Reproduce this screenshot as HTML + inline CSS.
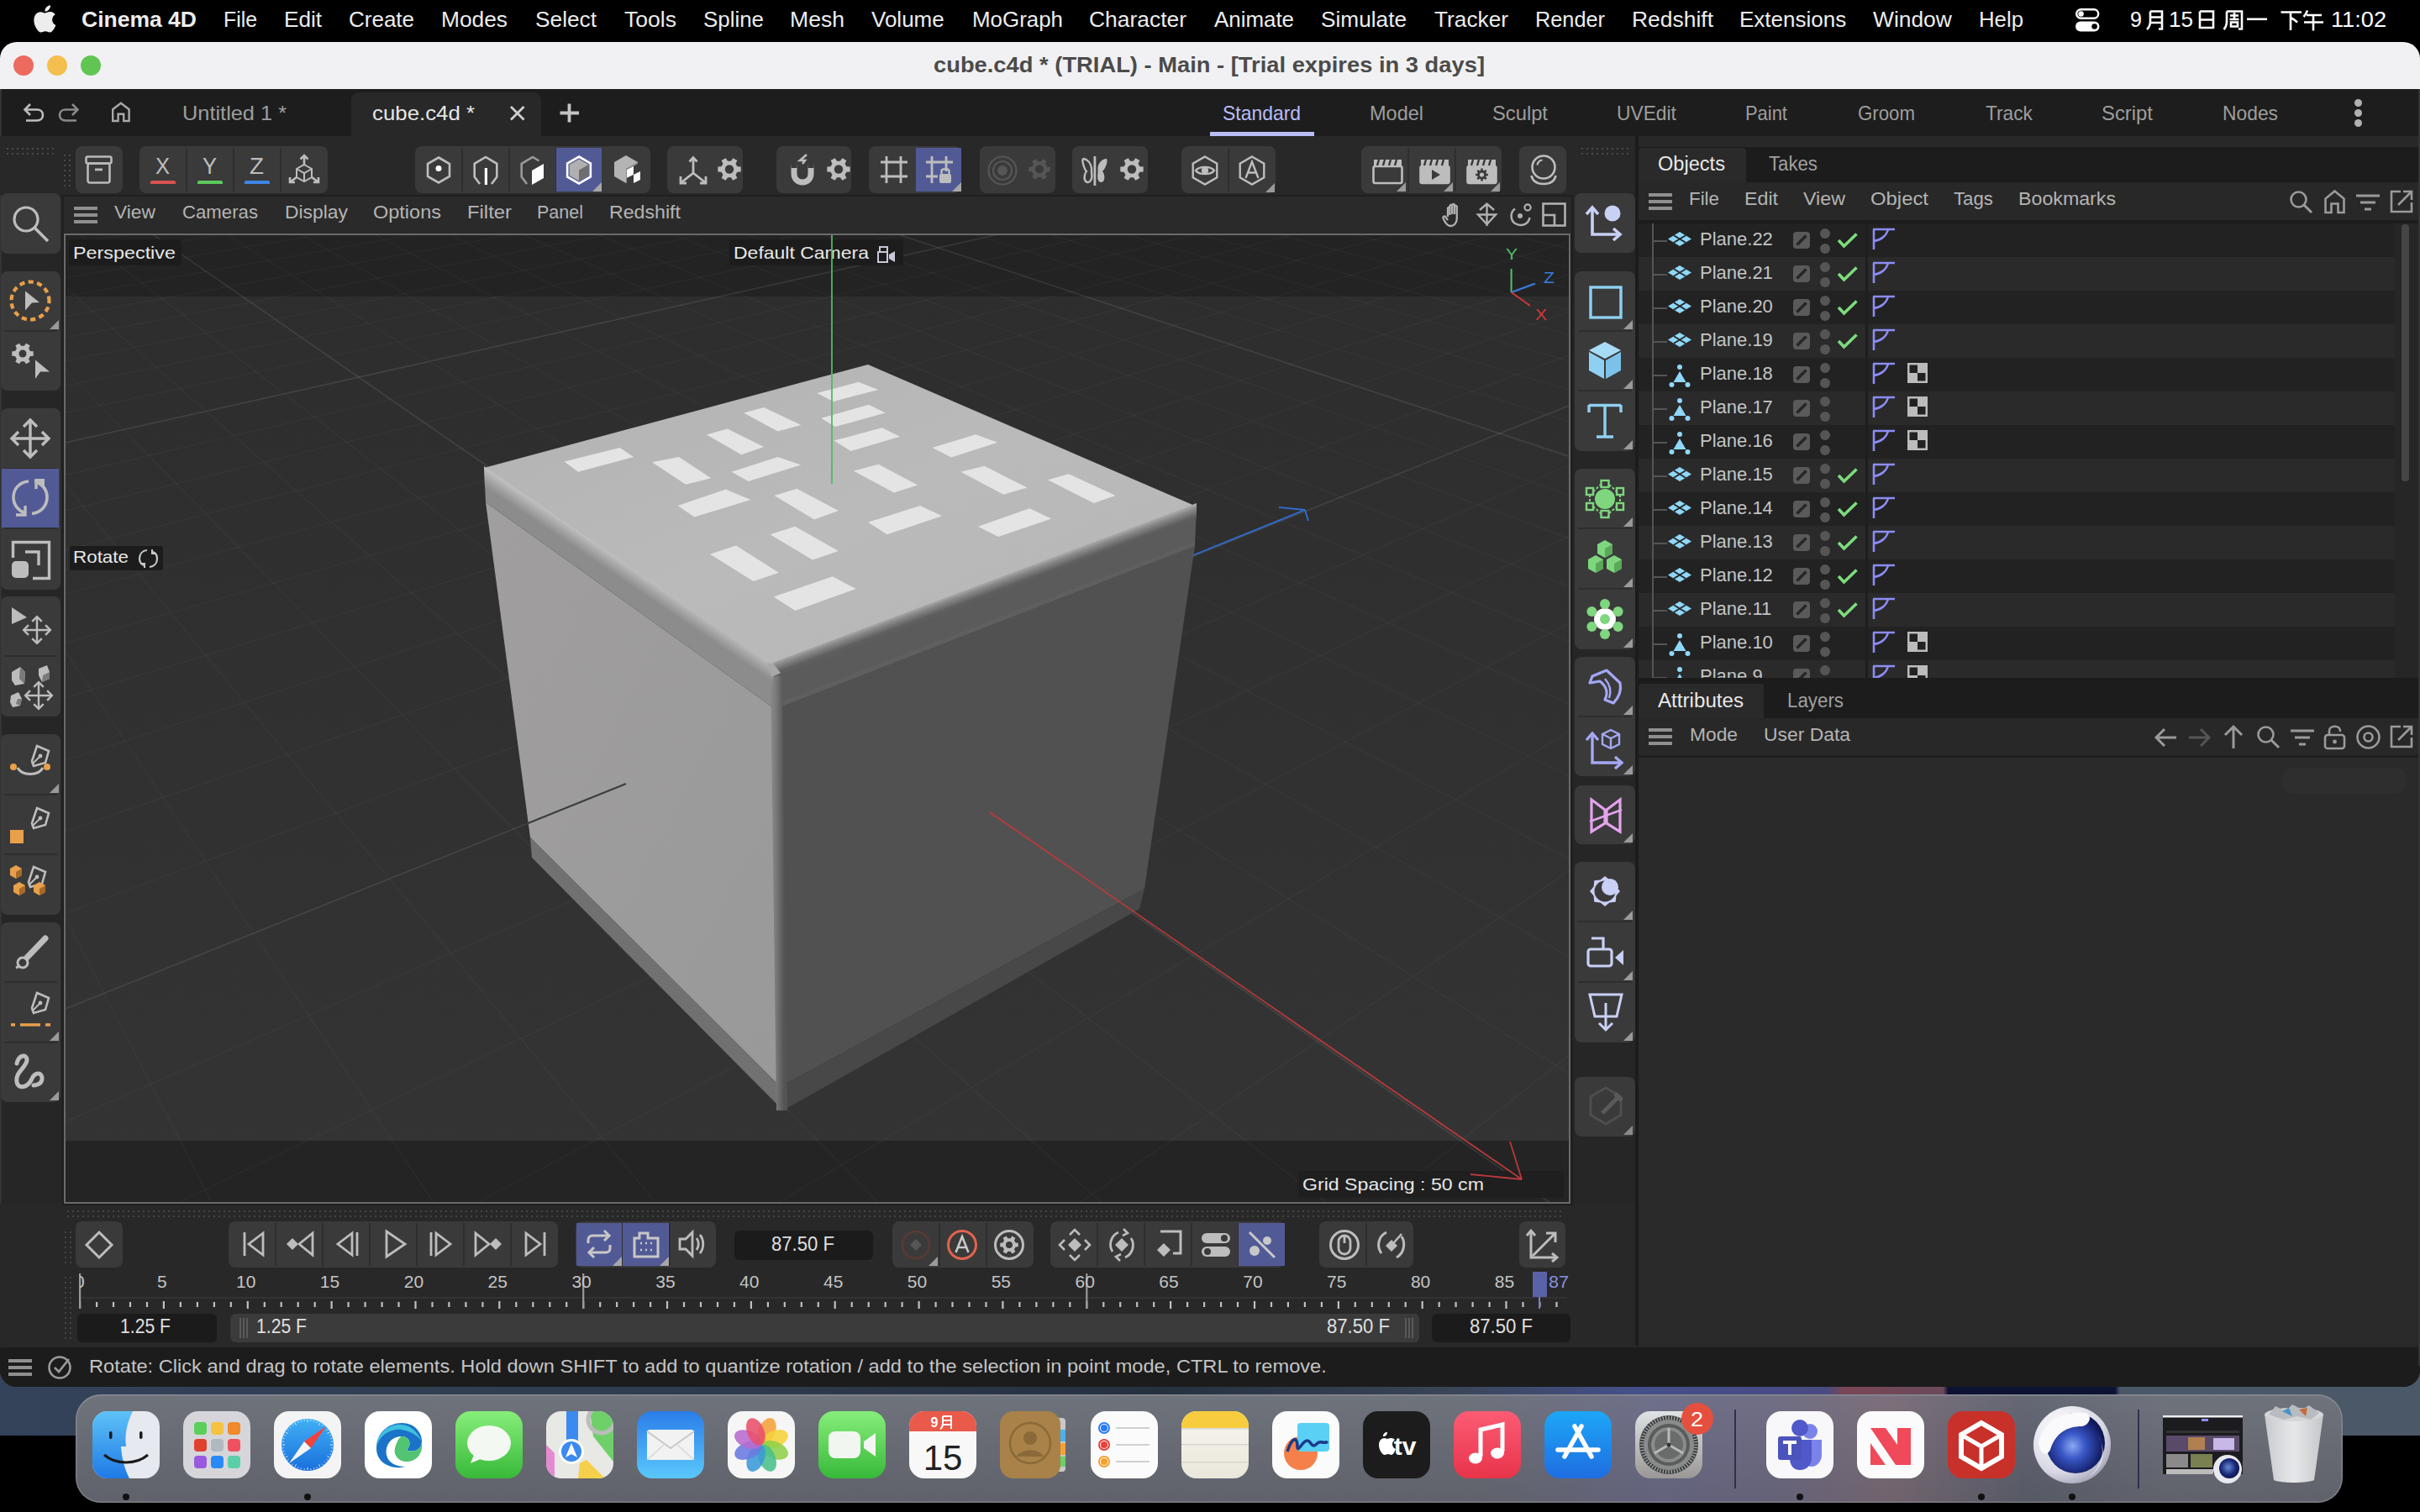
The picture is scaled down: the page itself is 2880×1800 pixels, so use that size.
<!DOCTYPE html><html><head><meta charset="utf-8"><style>
html,body{margin:0;padding:0;}
body{width:2880px;height:1800px;overflow:hidden;position:relative;background:#000;font-family:"Liberation Sans",sans-serif;}
.t{position:absolute;white-space:nowrap;}
svg{position:absolute;overflow:visible;}
</style></head><body>
<div style="position:absolute;left:0px;top:1630px;width:2880px;height:79px;background:linear-gradient(90deg,#34435a 0%,#2f3b4e 30%,#25313f 48%,#3a4557 60%,#44508a 67.4%,#4a4a82 75.5%,#7a4556 76.2%,#6a4a5a 80.3%,#0e1232 80.5%,#0e1232 87.4%,#4a5868 87.6%,#4a5868 100%);"></div>
<div style="position:absolute;left:0px;top:50px;width:2880px;height:1601px;background:#262626;border-radius:20px;"></div>
<div style="position:absolute;left:0px;top:50px;width:2880px;height:56px;background:#f1f1f3;border-radius:20px 20px 0 0;"></div>
<div style="position:absolute;left:16px;top:66px;width:24px;height:24px;border-radius:50%;background:#ed6a5f;"></div>
<div style="position:absolute;left:56px;top:66px;width:24px;height:24px;border-radius:50%;background:#f5bf4f;"></div>
<div style="position:absolute;left:96px;top:66px;width:24px;height:24px;border-radius:50%;background:#61c554;"></div>
<div class="t" style="left:1111.00px;top:52.34px;height:50px;line-height:50px;font-size:25px;color:#4b4b4b;font-weight:bold;transform:scaleX(1.0931);transform-origin:0 0;">cube.c4d * (TRIAL) - Main - [Trial expires in 3 days]</div>
<div style="position:absolute;left:0px;top:0px;width:2880px;height:50px;background:#000;"></div>
<svg style="position:absolute;left:39px;top:5px;overflow:visible;" width="30" height="36" viewBox="0 0 30 36"><path transform="scale(0.95)" fill="#ededed" d="M24.5 19.2c0-4.2 3.4-6.2 3.6-6.300-2-2.900-5.100-3.300-6.200-3.300-2.600-.3-5.100 1.500-6.400 1.500-1.300 0-3.400-1.500-5.600-1.400-2.900 0-5.500 1.700-7 4.200-3 5.200-.8 12.900 2.100 17.100 1.400 2.100 3.100 4.400 5.300 4.300 2.100-.1 2.900-1.400 5.500-1.400 2.500 0 3.300 1.400 5.500 1.300 2.300 0 3.700-2.100 5.100-4.200 1.600-2.400 2.300-4.700 2.300-4.800-.1 0-4.400-1.700-4.400-6.900zM20.300 6.600c1.200-1.400 2-3.400 1.800-5.400-1.700.1-3.800 1.200-5 2.600-1.100 1.300-2.100 3.300-1.800 5.300 1.900.1 3.800-1 5-2.500z"/></svg>
<div class="t" style="left:97.00px;top:-3.01px;height:52px;line-height:52px;font-size:26px;color:#ededed;font-weight:bold;transform:scaleX(1.0195);transform-origin:0 0;">Cinema 4D</div>
<div class="t" style="left:266.00px;top:-3.01px;height:52px;line-height:52px;font-size:26px;color:#ededed;font-weight:normal;transform:scaleX(0.9552);transform-origin:0 0;">File</div>
<div class="t" style="left:338.00px;top:-3.01px;height:52px;line-height:52px;font-size:26px;color:#ededed;font-weight:normal;transform:scaleX(1.0056);transform-origin:0 0;">Edit</div>
<div class="t" style="left:415.00px;top:-3.01px;height:52px;line-height:52px;font-size:26px;color:#ededed;font-weight:normal;">Create</div>
<div class="t" style="left:525.00px;top:-3.01px;height:52px;line-height:52px;font-size:26px;color:#ededed;font-weight:normal;transform:scaleX(1.0128);transform-origin:0 0;">Modes</div>
<div class="t" style="left:637.00px;top:-3.01px;height:52px;line-height:52px;font-size:26px;color:#ededed;font-weight:normal;transform:scaleX(1.0104);transform-origin:0 0;">Select</div>
<div class="t" style="left:743.00px;top:-3.01px;height:52px;line-height:52px;font-size:26px;color:#ededed;font-weight:normal;transform:scaleX(1.0206);transform-origin:0 0;">Tools</div>
<div class="t" style="left:837.00px;top:-3.01px;height:52px;line-height:52px;font-size:26px;color:#ededed;font-weight:normal;transform:scaleX(0.9965);transform-origin:0 0;">Spline</div>
<div class="t" style="left:940.00px;top:-3.01px;height:52px;line-height:52px;font-size:26px;color:#ededed;font-weight:normal;transform:scaleX(1.0216);transform-origin:0 0;">Mesh</div>
<div class="t" style="left:1037.00px;top:-3.01px;height:52px;line-height:52px;font-size:26px;color:#ededed;font-weight:normal;">Volume</div>
<div class="t" style="left:1157.00px;top:-3.01px;height:52px;line-height:52px;font-size:26px;color:#ededed;font-weight:normal;transform:scaleX(0.9965);transform-origin:0 0;">MoGraph</div>
<div class="t" style="left:1296.00px;top:-3.01px;height:52px;line-height:52px;font-size:26px;color:#ededed;font-weight:normal;transform:scaleX(1.0164);transform-origin:0 0;">Character</div>
<div class="t" style="left:1445.00px;top:-3.01px;height:52px;line-height:52px;font-size:26px;color:#ededed;font-weight:normal;transform:scaleX(0.9961);transform-origin:0 0;">Animate</div>
<div class="t" style="left:1572.00px;top:-3.01px;height:52px;line-height:52px;font-size:26px;color:#ededed;font-weight:normal;transform:scaleX(1.0087);transform-origin:0 0;">Simulate</div>
<div class="t" style="left:1707.00px;top:-3.01px;height:52px;line-height:52px;font-size:26px;color:#ededed;font-weight:normal;transform:scaleX(1.0100);transform-origin:0 0;">Tracker</div>
<div class="t" style="left:1827.00px;top:-3.01px;height:52px;line-height:52px;font-size:26px;color:#ededed;font-weight:normal;transform:scaleX(0.9736);transform-origin:0 0;">Render</div>
<div class="t" style="left:1942.00px;top:-3.01px;height:52px;line-height:52px;font-size:26px;color:#ededed;font-weight:normal;transform:scaleX(1.0170);transform-origin:0 0;">Redshift</div>
<div class="t" style="left:2070.00px;top:-3.01px;height:52px;line-height:52px;font-size:26px;color:#ededed;font-weight:normal;">Extensions</div>
<div class="t" style="left:2229.00px;top:-3.01px;height:52px;line-height:52px;font-size:26px;color:#ededed;font-weight:normal;transform:scaleX(1.0148);transform-origin:0 0;">Window</div>
<div class="t" style="left:2355.00px;top:-3.01px;height:52px;line-height:52px;font-size:26px;color:#ededed;font-weight:normal;transform:scaleX(0.9907);transform-origin:0 0;">Help</div>
<svg style="position:absolute;left:2470px;top:10px;overflow:visible;" width="30" height="28" viewBox="0 0 30 28"><rect x="1.2" y="1.2" width="26" height="10.5" rx="5.25" fill="none" stroke="#fff" stroke-width="2.4"/><circle cx="6.6" cy="6.45" r="3.2" fill="#fff"/><rect x="0" y="15.5" width="28.5" height="12" rx="6" fill="#fff"/><circle cx="22.6" cy="21.5" r="3.3" fill="#000"/></svg>
<div class="t" style="left:2535.00px;top:-3.01px;height:52px;line-height:52px;font-size:26px;color:#fff;font-weight:normal;transform:scaleX(0.9655);transform-origin:0 0;">9</div>
<div class="t" style="left:2581.00px;top:-3.01px;height:52px;line-height:52px;font-size:26px;color:#fff;font-weight:normal;transform:scaleX(1.0043);transform-origin:0 0;">15</div>
<div class="t" style="left:2774.00px;top:-3.01px;height:52px;line-height:52px;font-size:26px;color:#fff;font-weight:normal;transform:scaleX(1.0455);transform-origin:0 0;">11:02</div>
<svg style="position:absolute;left:2554px;top:12px;overflow:visible;" width="22" height="24" viewBox="0 0 22 24"><path stroke="#fff" stroke-width="2.6" fill="none" stroke-linecap="butt" d="M5 1.5H19V22.5H15M5 1.5V13C5 18 3.5 21 1 23M5 8.5H19M5 15H19"/></svg>
<svg style="position:absolute;left:2616px;top:12px;overflow:visible;" width="20" height="23" viewBox="0 0 20 23"><path stroke="#fff" stroke-width="2.6" fill="none" stroke-linecap="butt" d="M2 1.5H18V22M2 1.5V22M2 11.5H18M2 21H18"/></svg>
<svg style="position:absolute;left:2646px;top:12px;overflow:visible;" width="24" height="24" viewBox="0 0 24 24"><path stroke="#fff" stroke-width="2.6" fill="none" stroke-linecap="butt" d="M4 1.5H22V22.5H18M4 1.5V13C4 18 2.5 21 0.5 23M8 6.5H18M13 3V11M7.5 11H18.5M9 14.5H17V19.5H9Z"/></svg>
<svg style="position:absolute;left:2674px;top:20px;overflow:visible;" width="25" height="6" viewBox="0 0 25 6"><path stroke="#fff" stroke-width="2.6" fill="none" stroke-linecap="butt" d="M0 2.8H24"/></svg>
<svg style="position:absolute;left:2714px;top:12px;overflow:visible;" width="26" height="25" viewBox="0 0 26 25"><path stroke="#fff" stroke-width="2.6" fill="none" stroke-linecap="butt" d="M0.5 2.5H25M12 2.5V24M12 9C15 10.5 18 12.5 20 14.5"/></svg>
<svg style="position:absolute;left:2740px;top:12px;overflow:visible;" width="26" height="25" viewBox="0 0 26 25"><path stroke="#fff" stroke-width="2.6" fill="none" stroke-linecap="butt" d="M6 0.5C5 3.5 3.5 6 1.5 8M5 6H23M2 14.5H25M13 6V24.5"/></svg>
<div style="position:absolute;left:0px;top:106px;width:2880px;height:56px;background:#1d1d1d;"></div>
<div style="position:absolute;left:0px;top:106px;width:2px;height:1520px;background:#333;"></div>
<svg style="position:absolute;left:26px;top:121px;overflow:visible;" width="30" height="26" viewBox="0 0 30 26"><path d="M4 9.5H18C22.5 9.5 25 12.5 25 16S22.5 22.5 18 22.5H5" fill="none" stroke="#bdbdbd" stroke-width="2.6"/><path d="M10 3L3.5 9.5L10 16" fill="none" stroke="#bdbdbd" stroke-width="2.6"/></svg>
<svg style="position:absolute;left:66px;top:121px;overflow:visible;" width="30" height="26" viewBox="0 0 30 26"><path d="M26 9.5H12C7.5 9.5 5 12.5 5 16S7.5 22.5 12 22.5H25" fill="none" stroke="#8a8a8a" stroke-width="2.6"/><path d="M20 3L26.5 9.5L20 16" fill="none" stroke="#8a8a8a" stroke-width="2.6"/></svg>
<svg style="position:absolute;left:132px;top:121px;overflow:visible;" width="24" height="26" viewBox="0 0 24 26"><path d="M2.2 23V9.2L11.9 1.8L21.6 9.2V23H15.2V14.8H8.6V23Z" fill="none" stroke="#a8a8a8" stroke-width="2.4"/></svg>
<div class="t" style="left:217.00px;top:110.68px;height:48px;line-height:48px;font-size:24px;color:#9e9e9e;font-weight:normal;transform:scaleX(1.0564);transform-origin:0 0;">Untitled 1 *</div>
<div style="position:absolute;left:418px;top:110px;width:226px;height:56px;background:#282828;border-radius:9px 9px 0 0;"></div>
<div class="t" style="left:443.00px;top:110.68px;height:48px;line-height:48px;font-size:24px;color:#e6e6e6;font-weight:normal;transform:scaleX(1.0761);transform-origin:0 0;">cube.c4d *</div>
<svg style="position:absolute;left:606px;top:125px;overflow:visible;" width="20" height="20" viewBox="0 0 20 20"><path d="M2 2L17.5 17.5M17.5 2L2 17.5" stroke="#d0d0d0" stroke-width="2.8"/></svg>
<svg style="position:absolute;left:666px;top:122px;overflow:visible;" width="24" height="24" viewBox="0 0 24 24"><path d="M11.5 1.5V23.5M0.5 12.5H23" stroke="#c4c4c4" stroke-width="3.8"/></svg>
<div class="t" style="left:1455.00px;top:110.68px;height:48px;line-height:48px;font-size:24px;color:#b9bdf5;font-weight:normal;transform:scaleX(0.9551);transform-origin:0 0;">Standard</div>
<div class="t" style="left:1630.00px;top:110.68px;height:48px;line-height:48px;font-size:24px;color:#9e9e9e;font-weight:normal;transform:scaleX(0.9790);transform-origin:0 0;">Model</div>
<div class="t" style="left:1776.00px;top:110.68px;height:48px;line-height:48px;font-size:24px;color:#9e9e9e;font-weight:normal;transform:scaleX(0.9888);transform-origin:0 0;">Sculpt</div>
<div class="t" style="left:1924.00px;top:110.68px;height:48px;line-height:48px;font-size:24px;color:#9e9e9e;font-weight:normal;transform:scaleX(0.9498);transform-origin:0 0;">UVEdit</div>
<div class="t" style="left:2077.00px;top:110.68px;height:48px;line-height:48px;font-size:24px;color:#9e9e9e;font-weight:normal;transform:scaleX(0.9132);transform-origin:0 0;">Paint</div>
<div class="t" style="left:2211.00px;top:110.68px;height:48px;line-height:48px;font-size:24px;color:#9e9e9e;font-weight:normal;transform:scaleX(0.9267);transform-origin:0 0;">Groom</div>
<div class="t" style="left:2363.00px;top:110.68px;height:48px;line-height:48px;font-size:24px;color:#9e9e9e;font-weight:normal;transform:scaleX(0.9451);transform-origin:0 0;">Track</div>
<div class="t" style="left:2501.00px;top:110.68px;height:48px;line-height:48px;font-size:24px;color:#9e9e9e;font-weight:normal;transform:scaleX(0.9939);transform-origin:0 0;">Script</div>
<div class="t" style="left:2645.00px;top:110.68px;height:48px;line-height:48px;font-size:24px;color:#9e9e9e;font-weight:normal;transform:scaleX(0.9514);transform-origin:0 0;">Nodes</div>
<div style="position:absolute;left:1440px;top:157px;width:124px;height:5px;background:#b9bdf5;"></div>
<div style="position:absolute;left:2802px;top:118px;width:9px;height:9px;border-radius:50%;background:#b0b0b0;"></div>
<div style="position:absolute;left:2802px;top:130px;width:9px;height:9px;border-radius:50%;background:#b0b0b0;"></div>
<div style="position:absolute;left:2802px;top:142px;width:9px;height:9px;border-radius:50%;background:#b0b0b0;"></div>
<div style="position:absolute;left:0px;top:162px;width:2880px;height:70px;background:#282828;"></div>
<svg style="position:absolute;left:0px;top:0px;overflow:visible;" width="10" height="10" viewBox="0 0 10 10"><rect x="8" y="176" width="2" height="2" fill="#4a4a4a"/><rect x="14" y="176" width="2" height="2" fill="#4a4a4a"/><rect x="20" y="176" width="2" height="2" fill="#4a4a4a"/><rect x="26" y="176" width="2" height="2" fill="#4a4a4a"/><rect x="32" y="176" width="2" height="2" fill="#4a4a4a"/><rect x="38" y="176" width="2" height="2" fill="#4a4a4a"/><rect x="44" y="176" width="2" height="2" fill="#4a4a4a"/><rect x="50" y="176" width="2" height="2" fill="#4a4a4a"/><rect x="56" y="176" width="2" height="2" fill="#4a4a4a"/><rect x="62" y="176" width="2" height="2" fill="#4a4a4a"/><rect x="8" y="182" width="2" height="2" fill="#4a4a4a"/><rect x="14" y="182" width="2" height="2" fill="#4a4a4a"/><rect x="20" y="182" width="2" height="2" fill="#4a4a4a"/><rect x="26" y="182" width="2" height="2" fill="#4a4a4a"/><rect x="32" y="182" width="2" height="2" fill="#4a4a4a"/><rect x="38" y="182" width="2" height="2" fill="#4a4a4a"/><rect x="44" y="182" width="2" height="2" fill="#4a4a4a"/><rect x="50" y="182" width="2" height="2" fill="#4a4a4a"/><rect x="56" y="182" width="2" height="2" fill="#4a4a4a"/><rect x="62" y="182" width="2" height="2" fill="#4a4a4a"/><rect x="76" y="184" width="2" height="2" fill="#4a4a4a"/><rect x="76" y="190" width="2" height="2" fill="#4a4a4a"/><rect x="76" y="196" width="2" height="2" fill="#4a4a4a"/><rect x="76" y="202" width="2" height="2" fill="#4a4a4a"/><rect x="76" y="208" width="2" height="2" fill="#4a4a4a"/><rect x="76" y="214" width="2" height="2" fill="#4a4a4a"/><rect x="76" y="220" width="2" height="2" fill="#4a4a4a"/><rect x="82" y="184" width="2" height="2" fill="#4a4a4a"/><rect x="82" y="190" width="2" height="2" fill="#4a4a4a"/><rect x="82" y="196" width="2" height="2" fill="#4a4a4a"/><rect x="82" y="202" width="2" height="2" fill="#4a4a4a"/><rect x="82" y="208" width="2" height="2" fill="#4a4a4a"/><rect x="82" y="214" width="2" height="2" fill="#4a4a4a"/><rect x="82" y="220" width="2" height="2" fill="#4a4a4a"/></svg>
<svg style="position:absolute;left:0px;top:0px;overflow:visible;" width="10" height="10" viewBox="0 0 10 10"><rect x="1882" y="176" width="2" height="2" fill="#4a4a4a"/><rect x="1888" y="176" width="2" height="2" fill="#4a4a4a"/><rect x="1894" y="176" width="2" height="2" fill="#4a4a4a"/><rect x="1900" y="176" width="2" height="2" fill="#4a4a4a"/><rect x="1906" y="176" width="2" height="2" fill="#4a4a4a"/><rect x="1912" y="176" width="2" height="2" fill="#4a4a4a"/><rect x="1918" y="176" width="2" height="2" fill="#4a4a4a"/><rect x="1924" y="176" width="2" height="2" fill="#4a4a4a"/><rect x="1930" y="176" width="2" height="2" fill="#4a4a4a"/><rect x="1936" y="176" width="2" height="2" fill="#4a4a4a"/><rect x="1882" y="182" width="2" height="2" fill="#4a4a4a"/><rect x="1888" y="182" width="2" height="2" fill="#4a4a4a"/><rect x="1894" y="182" width="2" height="2" fill="#4a4a4a"/><rect x="1900" y="182" width="2" height="2" fill="#4a4a4a"/><rect x="1906" y="182" width="2" height="2" fill="#4a4a4a"/><rect x="1912" y="182" width="2" height="2" fill="#4a4a4a"/><rect x="1918" y="182" width="2" height="2" fill="#4a4a4a"/><rect x="1924" y="182" width="2" height="2" fill="#4a4a4a"/><rect x="1930" y="182" width="2" height="2" fill="#4a4a4a"/><rect x="1936" y="182" width="2" height="2" fill="#4a4a4a"/></svg>
<div style="position:absolute;left:90px;top:174px;width:56px;height:56px;background:#3a3a3a;border-radius:8px;"></div>
<svg style="position:absolute;left:100px;top:184px;overflow:visible;" width="36" height="36" viewBox="0 0 36 36"><rect x="2.5" y="2.5" width="30" height="8" rx="2" fill="none" stroke="#bababa" stroke-width="2.6"/><rect x="4.5" y="10.5" width="26" height="23" rx="2.5" fill="none" stroke="#bababa" stroke-width="2.6"/><rect x="13" y="16.5" width="9" height="2.8" fill="#bababa"/></svg>
<div style="position:absolute;left:166px;top:174px;width:224px;height:56px;background:#3a3a3a;border-radius:8px;"></div>
<div style="position:absolute;left:221px;top:176px;width:2px;height:52px;background:#2e2e2e;"></div>
<div style="position:absolute;left:277px;top:176px;width:2px;height:52px;background:#2e2e2e;"></div>
<div style="position:absolute;left:333px;top:176px;width:2px;height:52px;background:#2e2e2e;"></div>
<div class="t" style="left:185.00px;top:170.30px;height:56px;line-height:56px;font-size:28px;color:#bdbdbd;font-weight:normal;transform:scaleX(0.9128);transform-origin:0 0;">X</div>
<div style="position:absolute;left:179px;top:215px;width:30px;height:4px;background:#d9534f;border-radius:2px 2px 0 0;"></div>
<div class="t" style="left:241.00px;top:170.30px;height:56px;line-height:56px;font-size:28px;color:#bdbdbd;font-weight:normal;transform:scaleX(0.9128);transform-origin:0 0;">Y</div>
<div style="position:absolute;left:235px;top:215px;width:30px;height:4px;background:#5cc85c;border-radius:2px 2px 0 0;"></div>
<div class="t" style="left:297.00px;top:170.30px;height:56px;line-height:56px;font-size:28px;color:#bdbdbd;font-weight:normal;transform:scaleX(0.9927);transform-origin:0 0;">Z</div>
<div style="position:absolute;left:291px;top:215px;width:30px;height:4px;background:#3e86e6;border-radius:2px 2px 0 0;"></div>
<svg style="position:absolute;left:342px;top:183px;overflow:visible;" width="40" height="38" viewBox="0 0 40 38"><path d="M20 13L29 18V28L20 33L11 28V18Z M11 18L20 23L29 18 M20 23V33" fill="none" stroke="#bdbdbd" stroke-width="2"/><path d="M20 13V2M15.5 6.5L20 2L24.5 6.5" fill="none" stroke="#bdbdbd" stroke-width="2.6"/><path d="M11 28L3 34M3 28V34H9 M29 28L37 34M37 28V34H31" fill="none" stroke="#bdbdbd" stroke-width="2.6"/></svg>
<div style="position:absolute;left:494px;top:174px;width:280px;height:56px;background:#3a3a3a;border-radius:8px;"></div>
<div style="position:absolute;left:549px;top:176px;width:2px;height:52px;background:#2e2e2e;"></div>
<div style="position:absolute;left:605px;top:176px;width:2px;height:52px;background:#2e2e2e;"></div>
<div style="position:absolute;left:661px;top:176px;width:2px;height:52px;background:#2e2e2e;"></div>
<div style="position:absolute;left:662px;top:176px;width:54px;height:52px;background:#525a96;"></div>
<svg style="position:absolute;left:704px;top:216px;overflow:visible;" width="12" height="12" viewBox="0 0 12 12"><polygon points="12,1 12,12 1,12" fill="#a8a8a8"/></svg>
<svg style="position:absolute;left:505px;top:185px;overflow:visible;" width="36" height="38" viewBox="0 0 36 38"><polygon points="17.00,2.50 29.99,10.00 29.99,25.00 17.00,32.50 4.01,25.00 4.01,10.00" fill="none" stroke="#bdbdbd" stroke-width="2.6"/><circle cx="17" cy="15.5" r="3.5" fill="#fff"/></svg>
<svg style="position:absolute;left:561px;top:185px;overflow:visible;" width="36" height="38" viewBox="0 0 36 38"><path d="M10 34L3.7 25.5V9.8L17 2L30.3 9.8V25.5L24 34" fill="none" stroke="#bdbdbd" stroke-width="2.6"/><rect x="15.8" y="15" width="3.2" height="20" fill="#fff"/></svg>
<svg style="position:absolute;left:617px;top:185px;overflow:visible;" width="36" height="38" viewBox="0 0 36 38"><path d="M10 34L3.7 25.5V9.8L17 2L24.5 6.5" fill="none" stroke="#9a9a9a" stroke-width="2.6"/><polygon points="16,18 30,10 30,27 16,35" fill="#fff"/></svg>
<svg style="position:absolute;left:672px;top:185px;overflow:visible;" width="36" height="38" viewBox="0 0 36 38"><polygon points="17.00,1.50 30.86,9.50 30.86,25.50 17.00,33.50 3.14,25.50 3.14,9.50" fill="none" stroke="#fff" stroke-width="2.6"/><polygon points="17.00,4.50 28.26,11.00 28.26,24.00 17.00,30.50 5.74,24.00 5.74,11.00" fill="#b0b0b0"/><polygon points="17,17.5 28.3,11 28.3,24 17,30.5" fill="#6e6e6e"/></svg>
<svg style="position:absolute;left:728px;top:183px;overflow:visible;" width="38" height="38" viewBox="0 0 38 38"><polygon points="3,10 17,2 31,10 31,27 17,35 3,27" fill="#b4b4b4"/><polygon points="17,18 38,8 38,40 17,40" fill="#3a3a3a"/><polygon points="17,18 31,10 31,27 17,35" fill="#8a8a8a"/><polygon points="18,19 26,15 26,25 18,29" fill="#3a3a3a"/><polygon points="18,19 26,15 26,25 18,29" fill="#fff"/><polygon points="26,25 34,21 34,31 26,35" fill="#fff"/><polygon points="26,15 31,12 31,22 26,25" fill="#3a3a3a"/><polygon points="18,29 26,25 26,35 18,38" fill="#3a3a3a"/></svg>
<div style="position:absolute;left:794px;top:174px;width:90px;height:56px;background:#3a3a3a;border-radius:8px;"></div>
<svg style="position:absolute;left:806px;top:184px;overflow:visible;" width="38" height="38" viewBox="0 0 38 38"><path d="M19 4V22L5 33M19 22L33 33" fill="none" stroke="#bdbdbd" stroke-width="2.8"/><path d="M14.5 8.5L19 3.5L23.5 8.5" fill="none" stroke="#bdbdbd" stroke-width="2.8"/><path d="M4 26V34H11M34 26V34H27" fill="none" stroke="#bdbdbd" stroke-width="2.8"/></svg>
<svg style="position:absolute;left:851px;top:185px;overflow:visible;" width="34" height="34" viewBox="0 0 34 34"><polygon points="26.47,13.29 30.69,13.59 30.69,19.41 26.47,19.71 24.52,23.09 26.37,26.90 21.33,29.81 18.95,26.31 15.05,26.31 12.67,29.81 7.63,26.90 9.48,23.09 7.53,19.71 3.31,19.41 3.31,13.59 7.53,13.29 9.48,9.91 7.63,6.10 12.67,3.19 15.05,6.69 18.95,6.69 21.33,3.19 26.37,6.10 24.52,9.91" fill="#bdbdbd"/><circle cx="17" cy="16.5" r="5.2" fill="#3a3a3a"/></svg>
<div style="position:absolute;left:924px;top:174px;width:89px;height:56px;background:#3a3a3a;border-radius:8px;"></div>
<svg style="position:absolute;left:940px;top:182px;overflow:visible;" width="34" height="40" viewBox="0 0 34 40"><path d="M5 14V25C5 31 9.5 35 15 35S25 31 25 25V14" fill="none" stroke="#bdbdbd" stroke-width="7"/><rect x="1.5" y="13" width="7" height="5" fill="#3a3a3a"/><rect x="21.5" y="13" width="7" height="5" fill="#3a3a3a"/><path d="M20 2L12 9H18L15 13" fill="none" stroke="#bdbdbd" stroke-width="2.6"/></svg>
<svg style="position:absolute;left:981px;top:185px;overflow:visible;" width="34" height="34" viewBox="0 0 34 34"><polygon points="26.47,13.29 30.69,13.59 30.69,19.41 26.47,19.71 24.52,23.09 26.37,26.90 21.33,29.81 18.95,26.31 15.05,26.31 12.67,29.81 7.63,26.90 9.48,23.09 7.53,19.71 3.31,19.41 3.31,13.59 7.53,13.29 9.48,9.91 7.63,6.10 12.67,3.19 15.05,6.69 18.95,6.69 21.33,3.19 26.37,6.10 24.52,9.91" fill="#bdbdbd"/><circle cx="17" cy="16.5" r="5.2" fill="#3a3a3a"/></svg>
<div style="position:absolute;left:1034px;top:174px;width:110px;height:56px;background:#3a3a3a;border-radius:8px;"></div>
<div style="position:absolute;left:1090px;top:176px;width:54px;height:52px;background:#525a96;"></div>
<svg style="position:absolute;left:1132px;top:216px;overflow:visible;" width="12" height="12" viewBox="0 0 12 12"><polygon points="12,1 12,12 1,12" fill="#a8a8a8"/></svg>
<svg style="position:absolute;left:1046px;top:184px;overflow:visible;" width="36" height="36" viewBox="0 0 36 36"><path d="M9 2V34M26 2V34M2 9H34M2 26H34" stroke="#bdbdbd" stroke-width="2.8"/></svg>
<svg style="position:absolute;left:1100px;top:184px;overflow:visible;" width="36" height="36" viewBox="0 0 36 36"><path d="M9 2V34M26 2V20M2 9H34M2 26H16" stroke="#bdbdbd" stroke-width="2.8"/><rect x="18" y="23" width="14" height="11" rx="2" fill="#bdbdbd"/><path d="M20.5 23V19.5C20.5 16.5 29.5 16.5 29.5 19.5V23" fill="none" stroke="#bdbdbd" stroke-width="2.4"/></svg>
<div style="position:absolute;left:1166px;top:174px;width:90px;height:56px;background:#3a3a3a;border-radius:8px;"></div>
<svg style="position:absolute;left:1175px;top:185px;overflow:visible;" width="36" height="36" viewBox="0 0 36 36"><circle cx="18" cy="18" r="16.5" fill="none" stroke="#555" stroke-width="2.2"/><circle cx="18" cy="18" r="11" fill="none" stroke="#555" stroke-width="2.2"/><circle cx="18" cy="18" r="6" fill="#555"/></svg>
<svg style="position:absolute;left:1220px;top:185px;overflow:visible;" width="34" height="34" viewBox="0 0 34 34"><polygon points="26.00,13.45 29.72,13.80 29.72,19.20 26.00,19.55 24.14,22.76 25.70,26.16 21.02,28.86 18.85,25.82 15.15,25.82 12.98,28.86 8.30,26.16 9.86,22.76 8.00,19.55 4.28,19.20 4.28,13.80 8.00,13.45 9.86,10.24 8.30,6.84 12.98,4.14 15.15,7.18 18.85,7.18 21.02,4.14 25.70,6.84 24.14,10.24" fill="#555"/><circle cx="17" cy="16.5" r="5" fill="#3a3a3a"/></svg>
<div style="position:absolute;left:1276px;top:174px;width:90px;height:56px;background:#3a3a3a;border-radius:8px;"></div>
<svg style="position:absolute;left:1285px;top:185px;overflow:visible;" width="36" height="36" viewBox="0 0 36 36"><rect x="16.5" y="1" width="2.8" height="35" fill="#bdbdbd"/><path d="M14 15C13 9 9 5 5 4C3 4 3 6 4 10C5 14 6 17 8 19C6 21 5 26 6 29C7 32 10 33 12 31C14 29 15 25 14 20Z" fill="none" stroke="#bdbdbd" stroke-width="2.4"/><path d="M21.5 15C22 9 26 5 31 4C33 4 33 6 32 10C31 14 29 17 27 19C29 21 30 26 29 29C28 32 25 33 23 31C21 29 21 25 21.5 20Z" fill="#bdbdbd"/></svg>
<svg style="position:absolute;left:1330px;top:185px;overflow:visible;" width="34" height="34" viewBox="0 0 34 34"><polygon points="26.47,13.29 30.69,13.59 30.69,19.41 26.47,19.71 24.52,23.09 26.37,26.90 21.33,29.81 18.95,26.31 15.05,26.31 12.67,29.81 7.63,26.90 9.48,23.09 7.53,19.71 3.31,19.41 3.31,13.59 7.53,13.29 9.48,9.91 7.63,6.10 12.67,3.19 15.05,6.69 18.95,6.69 21.33,3.19 26.37,6.10 24.52,9.91" fill="#bdbdbd"/><circle cx="17" cy="16.5" r="5.2" fill="#3a3a3a"/></svg>
<div style="position:absolute;left:1406px;top:174px;width:112px;height:56px;background:#3a3a3a;border-radius:8px;"></div>
<div style="position:absolute;left:1461px;top:176px;width:2px;height:52px;background:#2e2e2e;"></div>
<svg style="position:absolute;left:1415px;top:184px;overflow:visible;" width="38" height="38" viewBox="0 0 38 38"><polygon points="19.00,2.50 33.29,10.75 33.29,27.25 19.00,35.50 4.71,27.25 4.71,10.75" fill="none" stroke="#bdbdbd" stroke-width="2.4"/><path d="M8 19C12 13.5 26 13.5 30 19C26 24.5 12 24.5 8 19Z" fill="none" stroke="#bdbdbd" stroke-width="2.4"/><circle cx="19" cy="19" r="4.2" fill="#bdbdbd"/></svg>
<svg style="position:absolute;left:1471px;top:184px;overflow:visible;" width="38" height="38" viewBox="0 0 38 38"><polygon points="19.00,2.50 33.29,10.75 33.29,27.25 19.00,35.50 4.71,27.25 4.71,10.75" fill="none" stroke="#bdbdbd" stroke-width="2.4"/><path d="M11.5 28L19 8.5L26.5 28M14 21.5H24" fill="none" stroke="#bdbdbd" stroke-width="2.4"/></svg>
<svg style="position:absolute;left:1506px;top:218px;overflow:visible;" width="12" height="12" viewBox="0 0 12 12"><polygon points="11,0 11,11 0,11" fill="#9a9a9a"/></svg>
<div style="position:absolute;left:1620px;top:174px;width:167px;height:56px;background:#3a3a3a;border-radius:8px;"></div>
<div style="position:absolute;left:1675px;top:176px;width:2px;height:52px;background:#2e2e2e;"></div>
<div style="position:absolute;left:1731px;top:176px;width:2px;height:52px;background:#2e2e2e;"></div>
<svg style="position:absolute;left:1632px;top:187px;overflow:visible;" width="40" height="34" viewBox="0 0 40 34"><rect x="2.5" y="11" width="34" height="20" rx="2" fill="none" stroke="#bdbdbd" stroke-width="2.6"/><path d="M2 9V3.5H37V9" fill="none" stroke="#bdbdbd" stroke-width="0"/><polygon points="3,3 36,3 36,10 3,10" fill="#bdbdbd"/><path d="M9 3L7 10M16 3L14 10M23 3L21 10M30 3L28 10" stroke="#383838" stroke-width="2.4"/></svg>
<svg style="position:absolute;left:1688px;top:187px;overflow:visible;" width="40" height="34" viewBox="0 0 40 34"><rect x="2.5" y="11" width="34" height="20" rx="2" fill="#bdbdbd" stroke="#bdbdbd" stroke-width="2.6"/><path d="M2 9V3.5H37V9" fill="none" stroke="#bdbdbd" stroke-width="0"/><polygon points="3,3 36,3 36,10 3,10" fill="#bdbdbd"/><path d="M9 3L7 10M16 3L14 10M23 3L21 10M30 3L28 10" stroke="#383838" stroke-width="2.4"/><polygon points="16,15 26,21 16,27" fill="#3a3a3a"/></svg>
<svg style="position:absolute;left:1744px;top:187px;overflow:visible;" width="40" height="34" viewBox="0 0 40 34"><rect x="2.5" y="11" width="34" height="20" rx="2" fill="#bdbdbd" stroke="#bdbdbd" stroke-width="2.6"/><path d="M2 9V3.5H37V9" fill="none" stroke="#bdbdbd" stroke-width="0"/><polygon points="3,3 36,3 36,10 3,10" fill="#bdbdbd"/><path d="M9 3L7 10M16 3L14 10M23 3L21 10M30 3L28 10" stroke="#383838" stroke-width="2.4"/><polygon points="24.84,19.66 26.91,19.83 26.91,22.17 24.84,22.34 24.22,23.83 25.57,25.41 23.91,27.07 22.33,25.72 20.84,26.34 20.67,28.41 18.33,28.41 18.16,26.34 16.67,25.72 15.09,27.07 13.43,25.41 14.78,23.83 14.16,22.34 12.09,22.17 12.09,19.83 14.16,19.66 14.78,18.17 13.43,16.59 15.09,14.93 16.67,16.28 18.16,15.66 18.33,13.59 20.67,13.59 20.84,15.66 22.33,16.28 23.91,14.93 25.57,16.59 24.22,18.17" fill="#3a3a3a"/><circle cx="19.5" cy="21" r="2.6" fill="#bdbdbd"/></svg>
<svg style="position:absolute;left:1662px;top:217px;overflow:visible;" width="12" height="12" viewBox="0 0 12 12"><polygon points="11,0 11,11 0,11" fill="#9a9a9a"/></svg>
<svg style="position:absolute;left:1718px;top:217px;overflow:visible;" width="12" height="12" viewBox="0 0 12 12"><polygon points="11,0 11,11 0,11" fill="#9a9a9a"/></svg>
<svg style="position:absolute;left:1774px;top:217px;overflow:visible;" width="12" height="12" viewBox="0 0 12 12"><polygon points="11,0 11,11 0,11" fill="#9a9a9a"/></svg>
<div style="position:absolute;left:1808px;top:174px;width:56px;height:56px;background:#3a3a3a;border-radius:8px;"></div>
<svg style="position:absolute;left:1818px;top:183px;overflow:visible;" width="38" height="40" viewBox="0 0 38 40"><circle cx="19" cy="16" r="13.5" fill="none" stroke="#bdbdbd" stroke-width="2.6"/><path d="M11.5 13.5C12 10 14.5 8 17.5 7.5" fill="none" stroke="#bdbdbd" stroke-width="2.2"/><path d="M4.5 26C6 33 12 36 19 36S32 33 33.5 26" fill="none" stroke="#bdbdbd" stroke-width="2.6"/></svg>
<div style="position:absolute;left:74px;top:232px;width:1798px;height:1203px;background:#1f1f1f;"></div>
<div style="position:absolute;left:76px;top:234px;width:1794px;height:44px;background:#2a2a2a;"></div>
<div style="position:absolute;left:88px;top:246px;width:28px;height:4px;background:#8f8f8f;"></div>
<div style="position:absolute;left:88px;top:254px;width:28px;height:4px;background:#8f8f8f;"></div>
<div style="position:absolute;left:88px;top:262px;width:28px;height:4px;background:#8f8f8f;"></div>
<div class="t" style="left:136.00px;top:231.38px;height:44px;line-height:44px;font-size:22px;color:#b4b4b4;font-weight:normal;transform:scaleX(1.0343);transform-origin:0 0;">View</div>
<div class="t" style="left:217.00px;top:231.38px;height:44px;line-height:44px;font-size:22px;color:#b4b4b4;font-weight:normal;transform:scaleX(1.0084);transform-origin:0 0;">Cameras</div>
<div class="t" style="left:339.00px;top:231.38px;height:44px;line-height:44px;font-size:22px;color:#b4b4b4;font-weight:normal;transform:scaleX(1.0399);transform-origin:0 0;">Display</div>
<div class="t" style="left:444.00px;top:231.38px;height:44px;line-height:44px;font-size:22px;color:#b4b4b4;font-weight:normal;transform:scaleX(1.0675);transform-origin:0 0;">Options</div>
<div class="t" style="left:556.00px;top:231.38px;height:44px;line-height:44px;font-size:22px;color:#b4b4b4;font-weight:normal;transform:scaleX(1.0844);transform-origin:0 0;">Filter</div>
<div class="t" style="left:639.00px;top:231.38px;height:44px;line-height:44px;font-size:22px;color:#b4b4b4;font-weight:normal;transform:scaleX(0.9778);transform-origin:0 0;">Panel</div>
<div class="t" style="left:725.00px;top:231.38px;height:44px;line-height:44px;font-size:22px;color:#b4b4b4;font-weight:normal;transform:scaleX(1.0526);transform-origin:0 0;">Redshift</div>
<svg style="position:absolute;left:1716px;top:241px;overflow:visible;" width="28" height="30" viewBox="0 0 28 30"><path d="M7 17V7.5C7 5.5 9.5 5.5 9.5 7.5V15M9.5 15V4.5C9.5 2.5 12.2 2.5 12.2 4.5V14M12.2 14V3.5C12.2 1.5 15 1.5 15 3.5V14M15 14V5.5C15 3.5 17.8 3.5 17.8 5.5V19C17.8 25 14 28 10.5 28C6.5 28 4.5 25 2.5 21L1.5 18.5C1 16.5 3.5 15.5 4.5 17.5L7 21" fill="none" stroke="#b0b0b0" stroke-width="2.3"/></svg>
<svg style="position:absolute;left:1756px;top:241px;overflow:visible;" width="28" height="30" viewBox="0 0 28 30"><path d="M13.5 2V28M5 9L13.5 1.5L22 9M3 14.5H24L13.5 26Z" fill="none" stroke="#b0b0b0" stroke-width="2.4"/></svg>
<svg style="position:absolute;left:1795px;top:241px;overflow:visible;" width="30" height="30" viewBox="0 0 30 30"><path d="M8 7.5C2 11.5 2 22 9 25.5S24 26 25.5 18" fill="none" stroke="#b0b0b0" stroke-width="2.5"/><circle cx="14" cy="16" r="3" fill="#b0b0b0"/><circle cx="23" cy="6" r="3.6" fill="none" stroke="#b0b0b0" stroke-width="2.2"/></svg>
<svg style="position:absolute;left:1835px;top:241px;overflow:visible;" width="30" height="30" viewBox="0 0 30 30"><rect x="1.5" y="1.5" width="26" height="26" fill="none" stroke="#b0b0b0" stroke-width="2.6"/><path d="M1.5 15H15V27.5" fill="none" stroke="#b0b0b0" stroke-width="2.6"/></svg>
<div style="position:absolute;left:76px;top:278px;width:1793px;height:1155px;background:#6a6a6a;"></div>
<svg style="left:78px;top:280px;overflow:hidden" width="1789" height="1151"><defs><linearGradient id="vpbg" x1="0" y1="0" x2="0" y2="1"><stop offset="0" stop-color="#2d2d2d"/><stop offset="1" stop-color="#343434"/></linearGradient></defs><rect x="0" y="0" width="1789" height="1151" fill="url(#vpbg)"/><rect x="0" y="0" width="1789" height="73" fill="#232323"/><rect x="0" y="1078" width="1789" height="73" fill="#242424"/><line x1="2161.4" y1="-4632.4" x2="3962.9" y2="-158.1" stroke="rgba(255,255,255,0.035)" stroke-width="1.3"/><line x1="2161.4" y1="-4632.4" x2="-926.2" y2="-249.8" stroke="rgba(255,255,255,0.035)" stroke-width="1.3"/><line x1="2831.7" y1="-5583.9" x2="3868.3" y2="-166.3" stroke="rgba(255,255,255,0.035)" stroke-width="1.3"/><line x1="1902.7" y1="-5274.9" x2="-877.0" y2="-253.4" stroke="rgba(255,255,255,0.035)" stroke-width="1.3"/><line x1="3911.1" y1="-7116.0" x2="3777.5" y2="-174.2" stroke="rgba(255,255,255,0.035)" stroke-width="1.3"/><line x1="1546.0" y1="-6160.9" x2="-828.8" y2="-257.0" stroke="rgba(255,255,255,0.035)" stroke-width="1.3"/><line x1="5938.1" y1="-9993.3" x2="3690.3" y2="-181.7" stroke="rgba(255,255,255,0.035)" stroke-width="1.3"/><line x1="1022.6" y1="-7460.9" x2="-781.7" y2="-260.5" stroke="rgba(255,255,255,0.035)" stroke-width="1.3"/><line x1="11138.4" y1="-17374.6" x2="3606.3" y2="-189.0" stroke="rgba(255,255,255,0.085)" stroke-width="1.8"/><line x1="179.9" y1="-9553.8" x2="-735.4" y2="-263.9" stroke="rgba(255,255,255,0.085)" stroke-width="1.8"/><line x1="53793.9" y1="-77921.4" x2="3525.5" y2="-196.0" stroke="rgba(255,255,255,0.035)" stroke-width="1.3"/><line x1="-1402.4" y1="-13483.6" x2="-690.1" y2="-267.2" stroke="rgba(255,255,255,0.035)" stroke-width="1.3"/><line x1="-21656.7" y1="29175.8" x2="3447.7" y2="-202.7" stroke="rgba(255,255,255,0.035)" stroke-width="1.3"/><line x1="-5459.0" y1="-23558.9" x2="-645.7" y2="-270.5" stroke="rgba(255,255,255,0.035)" stroke-width="1.3"/><line x1="-9492.5" y1="11909.5" x2="3372.7" y2="-209.2" stroke="rgba(255,255,255,0.035)" stroke-width="1.3"/><line x1="-38605.7" y1="-105883.3" x2="-602.2" y2="-273.7" stroke="rgba(255,255,255,0.035)" stroke-width="1.3"/><line x1="-6265.0" y1="7328.2" x2="3300.4" y2="-215.5" stroke="rgba(255,255,255,0.035)" stroke-width="1.3"/><line x1="20181.7" y1="40123.7" x2="-559.5" y2="-276.9" stroke="rgba(255,255,255,0.035)" stroke-width="1.3"/><line x1="-4771.5" y1="5208.4" x2="3230.5" y2="-221.5" stroke="rgba(255,255,255,0.035)" stroke-width="1.3"/><line x1="10655.2" y1="16463.2" x2="-517.6" y2="-280.0" stroke="rgba(255,255,255,0.035)" stroke-width="1.3"/><line x1="-3910.6" y1="3986.4" x2="3163.1" y2="-227.4" stroke="rgba(255,255,255,0.035)" stroke-width="1.3"/><line x1="8130.7" y1="10193.1" x2="-476.5" y2="-283.0" stroke="rgba(255,255,255,0.035)" stroke-width="1.3"/><line x1="-3350.6" y1="3191.5" x2="3097.9" y2="-233.0" stroke="rgba(255,255,255,0.035)" stroke-width="1.3"/><line x1="6963.0" y1="7293.1" x2="-436.2" y2="-286.0" stroke="rgba(255,255,255,0.035)" stroke-width="1.3"/><line x1="-2957.2" y1="2633.1" x2="3034.9" y2="-238.5" stroke="rgba(255,255,255,0.035)" stroke-width="1.3"/><line x1="6290.0" y1="5621.6" x2="-396.7" y2="-288.9" stroke="rgba(255,255,255,0.035)" stroke-width="1.3"/><line x1="-2665.7" y1="2219.3" x2="2974.0" y2="-243.8" stroke="rgba(255,255,255,0.035)" stroke-width="1.3"/><line x1="5852.3" y1="4534.4" x2="-357.9" y2="-291.8" stroke="rgba(255,255,255,0.035)" stroke-width="1.3"/><line x1="-2441.0" y1="1900.4" x2="2915.0" y2="-248.9" stroke="rgba(255,255,255,0.085)" stroke-width="1.8"/><line x1="5544.8" y1="3770.7" x2="-319.8" y2="-294.6" stroke="rgba(255,255,255,0.085)" stroke-width="1.8"/><line x1="-2262.6" y1="1647.1" x2="2857.9" y2="-253.8" stroke="rgba(255,255,255,0.035)" stroke-width="1.3"/><line x1="5317.0" y1="3204.9" x2="-282.4" y2="-297.4" stroke="rgba(255,255,255,0.035)" stroke-width="1.3"/><line x1="-2117.4" y1="1441.0" x2="2802.5" y2="-258.6" stroke="rgba(255,255,255,0.035)" stroke-width="1.3"/><line x1="5141.4" y1="2768.8" x2="-245.7" y2="-300.1" stroke="rgba(255,255,255,0.035)" stroke-width="1.3"/><line x1="-1997.0" y1="1270.1" x2="2748.8" y2="-263.2" stroke="rgba(255,255,255,0.035)" stroke-width="1.3"/><line x1="5001.9" y1="2422.4" x2="-209.6" y2="-302.8" stroke="rgba(255,255,255,0.035)" stroke-width="1.3"/><line x1="-1895.5" y1="1126.1" x2="2696.8" y2="-267.8" stroke="rgba(255,255,255,0.035)" stroke-width="1.3"/><line x1="4888.5" y1="2140.7" x2="-174.2" y2="-305.4" stroke="rgba(255,255,255,0.035)" stroke-width="1.3"/><line x1="-1808.8" y1="1003.0" x2="2646.3" y2="-272.1" stroke="rgba(255,255,255,0.035)" stroke-width="1.3"/><line x1="4794.4" y1="1907.0" x2="-139.4" y2="-308.0" stroke="rgba(255,255,255,0.035)" stroke-width="1.3"/><line x1="-1733.9" y1="896.7" x2="2597.3" y2="-276.4" stroke="rgba(255,255,255,0.035)" stroke-width="1.3"/><line x1="4715.1" y1="1710.1" x2="-105.2" y2="-310.5" stroke="rgba(255,255,255,0.035)" stroke-width="1.3"/><line x1="-1668.5" y1="803.9" x2="2549.6" y2="-280.5" stroke="rgba(255,255,255,0.035)" stroke-width="1.3"/><line x1="4647.4" y1="1541.8" x2="-71.6" y2="-313.0" stroke="rgba(255,255,255,0.035)" stroke-width="1.3"/><line x1="-1611.0" y1="722.2" x2="2503.4" y2="-284.5" stroke="rgba(255,255,255,0.035)" stroke-width="1.3"/><line x1="4588.8" y1="1396.5" x2="-38.6" y2="-315.4" stroke="rgba(255,255,255,0.035)" stroke-width="1.3"/><line x1="-1559.9" y1="649.7" x2="2458.4" y2="-288.4" stroke="rgba(255,255,255,0.035)" stroke-width="1.3"/><line x1="4537.7" y1="1269.6" x2="-6.1" y2="-317.8" stroke="rgba(255,255,255,0.035)" stroke-width="1.3"/><line x1="-1514.3" y1="585.0" x2="2414.7" y2="-292.2" stroke="rgba(255,255,255,0.085)" stroke-width="1.8"/><line x1="4492.8" y1="1157.9" x2="25.8" y2="-320.2" stroke="rgba(255,255,255,0.085)" stroke-width="1.8"/><line x1="-1473.3" y1="526.8" x2="2372.2" y2="-295.9" stroke="rgba(255,255,255,0.035)" stroke-width="1.3"/><line x1="4452.9" y1="1058.8" x2="57.2" y2="-322.5" stroke="rgba(255,255,255,0.035)" stroke-width="1.3"/><line x1="-1436.3" y1="474.3" x2="2330.8" y2="-299.4" stroke="rgba(255,255,255,0.035)" stroke-width="1.3"/><line x1="4417.2" y1="970.3" x2="88.1" y2="-324.8" stroke="rgba(255,255,255,0.035)" stroke-width="1.3"/><line x1="-1402.7" y1="426.5" x2="2290.5" y2="-302.9" stroke="rgba(255,255,255,0.035)" stroke-width="1.3"/><line x1="4385.2" y1="890.7" x2="118.5" y2="-327.0" stroke="rgba(255,255,255,0.035)" stroke-width="1.3"/><line x1="-1372.0" y1="383.0" x2="2251.3" y2="-306.3" stroke="rgba(255,255,255,0.035)" stroke-width="1.3"/><line x1="4356.3" y1="818.9" x2="148.3" y2="-329.2" stroke="rgba(255,255,255,0.035)" stroke-width="1.3"/><line x1="-1343.9" y1="343.2" x2="2213.0" y2="-309.6" stroke="rgba(255,255,255,0.035)" stroke-width="1.3"/><line x1="4330.0" y1="753.6" x2="177.7" y2="-331.4" stroke="rgba(255,255,255,0.035)" stroke-width="1.3"/><line x1="-1318.1" y1="306.5" x2="2175.8" y2="-312.9" stroke="rgba(255,255,255,0.035)" stroke-width="1.3"/><line x1="4306.1" y1="694.1" x2="206.6" y2="-333.5" stroke="rgba(255,255,255,0.035)" stroke-width="1.3"/><line x1="-1294.3" y1="272.8" x2="2139.5" y2="-316.0" stroke="rgba(255,255,255,0.035)" stroke-width="1.3"/><line x1="4284.1" y1="639.7" x2="235.1" y2="-335.7" stroke="rgba(255,255,255,0.035)" stroke-width="1.3"/><line x1="-1272.3" y1="241.5" x2="2104.1" y2="-319.1" stroke="rgba(255,255,255,0.035)" stroke-width="1.3"/><line x1="4264.0" y1="589.6" x2="263.1" y2="-337.7" stroke="rgba(255,255,255,0.035)" stroke-width="1.3"/><line x1="-1251.9" y1="212.5" x2="2069.6" y2="-322.1" stroke="rgba(255,255,255,0.035)" stroke-width="1.3"/><line x1="4245.4" y1="543.4" x2="290.7" y2="-339.8" stroke="rgba(255,255,255,0.035)" stroke-width="1.3"/><line x1="-1232.9" y1="185.5" x2="2035.9" y2="-325.0" stroke="rgba(255,255,255,0.085)" stroke-width="1.8"/><line x1="4228.2" y1="500.7" x2="317.8" y2="-341.8" stroke="rgba(255,255,255,0.085)" stroke-width="1.8"/><line x1="-1215.2" y1="160.4" x2="2003.0" y2="-327.8" stroke="rgba(255,255,255,0.035)" stroke-width="1.3"/><line x1="4212.2" y1="461.0" x2="344.5" y2="-343.7" stroke="rgba(255,255,255,0.035)" stroke-width="1.3"/><line x1="-1198.6" y1="136.8" x2="1970.9" y2="-330.6" stroke="rgba(255,255,255,0.035)" stroke-width="1.3"/><line x1="4197.3" y1="424.1" x2="370.8" y2="-345.7" stroke="rgba(255,255,255,0.035)" stroke-width="1.3"/><line x1="-1183.1" y1="114.8" x2="1939.5" y2="-333.3" stroke="rgba(255,255,255,0.035)" stroke-width="1.3"/><line x1="4183.5" y1="389.7" x2="396.7" y2="-347.6" stroke="rgba(255,255,255,0.035)" stroke-width="1.3"/><line x1="-1168.5" y1="94.1" x2="1908.9" y2="-336.0" stroke="rgba(255,255,255,0.035)" stroke-width="1.3"/><line x1="4170.5" y1="357.6" x2="422.3" y2="-349.5" stroke="rgba(255,255,255,0.035)" stroke-width="1.3"/><line x1="-1154.8" y1="74.6" x2="1879.0" y2="-338.6" stroke="rgba(255,255,255,0.035)" stroke-width="1.3"/><line x1="4158.4" y1="327.5" x2="447.4" y2="-351.4" stroke="rgba(255,255,255,0.035)" stroke-width="1.3"/><line x1="-1141.8" y1="56.3" x2="1849.7" y2="-341.1" stroke="rgba(255,255,255,0.035)" stroke-width="1.3"/><line x1="4147.0" y1="299.2" x2="472.2" y2="-353.2" stroke="rgba(255,255,255,0.035)" stroke-width="1.3"/><line x1="-1129.6" y1="39.0" x2="1821.1" y2="-343.6" stroke="rgba(255,255,255,0.035)" stroke-width="1.3"/><line x1="4136.3" y1="272.6" x2="496.6" y2="-355.0" stroke="rgba(255,255,255,0.035)" stroke-width="1.3"/><line x1="-1118.1" y1="22.6" x2="1793.2" y2="-346.0" stroke="rgba(255,255,255,0.035)" stroke-width="1.3"/><line x1="4126.2" y1="247.5" x2="520.6" y2="-356.8" stroke="rgba(255,255,255,0.035)" stroke-width="1.3"/><line x1="-1107.2" y1="7.1" x2="1765.8" y2="-348.3" stroke="rgba(255,255,255,0.035)" stroke-width="1.3"/><line x1="4116.7" y1="223.8" x2="544.3" y2="-358.5" stroke="rgba(255,255,255,0.035)" stroke-width="1.3"/><line x1="-1096.8" y1="-7.6" x2="1739.1" y2="-350.7" stroke="rgba(255,255,255,0.085)" stroke-width="1.8"/><line x1="4107.7" y1="201.4" x2="567.7" y2="-360.3" stroke="rgba(255,255,255,0.085)" stroke-width="1.8"/><line x1="-1087.0" y1="-21.6" x2="1712.9" y2="-352.9" stroke="rgba(255,255,255,0.035)" stroke-width="1.3"/><line x1="4099.1" y1="180.2" x2="590.7" y2="-362.0" stroke="rgba(255,255,255,0.035)" stroke-width="1.3"/><line x1="-1077.6" y1="-34.8" x2="1687.2" y2="-355.2" stroke="rgba(255,255,255,0.035)" stroke-width="1.3"/><line x1="4091.0" y1="160.1" x2="613.4" y2="-363.6" stroke="rgba(255,255,255,0.035)" stroke-width="1.3"/><line x1="-1068.7" y1="-47.5" x2="1662.1" y2="-357.3" stroke="rgba(255,255,255,0.035)" stroke-width="1.3"/><line x1="4083.3" y1="141.0" x2="635.8" y2="-365.3" stroke="rgba(255,255,255,0.035)" stroke-width="1.3"/><line x1="-1060.2" y1="-59.5" x2="1637.6" y2="-359.5" stroke="rgba(255,255,255,0.035)" stroke-width="1.3"/><line x1="4076.0" y1="122.9" x2="657.8" y2="-366.9" stroke="rgba(255,255,255,0.035)" stroke-width="1.3"/><line x1="-1052.1" y1="-71.0" x2="1613.5" y2="-361.5" stroke="rgba(255,255,255,0.035)" stroke-width="1.3"/><line x1="4069.1" y1="105.6" x2="679.6" y2="-368.5" stroke="rgba(255,255,255,0.035)" stroke-width="1.3"/><line x1="-1044.4" y1="-82.0" x2="1589.9" y2="-363.6" stroke="rgba(255,255,255,0.035)" stroke-width="1.3"/><line x1="4062.4" y1="89.1" x2="701.0" y2="-370.1" stroke="rgba(255,255,255,0.035)" stroke-width="1.3"/><line x1="-1037.0" y1="-92.5" x2="1566.8" y2="-365.6" stroke="rgba(255,255,255,0.035)" stroke-width="1.3"/><line x1="4056.1" y1="73.4" x2="722.2" y2="-371.7" stroke="rgba(255,255,255,0.035)" stroke-width="1.3"/><line x1="-1029.9" y1="-102.6" x2="1544.2" y2="-367.5" stroke="rgba(255,255,255,0.035)" stroke-width="1.3"/><line x1="4050.1" y1="58.4" x2="743.1" y2="-373.2" stroke="rgba(255,255,255,0.035)" stroke-width="1.3"/><line x1="-1023.1" y1="-112.2" x2="1522.0" y2="-369.5" stroke="rgba(255,255,255,0.035)" stroke-width="1.3"/><line x1="4044.3" y1="44.0" x2="763.7" y2="-374.7" stroke="rgba(255,255,255,0.035)" stroke-width="1.3"/><line x1="-1016.6" y1="-121.5" x2="1500.2" y2="-371.3" stroke="rgba(255,255,255,0.085)" stroke-width="1.8"/><line x1="4038.8" y1="30.3" x2="784.0" y2="-376.2" stroke="rgba(255,255,255,0.085)" stroke-width="1.8"/></svg>
<div style="position:absolute;left:82px;top:285px;width:134px;height:31px;background:#1c1c1c;border-radius:3px;"></div>
<div class="t" style="left:87.00px;top:279.72px;height:42px;line-height:42px;font-size:21px;color:#e8e8e8;font-weight:normal;transform:scaleX(1.1116);transform-origin:0 0;">Perspective</div>
<div style="position:absolute;left:868px;top:285px;width:207px;height:31px;background:#1c1c1c;border-radius:3px;"></div>
<div class="t" style="left:873.00px;top:279.72px;height:42px;line-height:42px;font-size:21px;color:#e8e8e8;font-weight:normal;transform:scaleX(1.0943);transform-origin:0 0;">Default Camera</div>
<svg style="position:absolute;left:1043px;top:292px;overflow:visible;" width="30" height="22" viewBox="0 0 30 22"><path d="M2 8H13V20H2Z M4 8V2H13V8" fill="none" stroke="#c8c8d8" stroke-width="2"/><path d="M15 11L22 7V20L15 16Z" fill="#c8c8d8"/></svg>
<div style="position:absolute;left:83px;top:650px;width:111px;height:29px;background:#1c1c1c;border-radius:3px;"></div>
<div class="t" style="left:87.00px;top:641.72px;height:42px;line-height:42px;font-size:21px;color:#e8e8e8;font-weight:normal;transform:scaleX(1.0667);transform-origin:0 0;">Rotate</div>
<svg style="position:absolute;left:163px;top:652px;overflow:visible;" width="28" height="26" viewBox="0 0 28 26"><path d="M15 23C20.5 22.5 24 18.5 24 13C24 9.5 22 6.5 19 5M12 3C6.5 3.5 3 7.5 3 13C3 16.5 5 19.5 8 21" fill="none" stroke="#c8c8c8" stroke-width="2.2"/><path d="M18 2V7H23M9 24V19H4" fill="none" stroke="#c8c8c8" stroke-width="2"/></svg>
<div style="position:absolute;left:1545px;top:1394px;width:316px;height:32px;background:#1f1f1f;border-radius:3px;"></div>
<div class="t" style="left:1550.00px;top:1388.72px;height:42px;line-height:42px;font-size:21px;color:#e8e8e8;font-weight:normal;transform:scaleX(1.1013);transform-origin:0 0;">Grid Spacing : 50 cm</div>
<svg style="position:absolute;left:1780px;top:290px;overflow:visible;" width="80" height="100" viewBox="0 0 80 100"><path d="M18.6 58V30M18.6 58L47 47.5M18.6 58L41 74" fill="none" stroke-width="2"/><path d="M18.6 58V30" stroke="#55c06a" stroke-width="2"/><path d="M18.6 58L47 47.5" stroke="#3a7be0" stroke-width="2"/><path d="M18.6 58L41 74" stroke="#d03a3a" stroke-width="2"/></svg>
<div class="t" style="left:1792.00px;top:284.42px;height:38px;line-height:38px;font-size:19px;color:#55c06a;font-weight:normal;transform:scaleX(1.1089);transform-origin:0 0;">Y</div>
<div class="t" style="left:1837.00px;top:312.42px;height:38px;line-height:38px;font-size:19px;color:#3a7be0;font-weight:normal;transform:scaleX(1.1183);transform-origin:0 0;">Z</div>
<div class="t" style="left:1827.00px;top:356.42px;height:38px;line-height:38px;font-size:19px;color:#d03a3a;font-weight:normal;transform:scaleX(1.1089);transform-origin:0 0;">X</div>
<svg style="left:78px;top:280px;overflow:hidden" width="1789" height="1151"><defs><linearGradient id="gtop" x1="0" y1="0" x2="1" y2="1"><stop offset="0" stop-color="#b2b2b2"/><stop offset="0.5" stop-color="#bababa"/><stop offset="1" stop-color="#b6b6b6"/></linearGradient><linearGradient id="gband" gradientUnits="userSpaceOnUse" x1="0" y1="0" x2="-12" y2="40"><stop offset="0" stop-color="#c0c0c0"/><stop offset="0.45" stop-color="#969696"/><stop offset="1" stop-color="#888"/></linearGradient><linearGradient id="gleft" x1="0" y1="0" x2="1" y2="1"><stop offset="0" stop-color="#a09e9e"/><stop offset="1" stop-color="#9a9999"/></linearGradient><linearGradient id="grband" x1="0" y1="0" x2="0" y2="1"><stop offset="0" stop-color="#7a7a7a"/><stop offset="0.35" stop-color="#5c5c5c"/><stop offset="1" stop-color="#565656"/></linearGradient></defs><polygon points="847.0,563.0 1344.0,370.0 1284.0,778.0 854.0,1012.0" fill="#525152"/><polygon points="854.0,1012.0 1284.0,778.0 1278.0,802.0 854.0,1042.0" fill="#484848"/><defs><linearGradient id="gedge" gradientUnits="userSpaceOnUse" x1="1092.0" y1="412.0" x2="1097.6" y2="427.0"><stop offset="0" stop-color="#bcbcbc"/><stop offset="0.45" stop-color="#8a8a8a"/><stop offset="1" stop-color="#5e5e5e"/></linearGradient><linearGradient id="gfront" gradientUnits="userSpaceOnUse" x1="838" y1="0" x2="855" y2="0"><stop offset="0" stop-color="#8c8c8c"/><stop offset="0.4" stop-color="#7c7c7c"/><stop offset="1" stop-color="#545454"/></linearGradient><linearGradient id="gedgeL" gradientUnits="userSpaceOnUse" x1="672.0" y1="395.0" x2="661.9" y2="409.9"><stop offset="0" stop-color="#bebebe"/><stop offset="0.5" stop-color="#a4a4a4"/><stop offset="1" stop-color="#8c8c8c"/></linearGradient></defs><polygon points="841.0,515.0 1346.0,325.0 1344.0,370.0 847.0,563.0" fill="#5b5b5b"/><polygon points="847.0,557.0 1344.0,365.0 1344.0,370.0 847.0,563.0" fill="#5f5f5f"/><polygon points="500.0,318.0 843.0,563.0 848.0,1011.0 553.0,717.0" fill="url(#gleft)"/><polygon points="553.0,717.0 848.0,1011.0 854.0,1042.0 555.0,741.0" fill="#717171"/><polygon points="498.0,277.0 841.0,513.0 843.0,563.0 500.0,318.0" fill="#8c8c8c"/><polygon points="839.0,520.0 853.0,526.0 859.0,1042.0 846.0,1042.0" fill="url(#gfront)"/><polygon points="498.0,277.0 955.0,154.0 1346.0,323.0 841.0,513.0" fill="url(#gtop)"/><polygon points="498.0,275.0 841.0,511.0 842.0,535.0 499.0,300.0" fill="url(#gedgeL)"/><polygon points="841.0,509.0 1346.0,319.0 1346.0,336.0 843.0,526.0" fill="url(#gedge)"/><polygon points="835.0,509.0 843.0,511.0 851.0,521.0 841.0,526.0" fill="#a8a8a8"/><polygon points="593.5,269.4 659.6,252.9 676.1,264.0 610.0,281.8" fill="#e4e4e4"/><polygon points="698.0,270.2 729.9,264.0 768.3,289.3 738.1,296.7" fill="#e4e4e4"/><polygon points="762.9,237.6 787.7,230.6 831.1,252.1 804.2,261.2" fill="#e4e4e4"/><polygon points="807.1,211.6 831.1,205.0 875.3,226.0 847.6,233.5" fill="#e4e4e4"/><polygon points="894.3,188.0 943.5,174.8 967.5,183.9 913.7,197.9" fill="#e4e4e4"/><polygon points="899.3,217.8 955.9,201.7 975.7,211.6 915.8,228.1" fill="#e4e4e4"/><polygon points="914.6,244.6 971.6,229.3 993.1,239.7 934.4,257.0" fill="#e4e4e4"/><polygon points="792.7,281.8 847.6,264.0 875.3,273.6 812.5,293.0" fill="#e4e4e4"/><polygon points="728.6,321.9 785.6,302.5 815.4,314.9 748.4,335.5" fill="#e4e4e4"/><polygon points="843.5,309.9 870.3,301.7 919.9,328.1 891.0,338.4" fill="#e4e4e4"/><polygon points="937.7,280.6 967.5,272.7 1014.1,297.5 986.0,306.6" fill="#e4e4e4"/><polygon points="1031.5,252.9 1083.2,237.2 1109.2,246.7 1054.2,264.5" fill="#e4e4e4"/><polygon points="1065.4,281.8 1093.5,274.8 1144.3,300.4 1116.2,308.7" fill="#e4e4e4"/><polygon points="1169.1,291.3 1193.9,284.3 1249.7,309.9 1223.7,319.0" fill="#e4e4e4"/><polygon points="955.1,341.7 1017.0,321.9 1043.1,334.3 977.8,356.2" fill="#e4e4e4"/><polygon points="1086.0,346.7 1147.2,325.2 1173.2,337.6 1110.0,359.1" fill="#e4e4e4"/><polygon points="838.5,356.2 868.3,346.7 919.9,376.0 888.9,386.4" fill="#e4e4e4"/><polygon points="767.0,379.8 798.0,369.4 848.9,401.7 818.7,412.0" fill="#e4e4e4"/><polygon points="842.7,430.6 912.9,406.2 940.6,421.1 868.3,447.1" fill="#e4e4e4"/><line x1="912.0" y1="0.0" x2="912.0" y2="296.0" stroke="#4fb86a" stroke-width="1.8"/><line x1="1342.0" y1="381.0" x2="1475.0" y2="327.0" stroke="#2f6fd8" stroke-width="1.8"/><line x1="1475.0" y1="327.0" x2="1444.0" y2="324.0" stroke="#2f6fd8" stroke-width="1.8"/><line x1="1475.0" y1="327.0" x2="1479.0" y2="340.0" stroke="#2f6fd8" stroke-width="1.8"/><line x1="1100.0" y1="687.0" x2="1733.0" y2="1124.0" stroke="#b83a3c" stroke-width="1.8"/><line x1="1733.0" y1="1124.0" x2="1672.0" y2="1118.0" stroke="#b83a3c" stroke-width="1.8"/><line x1="1733.0" y1="1124.0" x2="1719.0" y2="1079.0" stroke="#b83a3c" stroke-width="1.8"/><line x1="548.0" y1="701.0" x2="667.0" y2="653.0" stroke="#3c3c3c" stroke-width="2.2"/></svg>
<div style="position:absolute;left:1px;top:230px;width:71px;height:72px;background:#3a3a3a;border-radius:8px;"></div>
<svg style="position:absolute;left:12px;top:242px;overflow:visible;" width="50" height="50" viewBox="0 0 50 50"><circle cx="19" cy="19" r="14" fill="none" stroke="#bdbdbd" stroke-width="3.2"/><path d="M29 29L45 45" stroke="#bdbdbd" stroke-width="3.6"/></svg>
<div style="position:absolute;left:1px;top:323px;width:71px;height:142px;background:#3a3a3a;border-radius:8px;"></div>
<div style="position:absolute;left:5px;top:393px;width:63px;height:2px;background:#2e2e2e;"></div>
<svg style="position:absolute;left:10px;top:334px;overflow:visible;" width="52" height="50" viewBox="0 0 52 50"><circle cx="26" cy="24" r="22.5" fill="none" stroke="#e8a04a" stroke-width="4.2" stroke-dasharray="6.2 4.4" stroke-dashoffset="3"/><polygon points="20,12.5 37,26 28,26.5 20,35.5" fill="#bdbdbd"/></svg>
<svg style="position:absolute;left:59px;top:381px;overflow:visible;" width="11" height="11" viewBox="0 0 11 11"><polygon points="11,0 11,11 0,11" fill="#9a9a9a"/></svg>
<svg style="position:absolute;left:12px;top:405px;overflow:visible;" width="52" height="52" viewBox="0 0 52 52"><polygon points="24.00,12.95 27.72,13.30 27.72,18.70 24.00,19.05 22.14,22.26 23.70,25.66 19.02,28.36 16.85,25.32 13.15,25.32 10.98,28.36 6.30,25.66 7.86,22.26 6.00,19.05 2.28,18.70 2.28,13.30 6.00,12.95 7.86,9.74 6.30,6.34 10.98,3.64 13.15,6.68 16.85,6.68 19.02,3.64 23.70,6.34 22.14,9.74" fill="#bdbdbd"/><circle cx="15" cy="16" r="4.5" fill="#3a3a3a"/><polygon points="30,23.5 47,37.5 36,37.5 30,46" fill="#bdbdbd"/></svg>
<div style="position:absolute;left:1px;top:486px;width:71px;height:216px;background:#3a3a3a;border-radius:8px;"></div>
<div style="position:absolute;left:5px;top:557px;width:63px;height:2px;background:#2e2e2e;"></div>
<div style="position:absolute;left:5px;top:628px;width:63px;height:2px;background:#2e2e2e;"></div>
<div style="position:absolute;left:2px;top:558px;width:68px;height:70px;background:#525a96;"></div>
<svg style="position:absolute;left:11px;top:497px;overflow:visible;" width="50" height="50" viewBox="0 0 50 50"><path d="M25 3V47M3 25H47" stroke="#bdbdbd" stroke-width="3.4"/><path d="M17 11L25 3L33 11M17 39L25 47L33 39M11 17L3 25L11 33M39 17L47 25L39 33" fill="none" stroke="#bdbdbd" stroke-width="3.4"/></svg>
<svg style="position:absolute;left:11px;top:568px;overflow:visible;" width="50" height="50" viewBox="0 0 50 50"><path d="M27 43.5C38 42 45 34 45 24C45 15 39 8.5 31 5" fill="none" stroke="#bdbdbd" stroke-width="3.6"/><path d="M23 5C12 6 5 14 5 24C5 33 11 39.5 19 43" fill="none" stroke="#bdbdbd" stroke-width="3.6"/><path d="M30 5H41V17" fill="none" stroke="#bdbdbd" stroke-width="0"/><polygon points="31,2 42,2 42,14" fill="#bdbdbd"/><path d="M32 4V14" stroke="#bdbdbd" stroke-width="3.4"/><path d="M30 4H42" stroke="#bdbdbd" stroke-width="3.4"/><path d="M19 34V45H8" fill="none" stroke="#bdbdbd" stroke-width="3.4"/></svg>
<svg style="position:absolute;left:12px;top:642px;overflow:visible;" width="50" height="50" viewBox="0 0 50 50"><path d="M3.5 22V3.5H46.5V46.5H27" fill="none" stroke="#bdbdbd" stroke-width="3.4"/><path d="M18 15H34V31" fill="none" stroke="#bdbdbd" stroke-width="3.4"/><rect x="2" y="26" width="20" height="20" rx="5" fill="#bdbdbd"/></svg>
<div style="position:absolute;left:1px;top:710px;width:71px;height:143px;background:#3a3a3a;border-radius:8px;"></div>
<div style="position:absolute;left:5px;top:780px;width:63px;height:2px;background:#2e2e2e;"></div>
<svg style="position:absolute;left:10px;top:718px;overflow:visible;" width="54" height="56" viewBox="0 0 54 56"><polygon points="4,5 22,17 4,25" fill="#bdbdbd"/><g transform="translate(16,14) scale(0.72)"><path d="M25 3V47M3 25H47" stroke="#bdbdbd" stroke-width="3.4"/><path d="M17 11L25 3L33 11M17 39L25 47L33 39M11 17L3 25L11 33M39 17L47 25L39 33" fill="none" stroke="#bdbdbd" stroke-width="3.4"/></g></svg>
<svg style="position:absolute;left:10px;top:788px;overflow:visible;" width="54" height="60" viewBox="0 0 54 60"><polygon points="4,12 14,6 20,12 19,26 8,28 4,22" fill="#bdbdbd"/><polygon points="14,6 20,12 19,26 13,20" fill="#7a7a7a"/><polygon points="36,8 46,4 49,12 49,20 40,24 36,16" fill="#bdbdbd"/><polygon points="49,12 49,20 40,24 41,16" fill="#7a7a7a"/><polygon points="3,40 12,36 16,44 14,52 5,54 2,48" fill="#bdbdbd"/><polygon points="16,44 14,52 9,50 11,44" fill="#7a7a7a"/><g transform="translate(18,22) scale(0.72)"><path d="M25 3V47M3 25H47" stroke="#bdbdbd" stroke-width="3.4"/><path d="M17 11L25 3L33 11M17 39L25 47L33 39M11 17L3 25L11 33M39 17L47 25L39 33" fill="none" stroke="#bdbdbd" stroke-width="3.4"/></g></svg>
<div style="position:absolute;left:1px;top:874px;width:71px;height:215px;background:#3a3a3a;border-radius:8px;"></div>
<div style="position:absolute;left:5px;top:945px;width:63px;height:2px;background:#2e2e2e;"></div>
<div style="position:absolute;left:5px;top:1016px;width:63px;height:2px;background:#2e2e2e;"></div>
<svg style="position:absolute;left:10px;top:884px;overflow:visible;" width="54" height="54" viewBox="0 0 54 54"><g transform="translate(24,2) scale(1.0)"><path d="M10 2L24 8L20 22L6 26L4 20Z" fill="none" stroke="#bdbdbd" stroke-width="2.6"/><circle cx="14" cy="14" r="2.4" fill="#bdbdbd"/><path d="M4 24L14 14" stroke="#bdbdbd" stroke-width="2"/></g><path d="M11 30C16 40 36 40 41 30" fill="none" stroke="#bdbdbd" stroke-width="3"/><circle cx="6" cy="29" r="4" fill="#e8a04a"/><circle cx="46" cy="29" r="4" fill="#e8a04a"/></svg>
<svg style="position:absolute;left:59px;top:933px;overflow:visible;" width="11" height="11" viewBox="0 0 11 11"><polygon points="11,0 11,11 0,11" fill="#9a9a9a"/></svg>
<svg style="position:absolute;left:10px;top:956px;overflow:visible;" width="54" height="54" viewBox="0 0 54 54"><g transform="translate(24,4) scale(1.0)"><path d="M10 2L24 8L20 22L6 26L4 20Z" fill="none" stroke="#bdbdbd" stroke-width="2.6"/><circle cx="14" cy="14" r="2.4" fill="#bdbdbd"/><path d="M4 24L14 14" stroke="#bdbdbd" stroke-width="2"/></g><rect x="2" y="32" width="16" height="16" fill="#e8a04a"/></svg>
<svg style="position:absolute;left:10px;top:1026px;overflow:visible;" width="54" height="56" viewBox="0 0 54 56"><g transform="translate(20,4) scale(1.0)"><path d="M10 2L24 8L20 22L6 26L4 20Z" fill="none" stroke="#bdbdbd" stroke-width="2.6"/><circle cx="14" cy="14" r="2.4" fill="#bdbdbd"/><path d="M4 24L14 14" stroke="#bdbdbd" stroke-width="2"/></g><g fill="#e8a04a"><polygon points="2,8 9,4 16,8 16,16 9,20 2,16"/><polygon points="6,28 13,24 20,28 20,36 13,40 6,36"/><polygon points="30,28 37,24 44,28 44,36 37,40 30,36"/></g><g fill="#a86a2a"><polygon points="9,12 16,8 16,16 9,20"/><polygon points="13,32 20,28 20,36 13,40"/><polygon points="37,32 44,28 44,36 37,40"/></g></svg>
<div style="position:absolute;left:1px;top:1098px;width:71px;height:214px;background:#3a3a3a;border-radius:8px;"></div>
<div style="position:absolute;left:5px;top:1168px;width:63px;height:2px;background:#2e2e2e;"></div>
<div style="position:absolute;left:5px;top:1240px;width:63px;height:2px;background:#2e2e2e;"></div>
<svg style="position:absolute;left:10px;top:1108px;overflow:visible;" width="54" height="54" viewBox="0 0 54 54"><path d="M22 32L44 9" stroke="#bdbdbd" stroke-width="7" stroke-linecap="round"/><circle cx="17" cy="38" r="6" fill="none" stroke="#bdbdbd" stroke-width="3"/><path d="M9 44L14 42" stroke="#bdbdbd" stroke-width="3"/></svg>
<svg style="position:absolute;left:10px;top:1178px;overflow:visible;" width="54" height="54" viewBox="0 0 54 54"><g transform="translate(24,2) scale(1.0)"><path d="M10 2L24 8L20 22L6 26L4 20Z" fill="none" stroke="#bdbdbd" stroke-width="2.6"/><circle cx="14" cy="14" r="2.4" fill="#bdbdbd"/><path d="M4 24L14 14" stroke="#bdbdbd" stroke-width="2"/></g><path d="M3 42H8M14 42H38M44 42H50" stroke="#e8a04a" stroke-width="3.5"/></svg>
<svg style="position:absolute;left:59px;top:1228px;overflow:visible;" width="11" height="11" viewBox="0 0 11 11"><polygon points="11,0 11,11 0,11" fill="#9a9a9a"/></svg>
<svg style="position:absolute;left:10px;top:1250px;overflow:visible;" width="54" height="54" viewBox="0 0 54 54"><path d="M10 16C12 6 22 4 22 12C22 20 8 26 10 38C12 48 24 44 28 34C32 26 40 26 40 34C40 42 30 42 30 42" fill="none" stroke="#bdbdbd" stroke-width="5" stroke-linecap="round"/></svg>
<svg style="position:absolute;left:59px;top:1299px;overflow:visible;" width="11" height="11" viewBox="0 0 11 11"><polygon points="11,0 11,11 0,11" fill="#9a9a9a"/></svg>
<div style="position:absolute;left:1874px;top:230px;width:72px;height:71px;background:#3a3a3a;border-radius:8px;"></div>
<svg style="position:absolute;left:1886px;top:240px;overflow:visible;" width="50" height="50" viewBox="0 0 50 50"><path d="M9 8V39H42" fill="none" stroke="#c8d0f5" stroke-width="3.6"/><path d="M2 15L9 7L16 15M34 32L42 39L34 46" fill="none" stroke="#c8d0f5" stroke-width="3.6"/><circle cx="33" cy="14" r="9.5" fill="#c8d0f5"/></svg>
<div style="position:absolute;left:1874px;top:323px;width:72px;height:214px;background:#3a3a3a;border-radius:8px;"></div>
<div style="position:absolute;left:1878px;top:393px;width:64px;height:2px;background:#2e2e2e;"></div>
<div style="position:absolute;left:1878px;top:464px;width:64px;height:2px;background:#2e2e2e;"></div>
<svg style="position:absolute;left:1891px;top:340px;overflow:visible;" width="40" height="40" viewBox="0 0 40 40"><rect x="2" y="2" width="36" height="36" fill="none" stroke="#8fd0f2" stroke-width="3.4"/></svg>
<svg style="position:absolute;left:1932px;top:381px;overflow:visible;" width="11" height="11" viewBox="0 0 11 11"><polygon points="11,0 11,11 0,11" fill="#9a9a9a"/></svg>
<svg style="position:absolute;left:1888px;top:405px;overflow:visible;" width="44" height="50" viewBox="0 0 44 50"><polygon points="22,2 41,12 22,22 3,12" fill="#a8dcf6"/><polygon points="3,14 21,24 21,46 3,36" fill="#8fd0f2"/><polygon points="23,24 41,14 41,36 23,46" fill="#7cc2e8"/></svg>
<svg style="position:absolute;left:1932px;top:452px;overflow:visible;" width="11" height="11" viewBox="0 0 11 11"><polygon points="11,0 11,11 0,11" fill="#9a9a9a"/></svg>
<svg style="position:absolute;left:1888px;top:478px;overflow:visible;" width="44" height="46" viewBox="0 0 44 46"><path d="M3 4V13M41 4V13M3 4.5H41M22 4.5V42M12 42H32" fill="none" stroke="#8fd0f2" stroke-width="3.4"/></svg>
<svg style="position:absolute;left:1932px;top:524px;overflow:visible;" width="11" height="11" viewBox="0 0 11 11"><polygon points="11,0 11,11 0,11" fill="#9a9a9a"/></svg>
<div style="position:absolute;left:1874px;top:558px;width:72px;height:215px;background:#3a3a3a;border-radius:8px;"></div>
<div style="position:absolute;left:1878px;top:628px;width:64px;height:2px;background:#2e2e2e;"></div>
<div style="position:absolute;left:1878px;top:700px;width:64px;height:2px;background:#2e2e2e;"></div>
<svg style="position:absolute;left:1886px;top:570px;overflow:visible;" width="48" height="48" viewBox="0 0 48 48"><circle cx="24" cy="24" r="12" fill="#7ed67e"/><g fill="none" stroke="#7ed67e" stroke-width="2.4"><rect x="19.5" y="2" width="9" height="8"/><rect x="19.5" y="38" width="9" height="8"/><rect x="2" y="11" width="8" height="8"/><rect x="38" y="11" width="8" height="8"/><rect x="2" y="29" width="8" height="8"/><rect x="38" y="29" width="8" height="8"/></g><path d="M10 15L19 7M29 7L38 15M10 33L19 41M29 41L38 33M6 19V29M42 19V29" stroke="#7ed67e" stroke-width="2" stroke-dasharray="3 2"/></svg>
<svg style="position:absolute;left:1932px;top:616px;overflow:visible;" width="11" height="11" viewBox="0 0 11 11"><polygon points="11,0 11,11 0,11" fill="#9a9a9a"/></svg>
<svg style="position:absolute;left:1886px;top:641px;overflow:visible;" width="48" height="50" viewBox="0 0 48 50"><g fill="#7ed67e"><polygon points="24,2 33,7 33,18 24,23 15,18 15,7"/><polygon points="13,20 22,25 22,36 13,41 4,36 4,25"/><polygon points="35,20 44,25 44,36 35,41 26,36 26,25"/></g><g fill="#5aa85a"><polygon points="24,12 33,7 33,18 24,23"/><polygon points="13,30 22,25 22,36 13,41"/><polygon points="35,30 44,25 44,36 35,41"/></g></svg>
<svg style="position:absolute;left:1932px;top:688px;overflow:visible;" width="11" height="11" viewBox="0 0 11 11"><polygon points="11,0 11,11 0,11" fill="#9a9a9a"/></svg>
<svg style="position:absolute;left:1886px;top:712px;overflow:visible;" width="48" height="50" viewBox="0 0 48 50"><circle cx="24" cy="25" r="13" fill="#fff"/><circle cx="24" cy="25" r="6" fill="#7ed67e"/><circle cx="24.0" cy="43.0" r="6" fill="#7ed67e"/><circle cx="8.4" cy="34.0" r="6" fill="#7ed67e"/><circle cx="8.4" cy="16.0" r="6" fill="#7ed67e"/><circle cx="24.0" cy="7.0" r="6" fill="#7ed67e"/><circle cx="39.6" cy="16.0" r="6" fill="#7ed67e"/><circle cx="39.6" cy="34.0" r="6" fill="#7ed67e"/></svg>
<svg style="position:absolute;left:1932px;top:760px;overflow:visible;" width="11" height="11" viewBox="0 0 11 11"><polygon points="11,0 11,11 0,11" fill="#9a9a9a"/></svg>
<div style="position:absolute;left:1874px;top:782px;width:72px;height:142px;background:#3a3a3a;border-radius:8px;"></div>
<div style="position:absolute;left:1878px;top:852px;width:64px;height:2px;background:#2e2e2e;"></div>
<svg style="position:absolute;left:1888px;top:795px;overflow:visible;" width="46" height="46" viewBox="0 0 46 46"><path d="M7 10L24 3L40 18C42 28 38 36 32 42L22 38C26 30 24 22 16 16L4 18Z" fill="none" stroke="#a4a8f4" stroke-width="3.2" stroke-linejoin="round"/><path d="M22 13C28 20 30 28 27 36" fill="none" stroke="#a4a8f4" stroke-width="2.4"/></svg>
<svg style="position:absolute;left:1932px;top:840px;overflow:visible;" width="11" height="11" viewBox="0 0 11 11"><polygon points="11,0 11,11 0,11" fill="#9a9a9a"/></svg>
<svg style="position:absolute;left:1886px;top:864px;overflow:visible;" width="50" height="52" viewBox="0 0 50 52"><path d="M9 10V44H44" fill="none" stroke="#a4a8f4" stroke-width="3.4"/><path d="M2 17L9 9L16 17M36 37L44 44L36 51" fill="none" stroke="#a4a8f4" stroke-width="3.4"/><path d="M31 5L41 10V22L31 27L21 22V10Z M21 10L31 15L41 10 M31 15V27" fill="none" stroke="#a4a8f4" stroke-width="2.4"/></svg>
<svg style="position:absolute;left:1932px;top:911px;overflow:visible;" width="11" height="11" viewBox="0 0 11 11"><polygon points="11,0 11,11 0,11" fill="#9a9a9a"/></svg>
<div style="position:absolute;left:1874px;top:935px;width:72px;height:70px;background:#3a3a3a;border-radius:8px;"></div>
<svg style="position:absolute;left:1888px;top:946px;overflow:visible;" width="46" height="48" viewBox="0 0 46 48"><path d="M6 6L22 18V34L6 44Z M40 6L24 18V34L40 44Z" fill="none" stroke="#e4a4ec" stroke-width="3.2"/><path d="M4 32L42 18" stroke="#e4a4ec" stroke-width="2.6"/></svg>
<svg style="position:absolute;left:1932px;top:992px;overflow:visible;" width="11" height="11" viewBox="0 0 11 11"><polygon points="11,0 11,11 0,11" fill="#9a9a9a"/></svg>
<div style="position:absolute;left:1874px;top:1026px;width:72px;height:215px;background:#3a3a3a;border-radius:8px;"></div>
<div style="position:absolute;left:1878px;top:1096px;width:64px;height:2px;background:#2e2e2e;"></div>
<div style="position:absolute;left:1878px;top:1168px;width:64px;height:2px;background:#2e2e2e;"></div>
<svg style="position:absolute;left:1886px;top:1037px;overflow:visible;" width="48" height="48" viewBox="0 0 48 48"><polygon points="24.0,6.0 29.5,10.6 36.7,11.3 37.4,18.5 42.0,24.0 37.4,29.5 36.7,36.7 29.5,37.4 24.0,42.0 18.5,37.4 11.3,36.7 10.6,29.5 6.0,24.0 10.6,18.5 11.3,11.3 18.5,10.6" fill="#c8d0f5"/><circle cx="24" cy="24" r="12.5" fill="#3a3a3a"/><circle cx="30" cy="19" r="10" fill="#c8d0f5"/></svg>
<svg style="position:absolute;left:1932px;top:1084px;overflow:visible;" width="11" height="11" viewBox="0 0 11 11"><polygon points="11,0 11,11 0,11" fill="#9a9a9a"/></svg>
<svg style="position:absolute;left:1888px;top:1113px;overflow:visible;" width="48" height="42" viewBox="0 0 48 42"><path d="M6 4H20V17" fill="none" stroke="#c8d0f5" stroke-width="3.2"/><rect x="2" y="17" width="28" height="20" rx="3" fill="none" stroke="#c8d0f5" stroke-width="3.2"/><polygon points="34,27 44,18 44,36" fill="#c8d0f5"/></svg>
<svg style="position:absolute;left:1932px;top:1156px;overflow:visible;" width="11" height="11" viewBox="0 0 11 11"><polygon points="11,0 11,11 0,11" fill="#9a9a9a"/></svg>
<svg style="position:absolute;left:1888px;top:1180px;overflow:visible;" width="46" height="52" viewBox="0 0 46 52"><path d="M4 4H42L36 30H10Z" fill="none" stroke="#c8d0f5" stroke-width="3"/><path d="M23 14V46M15 38L23 46L31 38" fill="none" stroke="#c8d0f5" stroke-width="3"/></svg>
<svg style="position:absolute;left:1932px;top:1228px;overflow:visible;" width="11" height="11" viewBox="0 0 11 11"><polygon points="11,0 11,11 0,11" fill="#9a9a9a"/></svg>
<div style="position:absolute;left:1874px;top:1282px;width:72px;height:71px;background:#3a3a3a;border-radius:8px;"></div>
<svg style="position:absolute;left:1888px;top:1292px;overflow:visible;" width="46" height="50" viewBox="0 0 46 50"><polygon points="23,3 41,13.5 41,35.5 23,46 5,35.5 5,13.5" fill="none" stroke="#4e4e4e" stroke-width="3"/><path d="M19 33L37 15M34 10L42 18" stroke="#5a5a5a" stroke-width="5"/></svg>
<svg style="position:absolute;left:1932px;top:1340px;overflow:visible;" width="11" height="11" viewBox="0 0 11 11"><polygon points="11,0 11,11 0,11" fill="#8a8a8a"/></svg>
<div style="position:absolute;left:1946px;top:162px;width:4px;height:1440px;background:#1c1c1c;"></div>
<div style="position:absolute;left:1950px;top:175px;width:930px;height:42px;background:#1c1c1c;"></div>
<div style="position:absolute;left:1950px;top:176px;width:128px;height:42px;background:#2a2a2a;border-radius:4px 4px 0 0;"></div>
<div class="t" style="left:1973.00px;top:172.03px;height:46px;line-height:46px;font-size:23px;color:#e8e8e8;font-weight:normal;transform:scaleX(1.0256);transform-origin:0 0;">Objects</div>
<div class="t" style="left:2105.00px;top:172.03px;height:46px;line-height:46px;font-size:23px;color:#a0a0a0;font-weight:normal;transform:scaleX(0.9647);transform-origin:0 0;">Takes</div>
<div style="position:absolute;left:1950px;top:217px;width:930px;height:46px;background:#282828;"></div>
<div style="position:absolute;left:1950px;top:262px;width:930px;height:4px;background:#1c1c1c;"></div>
<div style="position:absolute;left:1962px;top:230px;width:28px;height:4px;background:#8f8f8f;"></div>
<div style="position:absolute;left:1962px;top:238px;width:28px;height:4px;background:#8f8f8f;"></div>
<div style="position:absolute;left:1962px;top:246px;width:28px;height:4px;background:#8f8f8f;"></div>
<div class="t" style="left:2010.00px;top:215.38px;height:44px;line-height:44px;font-size:22px;color:#b4b4b4;font-weight:normal;transform:scaleX(1.0141);transform-origin:0 0;">File</div>
<div class="t" style="left:2076.00px;top:215.38px;height:44px;line-height:44px;font-size:22px;color:#b4b4b4;font-weight:normal;transform:scaleX(1.0561);transform-origin:0 0;">Edit</div>
<div class="t" style="left:2146.00px;top:215.38px;height:44px;line-height:44px;font-size:22px;color:#b4b4b4;font-weight:normal;transform:scaleX(1.0554);transform-origin:0 0;">View</div>
<div class="t" style="left:2226.00px;top:215.38px;height:44px;line-height:44px;font-size:22px;color:#b4b4b4;font-weight:normal;transform:scaleX(1.0845);transform-origin:0 0;">Object</div>
<div class="t" style="left:2325.00px;top:215.38px;height:44px;line-height:44px;font-size:22px;color:#b4b4b4;font-weight:normal;transform:scaleX(1.0108);transform-origin:0 0;">Tags</div>
<div class="t" style="left:2402.00px;top:215.38px;height:44px;line-height:44px;font-size:22px;color:#b4b4b4;font-weight:normal;transform:scaleX(1.0545);transform-origin:0 0;">Bookmarks</div>
<svg style="position:absolute;left:2724px;top:226px;overflow:visible;" width="30" height="30" viewBox="0 0 30 30"><circle cx="11.5" cy="11.5" r="9" fill="none" stroke="#9a9a9a" stroke-width="2.6"/><path d="M18 18L27 27" stroke="#9a9a9a" stroke-width="3"/></svg>
<svg style="position:absolute;left:2765px;top:225px;overflow:visible;" width="28" height="30" viewBox="0 0 28 30"><path d="M2.5 28V11.5L13.5 2.5L24.5 11.5V28H17.5V17.5H9.5V28Z" fill="none" stroke="#9a9a9a" stroke-width="2.6"/></svg>
<svg style="position:absolute;left:2803px;top:228px;overflow:visible;" width="30" height="30" viewBox="0 0 30 30"><path d="M1 5H29M6 13H24M11 21H19" stroke="#9a9a9a" stroke-width="3"/></svg>
<svg style="position:absolute;left:2843px;top:225px;overflow:visible;" width="30" height="30" viewBox="0 0 30 30"><path d="M14 3H3V27H27V16" fill="none" stroke="#9a9a9a" stroke-width="2.6"/><path d="M11 19L27 3M17 3H27V13" fill="none" stroke="#9a9a9a" stroke-width="2.6"/></svg>
<div style="position:absolute;left:1950px;top:266px;width:930px;height:541px;overflow:hidden;">
<div style="position:absolute;left:0;top:0px;width:900px;height:40px;background:#222222;"></div>
<div style="position:absolute;left:0;top:40px;width:900px;height:40px;background:#2a2a2a;"></div>
<div style="position:absolute;left:0;top:80px;width:900px;height:40px;background:#222222;"></div>
<div style="position:absolute;left:0;top:120px;width:900px;height:40px;background:#2a2a2a;"></div>
<div style="position:absolute;left:0;top:160px;width:900px;height:40px;background:#222222;"></div>
<div style="position:absolute;left:0;top:200px;width:900px;height:40px;background:#2a2a2a;"></div>
<div style="position:absolute;left:0;top:240px;width:900px;height:40px;background:#222222;"></div>
<div style="position:absolute;left:0;top:280px;width:900px;height:40px;background:#2a2a2a;"></div>
<div style="position:absolute;left:0;top:320px;width:900px;height:40px;background:#222222;"></div>
<div style="position:absolute;left:0;top:360px;width:900px;height:40px;background:#2a2a2a;"></div>
<div style="position:absolute;left:0;top:400px;width:900px;height:40px;background:#222222;"></div>
<div style="position:absolute;left:0;top:440px;width:900px;height:40px;background:#2a2a2a;"></div>
<div style="position:absolute;left:0;top:480px;width:900px;height:40px;background:#222222;"></div>
<div style="position:absolute;left:0;top:520px;width:900px;height:40px;background:#2a2a2a;"></div>
<div style="position:absolute;left:270px;top:0;width:3px;height:541px;background:#1e1e1e;"></div>
<div style="position:absolute;left:16px;top:0;width:2px;height:541px;background:#555;"></div>
<div style="position:absolute;left:908px;top:1px;width:9px;height:306px;border-radius:4px;background:#454545;"></div>
</div>
<div style="position:absolute;left:1968px;top:286px;width:16px;height:2px;background:#555;"></div>
<svg style="position:absolute;left:1985px;top:275px;overflow:visible;" width="30" height="22" viewBox="0 0 30 22"><polygon points="14,1 28,9.5 14,18 0,9.5" fill="#8fd8f8"/><path d="M7 5.25L21 13.75M21 5.25L7 13.75" stroke="#222" stroke-width="2"/></svg>
<div class="t" style="left:2023.00px;top:263.38px;height:44px;line-height:44px;font-size:22px;color:#c4c4c4;font-weight:normal;">Plane.22</div>
<div style="position:absolute;left:2134px;top:276px;width:20px;height:20px;background:#5a5a5a;border-radius:4px;"></div>
<svg style="position:absolute;left:2134px;top:276px;overflow:visible;" width="20" height="20" viewBox="0 0 20 20"><path d="M4.5 15.5L15.5 4.5" stroke="#262626" stroke-width="3.5"/></svg>
<div style="position:absolute;left:2166px;top:272px;width:12px;height:12px;border-radius:50%;background:#555;"></div>
<div style="position:absolute;left:2166px;top:290px;width:12px;height:12px;border-radius:50%;background:#555;"></div>
<svg style="position:absolute;left:2186px;top:276px;overflow:visible;" width="26" height="20" viewBox="0 0 26 20"><path d="M2 10L8.5 17L23.5 2.5" fill="none" stroke="#7ddc7d" stroke-width="3.6"/></svg>
<svg style="position:absolute;left:2228px;top:271px;overflow:visible;" width="28" height="28" viewBox="0 0 28 28"><path d="M2 2V26M1 2H27M2 16C10 15 17 10 19 2" fill="none" stroke="#8c8cf5" stroke-width="2.6"/></svg>
<div style="position:absolute;left:1968px;top:326px;width:16px;height:2px;background:#555;"></div>
<svg style="position:absolute;left:1985px;top:315px;overflow:visible;" width="30" height="22" viewBox="0 0 30 22"><polygon points="14,1 28,9.5 14,18 0,9.5" fill="#8fd8f8"/><path d="M7 5.25L21 13.75M21 5.25L7 13.75" stroke="#2a2a2a" stroke-width="2"/></svg>
<div class="t" style="left:2023.00px;top:303.38px;height:44px;line-height:44px;font-size:22px;color:#c4c4c4;font-weight:normal;">Plane.21</div>
<div style="position:absolute;left:2134px;top:316px;width:20px;height:20px;background:#5a5a5a;border-radius:4px;"></div>
<svg style="position:absolute;left:2134px;top:316px;overflow:visible;" width="20" height="20" viewBox="0 0 20 20"><path d="M4.5 15.5L15.5 4.5" stroke="#262626" stroke-width="3.5"/></svg>
<div style="position:absolute;left:2166px;top:312px;width:12px;height:12px;border-radius:50%;background:#555;"></div>
<div style="position:absolute;left:2166px;top:330px;width:12px;height:12px;border-radius:50%;background:#555;"></div>
<svg style="position:absolute;left:2186px;top:316px;overflow:visible;" width="26" height="20" viewBox="0 0 26 20"><path d="M2 10L8.5 17L23.5 2.5" fill="none" stroke="#7ddc7d" stroke-width="3.6"/></svg>
<svg style="position:absolute;left:2228px;top:311px;overflow:visible;" width="28" height="28" viewBox="0 0 28 28"><path d="M2 2V26M1 2H27M2 16C10 15 17 10 19 2" fill="none" stroke="#8c8cf5" stroke-width="2.6"/></svg>
<div style="position:absolute;left:1968px;top:366px;width:16px;height:2px;background:#555;"></div>
<svg style="position:absolute;left:1985px;top:355px;overflow:visible;" width="30" height="22" viewBox="0 0 30 22"><polygon points="14,1 28,9.5 14,18 0,9.5" fill="#8fd8f8"/><path d="M7 5.25L21 13.75M21 5.25L7 13.75" stroke="#222" stroke-width="2"/></svg>
<div class="t" style="left:2023.00px;top:343.38px;height:44px;line-height:44px;font-size:22px;color:#c4c4c4;font-weight:normal;">Plane.20</div>
<div style="position:absolute;left:2134px;top:356px;width:20px;height:20px;background:#5a5a5a;border-radius:4px;"></div>
<svg style="position:absolute;left:2134px;top:356px;overflow:visible;" width="20" height="20" viewBox="0 0 20 20"><path d="M4.5 15.5L15.5 4.5" stroke="#262626" stroke-width="3.5"/></svg>
<div style="position:absolute;left:2166px;top:352px;width:12px;height:12px;border-radius:50%;background:#555;"></div>
<div style="position:absolute;left:2166px;top:370px;width:12px;height:12px;border-radius:50%;background:#555;"></div>
<svg style="position:absolute;left:2186px;top:356px;overflow:visible;" width="26" height="20" viewBox="0 0 26 20"><path d="M2 10L8.5 17L23.5 2.5" fill="none" stroke="#7ddc7d" stroke-width="3.6"/></svg>
<svg style="position:absolute;left:2228px;top:351px;overflow:visible;" width="28" height="28" viewBox="0 0 28 28"><path d="M2 2V26M1 2H27M2 16C10 15 17 10 19 2" fill="none" stroke="#8c8cf5" stroke-width="2.6"/></svg>
<div style="position:absolute;left:1968px;top:406px;width:16px;height:2px;background:#555;"></div>
<svg style="position:absolute;left:1985px;top:395px;overflow:visible;" width="30" height="22" viewBox="0 0 30 22"><polygon points="14,1 28,9.5 14,18 0,9.5" fill="#8fd8f8"/><path d="M7 5.25L21 13.75M21 5.25L7 13.75" stroke="#2a2a2a" stroke-width="2"/></svg>
<div class="t" style="left:2023.00px;top:383.38px;height:44px;line-height:44px;font-size:22px;color:#c4c4c4;font-weight:normal;">Plane.19</div>
<div style="position:absolute;left:2134px;top:396px;width:20px;height:20px;background:#5a5a5a;border-radius:4px;"></div>
<svg style="position:absolute;left:2134px;top:396px;overflow:visible;" width="20" height="20" viewBox="0 0 20 20"><path d="M4.5 15.5L15.5 4.5" stroke="#262626" stroke-width="3.5"/></svg>
<div style="position:absolute;left:2166px;top:392px;width:12px;height:12px;border-radius:50%;background:#555;"></div>
<div style="position:absolute;left:2166px;top:410px;width:12px;height:12px;border-radius:50%;background:#555;"></div>
<svg style="position:absolute;left:2186px;top:396px;overflow:visible;" width="26" height="20" viewBox="0 0 26 20"><path d="M2 10L8.5 17L23.5 2.5" fill="none" stroke="#7ddc7d" stroke-width="3.6"/></svg>
<svg style="position:absolute;left:2228px;top:391px;overflow:visible;" width="28" height="28" viewBox="0 0 28 28"><path d="M2 2V26M1 2H27M2 16C10 15 17 10 19 2" fill="none" stroke="#8c8cf5" stroke-width="2.6"/></svg>
<div style="position:absolute;left:1968px;top:446px;width:16px;height:2px;background:#555;"></div>
<svg style="position:absolute;left:1985px;top:432px;overflow:visible;" width="30" height="30" viewBox="0 0 30 30"><polygon points="14,10 21.5,23 6.5,23" fill="#8fd8f8"/><circle cx="14" cy="5" r="3" fill="#8fd8f8"/><circle cx="4.5" cy="26" r="3" fill="#8fd8f8"/><circle cx="23.5" cy="26" r="3" fill="#8fd8f8"/></svg>
<div class="t" style="left:2023.00px;top:423.38px;height:44px;line-height:44px;font-size:22px;color:#c4c4c4;font-weight:normal;">Plane.18</div>
<div style="position:absolute;left:2134px;top:436px;width:20px;height:20px;background:#5a5a5a;border-radius:4px;"></div>
<svg style="position:absolute;left:2134px;top:436px;overflow:visible;" width="20" height="20" viewBox="0 0 20 20"><path d="M4.5 15.5L15.5 4.5" stroke="#262626" stroke-width="3.5"/></svg>
<div style="position:absolute;left:2166px;top:432px;width:12px;height:12px;border-radius:50%;background:#555;"></div>
<div style="position:absolute;left:2166px;top:450px;width:12px;height:12px;border-radius:50%;background:#555;"></div>
<svg style="position:absolute;left:2228px;top:431px;overflow:visible;" width="28" height="28" viewBox="0 0 28 28"><path d="M2 2V26M1 2H27M2 16C10 15 17 10 19 2" fill="none" stroke="#8c8cf5" stroke-width="2.6"/></svg>
<svg style="position:absolute;left:2270px;top:432px;overflow:visible;" width="25" height="25" viewBox="0 0 25 25"><rect x="0" y="0" width="24" height="24" fill="#bcbcbc"/><rect x="2.5" y="2.5" width="9.5" height="9.5" fill="#222"/><rect x="12" y="12" width="9.5" height="9.5" fill="#222"/></svg>
<div style="position:absolute;left:1968px;top:486px;width:16px;height:2px;background:#555;"></div>
<svg style="position:absolute;left:1985px;top:472px;overflow:visible;" width="30" height="30" viewBox="0 0 30 30"><polygon points="14,10 21.5,23 6.5,23" fill="#8fd8f8"/><circle cx="14" cy="5" r="3" fill="#8fd8f8"/><circle cx="4.5" cy="26" r="3" fill="#8fd8f8"/><circle cx="23.5" cy="26" r="3" fill="#8fd8f8"/></svg>
<div class="t" style="left:2023.00px;top:463.38px;height:44px;line-height:44px;font-size:22px;color:#c4c4c4;font-weight:normal;">Plane.17</div>
<div style="position:absolute;left:2134px;top:476px;width:20px;height:20px;background:#5a5a5a;border-radius:4px;"></div>
<svg style="position:absolute;left:2134px;top:476px;overflow:visible;" width="20" height="20" viewBox="0 0 20 20"><path d="M4.5 15.5L15.5 4.5" stroke="#262626" stroke-width="3.5"/></svg>
<div style="position:absolute;left:2166px;top:472px;width:12px;height:12px;border-radius:50%;background:#555;"></div>
<div style="position:absolute;left:2166px;top:490px;width:12px;height:12px;border-radius:50%;background:#555;"></div>
<svg style="position:absolute;left:2228px;top:471px;overflow:visible;" width="28" height="28" viewBox="0 0 28 28"><path d="M2 2V26M1 2H27M2 16C10 15 17 10 19 2" fill="none" stroke="#8c8cf5" stroke-width="2.6"/></svg>
<svg style="position:absolute;left:2270px;top:472px;overflow:visible;" width="25" height="25" viewBox="0 0 25 25"><rect x="0" y="0" width="24" height="24" fill="#bcbcbc"/><rect x="2.5" y="2.5" width="9.5" height="9.5" fill="#222"/><rect x="12" y="12" width="9.5" height="9.5" fill="#222"/></svg>
<div style="position:absolute;left:1968px;top:526px;width:16px;height:2px;background:#555;"></div>
<svg style="position:absolute;left:1985px;top:512px;overflow:visible;" width="30" height="30" viewBox="0 0 30 30"><polygon points="14,10 21.5,23 6.5,23" fill="#8fd8f8"/><circle cx="14" cy="5" r="3" fill="#8fd8f8"/><circle cx="4.5" cy="26" r="3" fill="#8fd8f8"/><circle cx="23.5" cy="26" r="3" fill="#8fd8f8"/></svg>
<div class="t" style="left:2023.00px;top:503.38px;height:44px;line-height:44px;font-size:22px;color:#c4c4c4;font-weight:normal;">Plane.16</div>
<div style="position:absolute;left:2134px;top:516px;width:20px;height:20px;background:#5a5a5a;border-radius:4px;"></div>
<svg style="position:absolute;left:2134px;top:516px;overflow:visible;" width="20" height="20" viewBox="0 0 20 20"><path d="M4.5 15.5L15.5 4.5" stroke="#262626" stroke-width="3.5"/></svg>
<div style="position:absolute;left:2166px;top:512px;width:12px;height:12px;border-radius:50%;background:#555;"></div>
<div style="position:absolute;left:2166px;top:530px;width:12px;height:12px;border-radius:50%;background:#555;"></div>
<svg style="position:absolute;left:2228px;top:511px;overflow:visible;" width="28" height="28" viewBox="0 0 28 28"><path d="M2 2V26M1 2H27M2 16C10 15 17 10 19 2" fill="none" stroke="#8c8cf5" stroke-width="2.6"/></svg>
<svg style="position:absolute;left:2270px;top:512px;overflow:visible;" width="25" height="25" viewBox="0 0 25 25"><rect x="0" y="0" width="24" height="24" fill="#bcbcbc"/><rect x="2.5" y="2.5" width="9.5" height="9.5" fill="#222"/><rect x="12" y="12" width="9.5" height="9.5" fill="#222"/></svg>
<div style="position:absolute;left:1968px;top:566px;width:16px;height:2px;background:#555;"></div>
<svg style="position:absolute;left:1985px;top:555px;overflow:visible;" width="30" height="22" viewBox="0 0 30 22"><polygon points="14,1 28,9.5 14,18 0,9.5" fill="#8fd8f8"/><path d="M7 5.25L21 13.75M21 5.25L7 13.75" stroke="#2a2a2a" stroke-width="2"/></svg>
<div class="t" style="left:2023.00px;top:543.38px;height:44px;line-height:44px;font-size:22px;color:#c4c4c4;font-weight:normal;">Plane.15</div>
<div style="position:absolute;left:2134px;top:556px;width:20px;height:20px;background:#5a5a5a;border-radius:4px;"></div>
<svg style="position:absolute;left:2134px;top:556px;overflow:visible;" width="20" height="20" viewBox="0 0 20 20"><path d="M4.5 15.5L15.5 4.5" stroke="#262626" stroke-width="3.5"/></svg>
<div style="position:absolute;left:2166px;top:552px;width:12px;height:12px;border-radius:50%;background:#555;"></div>
<div style="position:absolute;left:2166px;top:570px;width:12px;height:12px;border-radius:50%;background:#555;"></div>
<svg style="position:absolute;left:2186px;top:556px;overflow:visible;" width="26" height="20" viewBox="0 0 26 20"><path d="M2 10L8.5 17L23.5 2.5" fill="none" stroke="#7ddc7d" stroke-width="3.6"/></svg>
<svg style="position:absolute;left:2228px;top:551px;overflow:visible;" width="28" height="28" viewBox="0 0 28 28"><path d="M2 2V26M1 2H27M2 16C10 15 17 10 19 2" fill="none" stroke="#8c8cf5" stroke-width="2.6"/></svg>
<div style="position:absolute;left:1968px;top:606px;width:16px;height:2px;background:#555;"></div>
<svg style="position:absolute;left:1985px;top:595px;overflow:visible;" width="30" height="22" viewBox="0 0 30 22"><polygon points="14,1 28,9.5 14,18 0,9.5" fill="#8fd8f8"/><path d="M7 5.25L21 13.75M21 5.25L7 13.75" stroke="#222" stroke-width="2"/></svg>
<div class="t" style="left:2023.00px;top:583.38px;height:44px;line-height:44px;font-size:22px;color:#c4c4c4;font-weight:normal;">Plane.14</div>
<div style="position:absolute;left:2134px;top:596px;width:20px;height:20px;background:#5a5a5a;border-radius:4px;"></div>
<svg style="position:absolute;left:2134px;top:596px;overflow:visible;" width="20" height="20" viewBox="0 0 20 20"><path d="M4.5 15.5L15.5 4.5" stroke="#262626" stroke-width="3.5"/></svg>
<div style="position:absolute;left:2166px;top:592px;width:12px;height:12px;border-radius:50%;background:#555;"></div>
<div style="position:absolute;left:2166px;top:610px;width:12px;height:12px;border-radius:50%;background:#555;"></div>
<svg style="position:absolute;left:2186px;top:596px;overflow:visible;" width="26" height="20" viewBox="0 0 26 20"><path d="M2 10L8.5 17L23.5 2.5" fill="none" stroke="#7ddc7d" stroke-width="3.6"/></svg>
<svg style="position:absolute;left:2228px;top:591px;overflow:visible;" width="28" height="28" viewBox="0 0 28 28"><path d="M2 2V26M1 2H27M2 16C10 15 17 10 19 2" fill="none" stroke="#8c8cf5" stroke-width="2.6"/></svg>
<div style="position:absolute;left:1968px;top:646px;width:16px;height:2px;background:#555;"></div>
<svg style="position:absolute;left:1985px;top:635px;overflow:visible;" width="30" height="22" viewBox="0 0 30 22"><polygon points="14,1 28,9.5 14,18 0,9.5" fill="#8fd8f8"/><path d="M7 5.25L21 13.75M21 5.25L7 13.75" stroke="#2a2a2a" stroke-width="2"/></svg>
<div class="t" style="left:2023.00px;top:623.38px;height:44px;line-height:44px;font-size:22px;color:#c4c4c4;font-weight:normal;">Plane.13</div>
<div style="position:absolute;left:2134px;top:636px;width:20px;height:20px;background:#5a5a5a;border-radius:4px;"></div>
<svg style="position:absolute;left:2134px;top:636px;overflow:visible;" width="20" height="20" viewBox="0 0 20 20"><path d="M4.5 15.5L15.5 4.5" stroke="#262626" stroke-width="3.5"/></svg>
<div style="position:absolute;left:2166px;top:632px;width:12px;height:12px;border-radius:50%;background:#555;"></div>
<div style="position:absolute;left:2166px;top:650px;width:12px;height:12px;border-radius:50%;background:#555;"></div>
<svg style="position:absolute;left:2186px;top:636px;overflow:visible;" width="26" height="20" viewBox="0 0 26 20"><path d="M2 10L8.5 17L23.5 2.5" fill="none" stroke="#7ddc7d" stroke-width="3.6"/></svg>
<svg style="position:absolute;left:2228px;top:631px;overflow:visible;" width="28" height="28" viewBox="0 0 28 28"><path d="M2 2V26M1 2H27M2 16C10 15 17 10 19 2" fill="none" stroke="#8c8cf5" stroke-width="2.6"/></svg>
<div style="position:absolute;left:1968px;top:686px;width:16px;height:2px;background:#555;"></div>
<svg style="position:absolute;left:1985px;top:675px;overflow:visible;" width="30" height="22" viewBox="0 0 30 22"><polygon points="14,1 28,9.5 14,18 0,9.5" fill="#8fd8f8"/><path d="M7 5.25L21 13.75M21 5.25L7 13.75" stroke="#222" stroke-width="2"/></svg>
<div class="t" style="left:2023.00px;top:663.38px;height:44px;line-height:44px;font-size:22px;color:#c4c4c4;font-weight:normal;">Plane.12</div>
<div style="position:absolute;left:2134px;top:676px;width:20px;height:20px;background:#5a5a5a;border-radius:4px;"></div>
<svg style="position:absolute;left:2134px;top:676px;overflow:visible;" width="20" height="20" viewBox="0 0 20 20"><path d="M4.5 15.5L15.5 4.5" stroke="#262626" stroke-width="3.5"/></svg>
<div style="position:absolute;left:2166px;top:672px;width:12px;height:12px;border-radius:50%;background:#555;"></div>
<div style="position:absolute;left:2166px;top:690px;width:12px;height:12px;border-radius:50%;background:#555;"></div>
<svg style="position:absolute;left:2186px;top:676px;overflow:visible;" width="26" height="20" viewBox="0 0 26 20"><path d="M2 10L8.5 17L23.5 2.5" fill="none" stroke="#7ddc7d" stroke-width="3.6"/></svg>
<svg style="position:absolute;left:2228px;top:671px;overflow:visible;" width="28" height="28" viewBox="0 0 28 28"><path d="M2 2V26M1 2H27M2 16C10 15 17 10 19 2" fill="none" stroke="#8c8cf5" stroke-width="2.6"/></svg>
<div style="position:absolute;left:1968px;top:726px;width:16px;height:2px;background:#555;"></div>
<svg style="position:absolute;left:1985px;top:715px;overflow:visible;" width="30" height="22" viewBox="0 0 30 22"><polygon points="14,1 28,9.5 14,18 0,9.5" fill="#8fd8f8"/><path d="M7 5.25L21 13.75M21 5.25L7 13.75" stroke="#2a2a2a" stroke-width="2"/></svg>
<div class="t" style="left:2023.00px;top:703.38px;height:44px;line-height:44px;font-size:22px;color:#c4c4c4;font-weight:normal;">Plane.11</div>
<div style="position:absolute;left:2134px;top:716px;width:20px;height:20px;background:#5a5a5a;border-radius:4px;"></div>
<svg style="position:absolute;left:2134px;top:716px;overflow:visible;" width="20" height="20" viewBox="0 0 20 20"><path d="M4.5 15.5L15.5 4.5" stroke="#262626" stroke-width="3.5"/></svg>
<div style="position:absolute;left:2166px;top:712px;width:12px;height:12px;border-radius:50%;background:#555;"></div>
<div style="position:absolute;left:2166px;top:730px;width:12px;height:12px;border-radius:50%;background:#555;"></div>
<svg style="position:absolute;left:2186px;top:716px;overflow:visible;" width="26" height="20" viewBox="0 0 26 20"><path d="M2 10L8.5 17L23.5 2.5" fill="none" stroke="#7ddc7d" stroke-width="3.6"/></svg>
<svg style="position:absolute;left:2228px;top:711px;overflow:visible;" width="28" height="28" viewBox="0 0 28 28"><path d="M2 2V26M1 2H27M2 16C10 15 17 10 19 2" fill="none" stroke="#8c8cf5" stroke-width="2.6"/></svg>
<div style="position:absolute;left:1968px;top:766px;width:16px;height:2px;background:#555;"></div>
<svg style="position:absolute;left:1985px;top:752px;overflow:visible;" width="30" height="30" viewBox="0 0 30 30"><polygon points="14,10 21.5,23 6.5,23" fill="#8fd8f8"/><circle cx="14" cy="5" r="3" fill="#8fd8f8"/><circle cx="4.5" cy="26" r="3" fill="#8fd8f8"/><circle cx="23.5" cy="26" r="3" fill="#8fd8f8"/></svg>
<div class="t" style="left:2023.00px;top:743.38px;height:44px;line-height:44px;font-size:22px;color:#c4c4c4;font-weight:normal;">Plane.10</div>
<div style="position:absolute;left:2134px;top:756px;width:20px;height:20px;background:#5a5a5a;border-radius:4px;"></div>
<svg style="position:absolute;left:2134px;top:756px;overflow:visible;" width="20" height="20" viewBox="0 0 20 20"><path d="M4.5 15.5L15.5 4.5" stroke="#262626" stroke-width="3.5"/></svg>
<div style="position:absolute;left:2166px;top:752px;width:12px;height:12px;border-radius:50%;background:#555;"></div>
<div style="position:absolute;left:2166px;top:770px;width:12px;height:12px;border-radius:50%;background:#555;"></div>
<svg style="position:absolute;left:2228px;top:751px;overflow:visible;" width="28" height="28" viewBox="0 0 28 28"><path d="M2 2V26M1 2H27M2 16C10 15 17 10 19 2" fill="none" stroke="#8c8cf5" stroke-width="2.6"/></svg>
<svg style="position:absolute;left:2270px;top:752px;overflow:visible;" width="25" height="25" viewBox="0 0 25 25"><rect x="0" y="0" width="24" height="24" fill="#bcbcbc"/><rect x="2.5" y="2.5" width="9.5" height="9.5" fill="#222"/><rect x="12" y="12" width="9.5" height="9.5" fill="#222"/></svg>
<div style="position:absolute;left:1968px;top:806px;width:16px;height:2px;background:#555;"></div>
<svg style="position:absolute;left:1985px;top:792px;overflow:visible;" width="30" height="30" viewBox="0 0 30 30"><polygon points="14,10 21.5,23 6.5,23" fill="#8fd8f8"/><circle cx="14" cy="5" r="3" fill="#8fd8f8"/><circle cx="4.5" cy="26" r="3" fill="#8fd8f8"/><circle cx="23.5" cy="26" r="3" fill="#8fd8f8"/></svg>
<div class="t" style="left:2023.00px;top:783.38px;height:44px;line-height:44px;font-size:22px;color:#c4c4c4;font-weight:normal;">Plane.9</div>
<div style="position:absolute;left:2134px;top:796px;width:20px;height:20px;background:#5a5a5a;border-radius:4px;"></div>
<svg style="position:absolute;left:2134px;top:796px;overflow:visible;" width="20" height="20" viewBox="0 0 20 20"><path d="M4.5 15.5L15.5 4.5" stroke="#262626" stroke-width="3.5"/></svg>
<div style="position:absolute;left:2166px;top:792px;width:12px;height:12px;border-radius:50%;background:#555;"></div>
<div style="position:absolute;left:2166px;top:810px;width:12px;height:12px;border-radius:50%;background:#555;"></div>
<svg style="position:absolute;left:2228px;top:791px;overflow:visible;" width="28" height="28" viewBox="0 0 28 28"><path d="M2 2V26M1 2H27M2 16C10 15 17 10 19 2" fill="none" stroke="#8c8cf5" stroke-width="2.6"/></svg>
<svg style="position:absolute;left:2270px;top:792px;overflow:visible;" width="25" height="25" viewBox="0 0 25 25"><rect x="0" y="0" width="24" height="24" fill="#bcbcbc"/><rect x="2.5" y="2.5" width="9.5" height="9.5" fill="#222"/><rect x="12" y="12" width="9.5" height="9.5" fill="#222"/></svg>
<div style="position:absolute;left:1950px;top:807px;width:930px;height:6px;background:#1c1c1c;"></div>
<div style="position:absolute;left:1950px;top:813px;width:930px;height:42px;background:#1c1c1c;"></div>
<div style="position:absolute;left:1950px;top:814px;width:149px;height:42px;background:#2a2a2a;border-radius:4px 4px 0 0;"></div>
<div class="t" style="left:1973.00px;top:811.03px;height:46px;line-height:46px;font-size:23px;color:#e8e8e8;font-weight:normal;transform:scaleX(1.0502);transform-origin:0 0;">Attributes</div>
<div class="t" style="left:2127.00px;top:811.03px;height:46px;line-height:46px;font-size:23px;color:#a0a0a0;font-weight:normal;transform:scaleX(0.9710);transform-origin:0 0;">Layers</div>
<div style="position:absolute;left:1950px;top:855px;width:930px;height:45px;background:#282828;"></div>
<div style="position:absolute;left:1950px;top:899px;width:930px;height:3px;background:#1f1f1f;"></div>
<div style="position:absolute;left:1962px;top:867px;width:28px;height:4px;background:#8f8f8f;"></div>
<div style="position:absolute;left:1962px;top:875px;width:28px;height:4px;background:#8f8f8f;"></div>
<div style="position:absolute;left:1962px;top:883px;width:28px;height:4px;background:#8f8f8f;"></div>
<div class="t" style="left:2011.00px;top:853.38px;height:44px;line-height:44px;font-size:22px;color:#b4b4b4;font-weight:normal;transform:scaleX(1.0364);transform-origin:0 0;">Mode</div>
<div class="t" style="left:2099.00px;top:853.38px;height:44px;line-height:44px;font-size:22px;color:#b4b4b4;font-weight:normal;transform:scaleX(1.0404);transform-origin:0 0;">User Data</div>
<svg style="position:absolute;left:2562px;top:863px;overflow:visible;" width="30" height="30" viewBox="0 0 30 30"><path d="M28 15H4M14 5L4 15L14 25" fill="none" stroke="#9a9a9a" stroke-width="3"/></svg>
<svg style="position:absolute;left:2603px;top:863px;overflow:visible;" width="30" height="30" viewBox="0 0 30 30"><path d="M2 15H26M16 5L26 15L16 25" fill="none" stroke="#555" stroke-width="3"/></svg>
<svg style="position:absolute;left:2643px;top:861px;overflow:visible;" width="30" height="32" viewBox="0 0 30 32"><path d="M15 30V4M5 14L15 4L25 14" fill="none" stroke="#9a9a9a" stroke-width="3"/></svg>
<svg style="position:absolute;left:2685px;top:863px;overflow:visible;" width="30" height="30" viewBox="0 0 30 30"><circle cx="11.5" cy="11.5" r="9" fill="none" stroke="#9a9a9a" stroke-width="2.6"/><path d="M18 18L27 27" stroke="#9a9a9a" stroke-width="3"/></svg>
<svg style="position:absolute;left:2725px;top:865px;overflow:visible;" width="30" height="30" viewBox="0 0 30 30"><path d="M1 5H29M6 13H24M11 21H19" stroke="#9a9a9a" stroke-width="3"/></svg>
<svg style="position:absolute;left:2765px;top:861px;overflow:visible;" width="28" height="32" viewBox="0 0 28 32"><rect x="2" y="14" width="23" height="16" rx="3" fill="none" stroke="#9a9a9a" stroke-width="2.6"/><path d="M7 14V9C7 2 20 2 20 9V10" fill="none" stroke="#9a9a9a" stroke-width="2.6"/><circle cx="13.5" cy="22" r="2.4" fill="#9a9a9a"/></svg>
<svg style="position:absolute;left:2803px;top:862px;overflow:visible;" width="32" height="32" viewBox="0 0 32 32"><circle cx="15.5" cy="15.5" r="13" fill="none" stroke="#9a9a9a" stroke-width="2.6"/><circle cx="15.5" cy="15.5" r="5" fill="none" stroke="#9a9a9a" stroke-width="2.6"/></svg>
<svg style="position:absolute;left:2843px;top:862px;overflow:visible;" width="30" height="30" viewBox="0 0 30 30"><path d="M14 3H3V27H27V16" fill="none" stroke="#9a9a9a" stroke-width="2.6"/><path d="M11 19L27 3M17 3H27V13" fill="none" stroke="#9a9a9a" stroke-width="2.6"/></svg>
<div style="position:absolute;left:1950px;top:902px;width:930px;height:699px;background:#2a2a2a;"></div>
<div style="position:absolute;left:2715px;top:914px;width:150px;height:31px;background:#2e2e2e;border-radius:15px;"></div>
<div style="position:absolute;left:0px;top:1433px;width:1946px;height:170px;background:#282828;"></div>
<div style="position:absolute;left:74px;top:1433px;width:1798px;height:2px;background:#1f1f1f;"></div>
<svg style="position:absolute;left:0px;top:0px;overflow:visible;" width="10" height="10" viewBox="0 0 10 10"><rect x="80" y="1441" width="2" height="2" fill="#444"/><rect x="80" y="1447" width="2" height="2" fill="#444"/><rect x="86" y="1441" width="2" height="2" fill="#444"/><rect x="86" y="1447" width="2" height="2" fill="#444"/><rect x="92" y="1441" width="2" height="2" fill="#444"/><rect x="92" y="1447" width="2" height="2" fill="#444"/><rect x="98" y="1441" width="2" height="2" fill="#444"/><rect x="98" y="1447" width="2" height="2" fill="#444"/><rect x="104" y="1441" width="2" height="2" fill="#444"/><rect x="104" y="1447" width="2" height="2" fill="#444"/><rect x="110" y="1441" width="2" height="2" fill="#444"/><rect x="110" y="1447" width="2" height="2" fill="#444"/><rect x="116" y="1441" width="2" height="2" fill="#444"/><rect x="116" y="1447" width="2" height="2" fill="#444"/><rect x="122" y="1441" width="2" height="2" fill="#444"/><rect x="122" y="1447" width="2" height="2" fill="#444"/><rect x="128" y="1441" width="2" height="2" fill="#444"/><rect x="128" y="1447" width="2" height="2" fill="#444"/><rect x="134" y="1441" width="2" height="2" fill="#444"/><rect x="134" y="1447" width="2" height="2" fill="#444"/><rect x="140" y="1441" width="2" height="2" fill="#444"/><rect x="140" y="1447" width="2" height="2" fill="#444"/><rect x="146" y="1441" width="2" height="2" fill="#444"/><rect x="146" y="1447" width="2" height="2" fill="#444"/><rect x="152" y="1441" width="2" height="2" fill="#444"/><rect x="152" y="1447" width="2" height="2" fill="#444"/><rect x="158" y="1441" width="2" height="2" fill="#444"/><rect x="158" y="1447" width="2" height="2" fill="#444"/><rect x="164" y="1441" width="2" height="2" fill="#444"/><rect x="164" y="1447" width="2" height="2" fill="#444"/><rect x="170" y="1441" width="2" height="2" fill="#444"/><rect x="170" y="1447" width="2" height="2" fill="#444"/><rect x="176" y="1441" width="2" height="2" fill="#444"/><rect x="176" y="1447" width="2" height="2" fill="#444"/><rect x="182" y="1441" width="2" height="2" fill="#444"/><rect x="182" y="1447" width="2" height="2" fill="#444"/><rect x="188" y="1441" width="2" height="2" fill="#444"/><rect x="188" y="1447" width="2" height="2" fill="#444"/><rect x="194" y="1441" width="2" height="2" fill="#444"/><rect x="194" y="1447" width="2" height="2" fill="#444"/><rect x="200" y="1441" width="2" height="2" fill="#444"/><rect x="200" y="1447" width="2" height="2" fill="#444"/><rect x="206" y="1441" width="2" height="2" fill="#444"/><rect x="206" y="1447" width="2" height="2" fill="#444"/><rect x="212" y="1441" width="2" height="2" fill="#444"/><rect x="212" y="1447" width="2" height="2" fill="#444"/><rect x="218" y="1441" width="2" height="2" fill="#444"/><rect x="218" y="1447" width="2" height="2" fill="#444"/><rect x="224" y="1441" width="2" height="2" fill="#444"/><rect x="224" y="1447" width="2" height="2" fill="#444"/><rect x="230" y="1441" width="2" height="2" fill="#444"/><rect x="230" y="1447" width="2" height="2" fill="#444"/><rect x="236" y="1441" width="2" height="2" fill="#444"/><rect x="236" y="1447" width="2" height="2" fill="#444"/><rect x="242" y="1441" width="2" height="2" fill="#444"/><rect x="242" y="1447" width="2" height="2" fill="#444"/><rect x="248" y="1441" width="2" height="2" fill="#444"/><rect x="248" y="1447" width="2" height="2" fill="#444"/><rect x="254" y="1441" width="2" height="2" fill="#444"/><rect x="254" y="1447" width="2" height="2" fill="#444"/><rect x="260" y="1441" width="2" height="2" fill="#444"/><rect x="260" y="1447" width="2" height="2" fill="#444"/><rect x="266" y="1441" width="2" height="2" fill="#444"/><rect x="266" y="1447" width="2" height="2" fill="#444"/><rect x="272" y="1441" width="2" height="2" fill="#444"/><rect x="272" y="1447" width="2" height="2" fill="#444"/><rect x="278" y="1441" width="2" height="2" fill="#444"/><rect x="278" y="1447" width="2" height="2" fill="#444"/><rect x="284" y="1441" width="2" height="2" fill="#444"/><rect x="284" y="1447" width="2" height="2" fill="#444"/><rect x="290" y="1441" width="2" height="2" fill="#444"/><rect x="290" y="1447" width="2" height="2" fill="#444"/><rect x="296" y="1441" width="2" height="2" fill="#444"/><rect x="296" y="1447" width="2" height="2" fill="#444"/><rect x="302" y="1441" width="2" height="2" fill="#444"/><rect x="302" y="1447" width="2" height="2" fill="#444"/><rect x="308" y="1441" width="2" height="2" fill="#444"/><rect x="308" y="1447" width="2" height="2" fill="#444"/><rect x="314" y="1441" width="2" height="2" fill="#444"/><rect x="314" y="1447" width="2" height="2" fill="#444"/><rect x="320" y="1441" width="2" height="2" fill="#444"/><rect x="320" y="1447" width="2" height="2" fill="#444"/><rect x="326" y="1441" width="2" height="2" fill="#444"/><rect x="326" y="1447" width="2" height="2" fill="#444"/><rect x="332" y="1441" width="2" height="2" fill="#444"/><rect x="332" y="1447" width="2" height="2" fill="#444"/><rect x="338" y="1441" width="2" height="2" fill="#444"/><rect x="338" y="1447" width="2" height="2" fill="#444"/><rect x="344" y="1441" width="2" height="2" fill="#444"/><rect x="344" y="1447" width="2" height="2" fill="#444"/><rect x="350" y="1441" width="2" height="2" fill="#444"/><rect x="350" y="1447" width="2" height="2" fill="#444"/><rect x="356" y="1441" width="2" height="2" fill="#444"/><rect x="356" y="1447" width="2" height="2" fill="#444"/><rect x="362" y="1441" width="2" height="2" fill="#444"/><rect x="362" y="1447" width="2" height="2" fill="#444"/><rect x="368" y="1441" width="2" height="2" fill="#444"/><rect x="368" y="1447" width="2" height="2" fill="#444"/><rect x="374" y="1441" width="2" height="2" fill="#444"/><rect x="374" y="1447" width="2" height="2" fill="#444"/><rect x="380" y="1441" width="2" height="2" fill="#444"/><rect x="380" y="1447" width="2" height="2" fill="#444"/><rect x="386" y="1441" width="2" height="2" fill="#444"/><rect x="386" y="1447" width="2" height="2" fill="#444"/><rect x="392" y="1441" width="2" height="2" fill="#444"/><rect x="392" y="1447" width="2" height="2" fill="#444"/><rect x="398" y="1441" width="2" height="2" fill="#444"/><rect x="398" y="1447" width="2" height="2" fill="#444"/><rect x="404" y="1441" width="2" height="2" fill="#444"/><rect x="404" y="1447" width="2" height="2" fill="#444"/><rect x="410" y="1441" width="2" height="2" fill="#444"/><rect x="410" y="1447" width="2" height="2" fill="#444"/><rect x="416" y="1441" width="2" height="2" fill="#444"/><rect x="416" y="1447" width="2" height="2" fill="#444"/><rect x="422" y="1441" width="2" height="2" fill="#444"/><rect x="422" y="1447" width="2" height="2" fill="#444"/><rect x="428" y="1441" width="2" height="2" fill="#444"/><rect x="428" y="1447" width="2" height="2" fill="#444"/><rect x="434" y="1441" width="2" height="2" fill="#444"/><rect x="434" y="1447" width="2" height="2" fill="#444"/><rect x="440" y="1441" width="2" height="2" fill="#444"/><rect x="440" y="1447" width="2" height="2" fill="#444"/><rect x="446" y="1441" width="2" height="2" fill="#444"/><rect x="446" y="1447" width="2" height="2" fill="#444"/><rect x="452" y="1441" width="2" height="2" fill="#444"/><rect x="452" y="1447" width="2" height="2" fill="#444"/><rect x="458" y="1441" width="2" height="2" fill="#444"/><rect x="458" y="1447" width="2" height="2" fill="#444"/><rect x="464" y="1441" width="2" height="2" fill="#444"/><rect x="464" y="1447" width="2" height="2" fill="#444"/><rect x="470" y="1441" width="2" height="2" fill="#444"/><rect x="470" y="1447" width="2" height="2" fill="#444"/><rect x="476" y="1441" width="2" height="2" fill="#444"/><rect x="476" y="1447" width="2" height="2" fill="#444"/><rect x="482" y="1441" width="2" height="2" fill="#444"/><rect x="482" y="1447" width="2" height="2" fill="#444"/><rect x="488" y="1441" width="2" height="2" fill="#444"/><rect x="488" y="1447" width="2" height="2" fill="#444"/><rect x="494" y="1441" width="2" height="2" fill="#444"/><rect x="494" y="1447" width="2" height="2" fill="#444"/><rect x="500" y="1441" width="2" height="2" fill="#444"/><rect x="500" y="1447" width="2" height="2" fill="#444"/><rect x="506" y="1441" width="2" height="2" fill="#444"/><rect x="506" y="1447" width="2" height="2" fill="#444"/><rect x="512" y="1441" width="2" height="2" fill="#444"/><rect x="512" y="1447" width="2" height="2" fill="#444"/><rect x="518" y="1441" width="2" height="2" fill="#444"/><rect x="518" y="1447" width="2" height="2" fill="#444"/><rect x="524" y="1441" width="2" height="2" fill="#444"/><rect x="524" y="1447" width="2" height="2" fill="#444"/><rect x="530" y="1441" width="2" height="2" fill="#444"/><rect x="530" y="1447" width="2" height="2" fill="#444"/><rect x="536" y="1441" width="2" height="2" fill="#444"/><rect x="536" y="1447" width="2" height="2" fill="#444"/><rect x="542" y="1441" width="2" height="2" fill="#444"/><rect x="542" y="1447" width="2" height="2" fill="#444"/><rect x="548" y="1441" width="2" height="2" fill="#444"/><rect x="548" y="1447" width="2" height="2" fill="#444"/><rect x="554" y="1441" width="2" height="2" fill="#444"/><rect x="554" y="1447" width="2" height="2" fill="#444"/><rect x="560" y="1441" width="2" height="2" fill="#444"/><rect x="560" y="1447" width="2" height="2" fill="#444"/><rect x="566" y="1441" width="2" height="2" fill="#444"/><rect x="566" y="1447" width="2" height="2" fill="#444"/><rect x="572" y="1441" width="2" height="2" fill="#444"/><rect x="572" y="1447" width="2" height="2" fill="#444"/><rect x="578" y="1441" width="2" height="2" fill="#444"/><rect x="578" y="1447" width="2" height="2" fill="#444"/><rect x="584" y="1441" width="2" height="2" fill="#444"/><rect x="584" y="1447" width="2" height="2" fill="#444"/><rect x="590" y="1441" width="2" height="2" fill="#444"/><rect x="590" y="1447" width="2" height="2" fill="#444"/><rect x="596" y="1441" width="2" height="2" fill="#444"/><rect x="596" y="1447" width="2" height="2" fill="#444"/><rect x="602" y="1441" width="2" height="2" fill="#444"/><rect x="602" y="1447" width="2" height="2" fill="#444"/><rect x="608" y="1441" width="2" height="2" fill="#444"/><rect x="608" y="1447" width="2" height="2" fill="#444"/><rect x="614" y="1441" width="2" height="2" fill="#444"/><rect x="614" y="1447" width="2" height="2" fill="#444"/><rect x="620" y="1441" width="2" height="2" fill="#444"/><rect x="620" y="1447" width="2" height="2" fill="#444"/><rect x="626" y="1441" width="2" height="2" fill="#444"/><rect x="626" y="1447" width="2" height="2" fill="#444"/><rect x="632" y="1441" width="2" height="2" fill="#444"/><rect x="632" y="1447" width="2" height="2" fill="#444"/><rect x="638" y="1441" width="2" height="2" fill="#444"/><rect x="638" y="1447" width="2" height="2" fill="#444"/><rect x="644" y="1441" width="2" height="2" fill="#444"/><rect x="644" y="1447" width="2" height="2" fill="#444"/><rect x="650" y="1441" width="2" height="2" fill="#444"/><rect x="650" y="1447" width="2" height="2" fill="#444"/><rect x="656" y="1441" width="2" height="2" fill="#444"/><rect x="656" y="1447" width="2" height="2" fill="#444"/><rect x="662" y="1441" width="2" height="2" fill="#444"/><rect x="662" y="1447" width="2" height="2" fill="#444"/><rect x="668" y="1441" width="2" height="2" fill="#444"/><rect x="668" y="1447" width="2" height="2" fill="#444"/><rect x="674" y="1441" width="2" height="2" fill="#444"/><rect x="674" y="1447" width="2" height="2" fill="#444"/><rect x="680" y="1441" width="2" height="2" fill="#444"/><rect x="680" y="1447" width="2" height="2" fill="#444"/><rect x="686" y="1441" width="2" height="2" fill="#444"/><rect x="686" y="1447" width="2" height="2" fill="#444"/><rect x="692" y="1441" width="2" height="2" fill="#444"/><rect x="692" y="1447" width="2" height="2" fill="#444"/><rect x="698" y="1441" width="2" height="2" fill="#444"/><rect x="698" y="1447" width="2" height="2" fill="#444"/><rect x="704" y="1441" width="2" height="2" fill="#444"/><rect x="704" y="1447" width="2" height="2" fill="#444"/><rect x="710" y="1441" width="2" height="2" fill="#444"/><rect x="710" y="1447" width="2" height="2" fill="#444"/><rect x="716" y="1441" width="2" height="2" fill="#444"/><rect x="716" y="1447" width="2" height="2" fill="#444"/><rect x="722" y="1441" width="2" height="2" fill="#444"/><rect x="722" y="1447" width="2" height="2" fill="#444"/><rect x="728" y="1441" width="2" height="2" fill="#444"/><rect x="728" y="1447" width="2" height="2" fill="#444"/><rect x="734" y="1441" width="2" height="2" fill="#444"/><rect x="734" y="1447" width="2" height="2" fill="#444"/><rect x="740" y="1441" width="2" height="2" fill="#444"/><rect x="740" y="1447" width="2" height="2" fill="#444"/><rect x="746" y="1441" width="2" height="2" fill="#444"/><rect x="746" y="1447" width="2" height="2" fill="#444"/><rect x="752" y="1441" width="2" height="2" fill="#444"/><rect x="752" y="1447" width="2" height="2" fill="#444"/><rect x="758" y="1441" width="2" height="2" fill="#444"/><rect x="758" y="1447" width="2" height="2" fill="#444"/><rect x="764" y="1441" width="2" height="2" fill="#444"/><rect x="764" y="1447" width="2" height="2" fill="#444"/><rect x="770" y="1441" width="2" height="2" fill="#444"/><rect x="770" y="1447" width="2" height="2" fill="#444"/><rect x="776" y="1441" width="2" height="2" fill="#444"/><rect x="776" y="1447" width="2" height="2" fill="#444"/><rect x="782" y="1441" width="2" height="2" fill="#444"/><rect x="782" y="1447" width="2" height="2" fill="#444"/><rect x="788" y="1441" width="2" height="2" fill="#444"/><rect x="788" y="1447" width="2" height="2" fill="#444"/><rect x="794" y="1441" width="2" height="2" fill="#444"/><rect x="794" y="1447" width="2" height="2" fill="#444"/><rect x="800" y="1441" width="2" height="2" fill="#444"/><rect x="800" y="1447" width="2" height="2" fill="#444"/><rect x="806" y="1441" width="2" height="2" fill="#444"/><rect x="806" y="1447" width="2" height="2" fill="#444"/><rect x="812" y="1441" width="2" height="2" fill="#444"/><rect x="812" y="1447" width="2" height="2" fill="#444"/><rect x="818" y="1441" width="2" height="2" fill="#444"/><rect x="818" y="1447" width="2" height="2" fill="#444"/><rect x="824" y="1441" width="2" height="2" fill="#444"/><rect x="824" y="1447" width="2" height="2" fill="#444"/><rect x="830" y="1441" width="2" height="2" fill="#444"/><rect x="830" y="1447" width="2" height="2" fill="#444"/><rect x="836" y="1441" width="2" height="2" fill="#444"/><rect x="836" y="1447" width="2" height="2" fill="#444"/><rect x="842" y="1441" width="2" height="2" fill="#444"/><rect x="842" y="1447" width="2" height="2" fill="#444"/><rect x="848" y="1441" width="2" height="2" fill="#444"/><rect x="848" y="1447" width="2" height="2" fill="#444"/><rect x="854" y="1441" width="2" height="2" fill="#444"/><rect x="854" y="1447" width="2" height="2" fill="#444"/><rect x="860" y="1441" width="2" height="2" fill="#444"/><rect x="860" y="1447" width="2" height="2" fill="#444"/><rect x="866" y="1441" width="2" height="2" fill="#444"/><rect x="866" y="1447" width="2" height="2" fill="#444"/><rect x="872" y="1441" width="2" height="2" fill="#444"/><rect x="872" y="1447" width="2" height="2" fill="#444"/><rect x="878" y="1441" width="2" height="2" fill="#444"/><rect x="878" y="1447" width="2" height="2" fill="#444"/><rect x="884" y="1441" width="2" height="2" fill="#444"/><rect x="884" y="1447" width="2" height="2" fill="#444"/><rect x="890" y="1441" width="2" height="2" fill="#444"/><rect x="890" y="1447" width="2" height="2" fill="#444"/><rect x="896" y="1441" width="2" height="2" fill="#444"/><rect x="896" y="1447" width="2" height="2" fill="#444"/><rect x="902" y="1441" width="2" height="2" fill="#444"/><rect x="902" y="1447" width="2" height="2" fill="#444"/><rect x="908" y="1441" width="2" height="2" fill="#444"/><rect x="908" y="1447" width="2" height="2" fill="#444"/><rect x="914" y="1441" width="2" height="2" fill="#444"/><rect x="914" y="1447" width="2" height="2" fill="#444"/><rect x="920" y="1441" width="2" height="2" fill="#444"/><rect x="920" y="1447" width="2" height="2" fill="#444"/><rect x="926" y="1441" width="2" height="2" fill="#444"/><rect x="926" y="1447" width="2" height="2" fill="#444"/><rect x="932" y="1441" width="2" height="2" fill="#444"/><rect x="932" y="1447" width="2" height="2" fill="#444"/><rect x="938" y="1441" width="2" height="2" fill="#444"/><rect x="938" y="1447" width="2" height="2" fill="#444"/><rect x="944" y="1441" width="2" height="2" fill="#444"/><rect x="944" y="1447" width="2" height="2" fill="#444"/><rect x="950" y="1441" width="2" height="2" fill="#444"/><rect x="950" y="1447" width="2" height="2" fill="#444"/><rect x="956" y="1441" width="2" height="2" fill="#444"/><rect x="956" y="1447" width="2" height="2" fill="#444"/><rect x="962" y="1441" width="2" height="2" fill="#444"/><rect x="962" y="1447" width="2" height="2" fill="#444"/><rect x="968" y="1441" width="2" height="2" fill="#444"/><rect x="968" y="1447" width="2" height="2" fill="#444"/><rect x="974" y="1441" width="2" height="2" fill="#444"/><rect x="974" y="1447" width="2" height="2" fill="#444"/><rect x="980" y="1441" width="2" height="2" fill="#444"/><rect x="980" y="1447" width="2" height="2" fill="#444"/><rect x="986" y="1441" width="2" height="2" fill="#444"/><rect x="986" y="1447" width="2" height="2" fill="#444"/><rect x="992" y="1441" width="2" height="2" fill="#444"/><rect x="992" y="1447" width="2" height="2" fill="#444"/><rect x="998" y="1441" width="2" height="2" fill="#444"/><rect x="998" y="1447" width="2" height="2" fill="#444"/><rect x="1004" y="1441" width="2" height="2" fill="#444"/><rect x="1004" y="1447" width="2" height="2" fill="#444"/><rect x="1010" y="1441" width="2" height="2" fill="#444"/><rect x="1010" y="1447" width="2" height="2" fill="#444"/><rect x="1016" y="1441" width="2" height="2" fill="#444"/><rect x="1016" y="1447" width="2" height="2" fill="#444"/><rect x="1022" y="1441" width="2" height="2" fill="#444"/><rect x="1022" y="1447" width="2" height="2" fill="#444"/><rect x="1028" y="1441" width="2" height="2" fill="#444"/><rect x="1028" y="1447" width="2" height="2" fill="#444"/><rect x="1034" y="1441" width="2" height="2" fill="#444"/><rect x="1034" y="1447" width="2" height="2" fill="#444"/><rect x="1040" y="1441" width="2" height="2" fill="#444"/><rect x="1040" y="1447" width="2" height="2" fill="#444"/><rect x="1046" y="1441" width="2" height="2" fill="#444"/><rect x="1046" y="1447" width="2" height="2" fill="#444"/><rect x="1052" y="1441" width="2" height="2" fill="#444"/><rect x="1052" y="1447" width="2" height="2" fill="#444"/><rect x="1058" y="1441" width="2" height="2" fill="#444"/><rect x="1058" y="1447" width="2" height="2" fill="#444"/><rect x="1064" y="1441" width="2" height="2" fill="#444"/><rect x="1064" y="1447" width="2" height="2" fill="#444"/><rect x="1070" y="1441" width="2" height="2" fill="#444"/><rect x="1070" y="1447" width="2" height="2" fill="#444"/><rect x="1076" y="1441" width="2" height="2" fill="#444"/><rect x="1076" y="1447" width="2" height="2" fill="#444"/><rect x="1082" y="1441" width="2" height="2" fill="#444"/><rect x="1082" y="1447" width="2" height="2" fill="#444"/><rect x="1088" y="1441" width="2" height="2" fill="#444"/><rect x="1088" y="1447" width="2" height="2" fill="#444"/><rect x="1094" y="1441" width="2" height="2" fill="#444"/><rect x="1094" y="1447" width="2" height="2" fill="#444"/><rect x="1100" y="1441" width="2" height="2" fill="#444"/><rect x="1100" y="1447" width="2" height="2" fill="#444"/><rect x="1106" y="1441" width="2" height="2" fill="#444"/><rect x="1106" y="1447" width="2" height="2" fill="#444"/><rect x="1112" y="1441" width="2" height="2" fill="#444"/><rect x="1112" y="1447" width="2" height="2" fill="#444"/><rect x="1118" y="1441" width="2" height="2" fill="#444"/><rect x="1118" y="1447" width="2" height="2" fill="#444"/><rect x="1124" y="1441" width="2" height="2" fill="#444"/><rect x="1124" y="1447" width="2" height="2" fill="#444"/><rect x="1130" y="1441" width="2" height="2" fill="#444"/><rect x="1130" y="1447" width="2" height="2" fill="#444"/><rect x="1136" y="1441" width="2" height="2" fill="#444"/><rect x="1136" y="1447" width="2" height="2" fill="#444"/><rect x="1142" y="1441" width="2" height="2" fill="#444"/><rect x="1142" y="1447" width="2" height="2" fill="#444"/><rect x="1148" y="1441" width="2" height="2" fill="#444"/><rect x="1148" y="1447" width="2" height="2" fill="#444"/><rect x="1154" y="1441" width="2" height="2" fill="#444"/><rect x="1154" y="1447" width="2" height="2" fill="#444"/><rect x="1160" y="1441" width="2" height="2" fill="#444"/><rect x="1160" y="1447" width="2" height="2" fill="#444"/><rect x="1166" y="1441" width="2" height="2" fill="#444"/><rect x="1166" y="1447" width="2" height="2" fill="#444"/><rect x="1172" y="1441" width="2" height="2" fill="#444"/><rect x="1172" y="1447" width="2" height="2" fill="#444"/><rect x="1178" y="1441" width="2" height="2" fill="#444"/><rect x="1178" y="1447" width="2" height="2" fill="#444"/><rect x="1184" y="1441" width="2" height="2" fill="#444"/><rect x="1184" y="1447" width="2" height="2" fill="#444"/><rect x="1190" y="1441" width="2" height="2" fill="#444"/><rect x="1190" y="1447" width="2" height="2" fill="#444"/><rect x="1196" y="1441" width="2" height="2" fill="#444"/><rect x="1196" y="1447" width="2" height="2" fill="#444"/><rect x="1202" y="1441" width="2" height="2" fill="#444"/><rect x="1202" y="1447" width="2" height="2" fill="#444"/><rect x="1208" y="1441" width="2" height="2" fill="#444"/><rect x="1208" y="1447" width="2" height="2" fill="#444"/><rect x="1214" y="1441" width="2" height="2" fill="#444"/><rect x="1214" y="1447" width="2" height="2" fill="#444"/><rect x="1220" y="1441" width="2" height="2" fill="#444"/><rect x="1220" y="1447" width="2" height="2" fill="#444"/><rect x="1226" y="1441" width="2" height="2" fill="#444"/><rect x="1226" y="1447" width="2" height="2" fill="#444"/><rect x="1232" y="1441" width="2" height="2" fill="#444"/><rect x="1232" y="1447" width="2" height="2" fill="#444"/><rect x="1238" y="1441" width="2" height="2" fill="#444"/><rect x="1238" y="1447" width="2" height="2" fill="#444"/><rect x="1244" y="1441" width="2" height="2" fill="#444"/><rect x="1244" y="1447" width="2" height="2" fill="#444"/><rect x="1250" y="1441" width="2" height="2" fill="#444"/><rect x="1250" y="1447" width="2" height="2" fill="#444"/><rect x="1256" y="1441" width="2" height="2" fill="#444"/><rect x="1256" y="1447" width="2" height="2" fill="#444"/><rect x="1262" y="1441" width="2" height="2" fill="#444"/><rect x="1262" y="1447" width="2" height="2" fill="#444"/><rect x="1268" y="1441" width="2" height="2" fill="#444"/><rect x="1268" y="1447" width="2" height="2" fill="#444"/><rect x="1274" y="1441" width="2" height="2" fill="#444"/><rect x="1274" y="1447" width="2" height="2" fill="#444"/><rect x="1280" y="1441" width="2" height="2" fill="#444"/><rect x="1280" y="1447" width="2" height="2" fill="#444"/><rect x="1286" y="1441" width="2" height="2" fill="#444"/><rect x="1286" y="1447" width="2" height="2" fill="#444"/><rect x="1292" y="1441" width="2" height="2" fill="#444"/><rect x="1292" y="1447" width="2" height="2" fill="#444"/><rect x="1298" y="1441" width="2" height="2" fill="#444"/><rect x="1298" y="1447" width="2" height="2" fill="#444"/><rect x="1304" y="1441" width="2" height="2" fill="#444"/><rect x="1304" y="1447" width="2" height="2" fill="#444"/><rect x="1310" y="1441" width="2" height="2" fill="#444"/><rect x="1310" y="1447" width="2" height="2" fill="#444"/><rect x="1316" y="1441" width="2" height="2" fill="#444"/><rect x="1316" y="1447" width="2" height="2" fill="#444"/><rect x="1322" y="1441" width="2" height="2" fill="#444"/><rect x="1322" y="1447" width="2" height="2" fill="#444"/><rect x="1328" y="1441" width="2" height="2" fill="#444"/><rect x="1328" y="1447" width="2" height="2" fill="#444"/><rect x="1334" y="1441" width="2" height="2" fill="#444"/><rect x="1334" y="1447" width="2" height="2" fill="#444"/><rect x="1340" y="1441" width="2" height="2" fill="#444"/><rect x="1340" y="1447" width="2" height="2" fill="#444"/><rect x="1346" y="1441" width="2" height="2" fill="#444"/><rect x="1346" y="1447" width="2" height="2" fill="#444"/><rect x="1352" y="1441" width="2" height="2" fill="#444"/><rect x="1352" y="1447" width="2" height="2" fill="#444"/><rect x="1358" y="1441" width="2" height="2" fill="#444"/><rect x="1358" y="1447" width="2" height="2" fill="#444"/><rect x="1364" y="1441" width="2" height="2" fill="#444"/><rect x="1364" y="1447" width="2" height="2" fill="#444"/><rect x="1370" y="1441" width="2" height="2" fill="#444"/><rect x="1370" y="1447" width="2" height="2" fill="#444"/><rect x="1376" y="1441" width="2" height="2" fill="#444"/><rect x="1376" y="1447" width="2" height="2" fill="#444"/><rect x="1382" y="1441" width="2" height="2" fill="#444"/><rect x="1382" y="1447" width="2" height="2" fill="#444"/><rect x="1388" y="1441" width="2" height="2" fill="#444"/><rect x="1388" y="1447" width="2" height="2" fill="#444"/><rect x="1394" y="1441" width="2" height="2" fill="#444"/><rect x="1394" y="1447" width="2" height="2" fill="#444"/><rect x="1400" y="1441" width="2" height="2" fill="#444"/><rect x="1400" y="1447" width="2" height="2" fill="#444"/><rect x="1406" y="1441" width="2" height="2" fill="#444"/><rect x="1406" y="1447" width="2" height="2" fill="#444"/><rect x="1412" y="1441" width="2" height="2" fill="#444"/><rect x="1412" y="1447" width="2" height="2" fill="#444"/><rect x="1418" y="1441" width="2" height="2" fill="#444"/><rect x="1418" y="1447" width="2" height="2" fill="#444"/><rect x="1424" y="1441" width="2" height="2" fill="#444"/><rect x="1424" y="1447" width="2" height="2" fill="#444"/><rect x="1430" y="1441" width="2" height="2" fill="#444"/><rect x="1430" y="1447" width="2" height="2" fill="#444"/><rect x="1436" y="1441" width="2" height="2" fill="#444"/><rect x="1436" y="1447" width="2" height="2" fill="#444"/><rect x="1442" y="1441" width="2" height="2" fill="#444"/><rect x="1442" y="1447" width="2" height="2" fill="#444"/><rect x="1448" y="1441" width="2" height="2" fill="#444"/><rect x="1448" y="1447" width="2" height="2" fill="#444"/><rect x="1454" y="1441" width="2" height="2" fill="#444"/><rect x="1454" y="1447" width="2" height="2" fill="#444"/><rect x="1460" y="1441" width="2" height="2" fill="#444"/><rect x="1460" y="1447" width="2" height="2" fill="#444"/><rect x="1466" y="1441" width="2" height="2" fill="#444"/><rect x="1466" y="1447" width="2" height="2" fill="#444"/><rect x="1472" y="1441" width="2" height="2" fill="#444"/><rect x="1472" y="1447" width="2" height="2" fill="#444"/><rect x="1478" y="1441" width="2" height="2" fill="#444"/><rect x="1478" y="1447" width="2" height="2" fill="#444"/><rect x="1484" y="1441" width="2" height="2" fill="#444"/><rect x="1484" y="1447" width="2" height="2" fill="#444"/><rect x="1490" y="1441" width="2" height="2" fill="#444"/><rect x="1490" y="1447" width="2" height="2" fill="#444"/><rect x="1496" y="1441" width="2" height="2" fill="#444"/><rect x="1496" y="1447" width="2" height="2" fill="#444"/><rect x="1502" y="1441" width="2" height="2" fill="#444"/><rect x="1502" y="1447" width="2" height="2" fill="#444"/><rect x="1508" y="1441" width="2" height="2" fill="#444"/><rect x="1508" y="1447" width="2" height="2" fill="#444"/><rect x="1514" y="1441" width="2" height="2" fill="#444"/><rect x="1514" y="1447" width="2" height="2" fill="#444"/><rect x="1520" y="1441" width="2" height="2" fill="#444"/><rect x="1520" y="1447" width="2" height="2" fill="#444"/><rect x="1526" y="1441" width="2" height="2" fill="#444"/><rect x="1526" y="1447" width="2" height="2" fill="#444"/><rect x="1532" y="1441" width="2" height="2" fill="#444"/><rect x="1532" y="1447" width="2" height="2" fill="#444"/><rect x="1538" y="1441" width="2" height="2" fill="#444"/><rect x="1538" y="1447" width="2" height="2" fill="#444"/><rect x="1544" y="1441" width="2" height="2" fill="#444"/><rect x="1544" y="1447" width="2" height="2" fill="#444"/><rect x="1550" y="1441" width="2" height="2" fill="#444"/><rect x="1550" y="1447" width="2" height="2" fill="#444"/><rect x="1556" y="1441" width="2" height="2" fill="#444"/><rect x="1556" y="1447" width="2" height="2" fill="#444"/><rect x="1562" y="1441" width="2" height="2" fill="#444"/><rect x="1562" y="1447" width="2" height="2" fill="#444"/><rect x="1568" y="1441" width="2" height="2" fill="#444"/><rect x="1568" y="1447" width="2" height="2" fill="#444"/><rect x="1574" y="1441" width="2" height="2" fill="#444"/><rect x="1574" y="1447" width="2" height="2" fill="#444"/><rect x="1580" y="1441" width="2" height="2" fill="#444"/><rect x="1580" y="1447" width="2" height="2" fill="#444"/><rect x="1586" y="1441" width="2" height="2" fill="#444"/><rect x="1586" y="1447" width="2" height="2" fill="#444"/><rect x="1592" y="1441" width="2" height="2" fill="#444"/><rect x="1592" y="1447" width="2" height="2" fill="#444"/><rect x="1598" y="1441" width="2" height="2" fill="#444"/><rect x="1598" y="1447" width="2" height="2" fill="#444"/><rect x="1604" y="1441" width="2" height="2" fill="#444"/><rect x="1604" y="1447" width="2" height="2" fill="#444"/><rect x="1610" y="1441" width="2" height="2" fill="#444"/><rect x="1610" y="1447" width="2" height="2" fill="#444"/><rect x="1616" y="1441" width="2" height="2" fill="#444"/><rect x="1616" y="1447" width="2" height="2" fill="#444"/><rect x="1622" y="1441" width="2" height="2" fill="#444"/><rect x="1622" y="1447" width="2" height="2" fill="#444"/><rect x="1628" y="1441" width="2" height="2" fill="#444"/><rect x="1628" y="1447" width="2" height="2" fill="#444"/><rect x="1634" y="1441" width="2" height="2" fill="#444"/><rect x="1634" y="1447" width="2" height="2" fill="#444"/><rect x="1640" y="1441" width="2" height="2" fill="#444"/><rect x="1640" y="1447" width="2" height="2" fill="#444"/><rect x="1646" y="1441" width="2" height="2" fill="#444"/><rect x="1646" y="1447" width="2" height="2" fill="#444"/><rect x="1652" y="1441" width="2" height="2" fill="#444"/><rect x="1652" y="1447" width="2" height="2" fill="#444"/><rect x="1658" y="1441" width="2" height="2" fill="#444"/><rect x="1658" y="1447" width="2" height="2" fill="#444"/><rect x="1664" y="1441" width="2" height="2" fill="#444"/><rect x="1664" y="1447" width="2" height="2" fill="#444"/><rect x="1670" y="1441" width="2" height="2" fill="#444"/><rect x="1670" y="1447" width="2" height="2" fill="#444"/><rect x="1676" y="1441" width="2" height="2" fill="#444"/><rect x="1676" y="1447" width="2" height="2" fill="#444"/><rect x="1682" y="1441" width="2" height="2" fill="#444"/><rect x="1682" y="1447" width="2" height="2" fill="#444"/><rect x="1688" y="1441" width="2" height="2" fill="#444"/><rect x="1688" y="1447" width="2" height="2" fill="#444"/><rect x="1694" y="1441" width="2" height="2" fill="#444"/><rect x="1694" y="1447" width="2" height="2" fill="#444"/><rect x="1700" y="1441" width="2" height="2" fill="#444"/><rect x="1700" y="1447" width="2" height="2" fill="#444"/><rect x="1706" y="1441" width="2" height="2" fill="#444"/><rect x="1706" y="1447" width="2" height="2" fill="#444"/><rect x="1712" y="1441" width="2" height="2" fill="#444"/><rect x="1712" y="1447" width="2" height="2" fill="#444"/><rect x="1718" y="1441" width="2" height="2" fill="#444"/><rect x="1718" y="1447" width="2" height="2" fill="#444"/><rect x="1724" y="1441" width="2" height="2" fill="#444"/><rect x="1724" y="1447" width="2" height="2" fill="#444"/><rect x="1730" y="1441" width="2" height="2" fill="#444"/><rect x="1730" y="1447" width="2" height="2" fill="#444"/><rect x="1736" y="1441" width="2" height="2" fill="#444"/><rect x="1736" y="1447" width="2" height="2" fill="#444"/><rect x="1742" y="1441" width="2" height="2" fill="#444"/><rect x="1742" y="1447" width="2" height="2" fill="#444"/><rect x="1748" y="1441" width="2" height="2" fill="#444"/><rect x="1748" y="1447" width="2" height="2" fill="#444"/><rect x="1754" y="1441" width="2" height="2" fill="#444"/><rect x="1754" y="1447" width="2" height="2" fill="#444"/><rect x="1760" y="1441" width="2" height="2" fill="#444"/><rect x="1760" y="1447" width="2" height="2" fill="#444"/><rect x="1766" y="1441" width="2" height="2" fill="#444"/><rect x="1766" y="1447" width="2" height="2" fill="#444"/><rect x="1772" y="1441" width="2" height="2" fill="#444"/><rect x="1772" y="1447" width="2" height="2" fill="#444"/><rect x="1778" y="1441" width="2" height="2" fill="#444"/><rect x="1778" y="1447" width="2" height="2" fill="#444"/><rect x="1784" y="1441" width="2" height="2" fill="#444"/><rect x="1784" y="1447" width="2" height="2" fill="#444"/><rect x="1790" y="1441" width="2" height="2" fill="#444"/><rect x="1790" y="1447" width="2" height="2" fill="#444"/><rect x="1796" y="1441" width="2" height="2" fill="#444"/><rect x="1796" y="1447" width="2" height="2" fill="#444"/><rect x="1802" y="1441" width="2" height="2" fill="#444"/><rect x="1802" y="1447" width="2" height="2" fill="#444"/><rect x="1808" y="1441" width="2" height="2" fill="#444"/><rect x="1808" y="1447" width="2" height="2" fill="#444"/><rect x="1814" y="1441" width="2" height="2" fill="#444"/><rect x="1814" y="1447" width="2" height="2" fill="#444"/><rect x="1820" y="1441" width="2" height="2" fill="#444"/><rect x="1820" y="1447" width="2" height="2" fill="#444"/><rect x="1826" y="1441" width="2" height="2" fill="#444"/><rect x="1826" y="1447" width="2" height="2" fill="#444"/><rect x="1832" y="1441" width="2" height="2" fill="#444"/><rect x="1832" y="1447" width="2" height="2" fill="#444"/><rect x="1838" y="1441" width="2" height="2" fill="#444"/><rect x="1838" y="1447" width="2" height="2" fill="#444"/><rect x="1844" y="1441" width="2" height="2" fill="#444"/><rect x="1844" y="1447" width="2" height="2" fill="#444"/><rect x="1850" y="1441" width="2" height="2" fill="#444"/><rect x="1850" y="1447" width="2" height="2" fill="#444"/><rect x="1856" y="1441" width="2" height="2" fill="#444"/><rect x="1856" y="1447" width="2" height="2" fill="#444"/><rect x="77" y="1466" width="2" height="2" fill="#444"/><rect x="83" y="1466" width="2" height="2" fill="#444"/><rect x="77" y="1472" width="2" height="2" fill="#444"/><rect x="83" y="1472" width="2" height="2" fill="#444"/><rect x="77" y="1478" width="2" height="2" fill="#444"/><rect x="83" y="1478" width="2" height="2" fill="#444"/><rect x="77" y="1484" width="2" height="2" fill="#444"/><rect x="83" y="1484" width="2" height="2" fill="#444"/><rect x="77" y="1490" width="2" height="2" fill="#444"/><rect x="83" y="1490" width="2" height="2" fill="#444"/><rect x="77" y="1496" width="2" height="2" fill="#444"/><rect x="83" y="1496" width="2" height="2" fill="#444"/><rect x="77" y="1502" width="2" height="2" fill="#444"/><rect x="83" y="1502" width="2" height="2" fill="#444"/><rect x="77" y="1520" width="2" height="2" fill="#444"/><rect x="83" y="1520" width="2" height="2" fill="#444"/><rect x="77" y="1526" width="2" height="2" fill="#444"/><rect x="83" y="1526" width="2" height="2" fill="#444"/><rect x="77" y="1532" width="2" height="2" fill="#444"/><rect x="83" y="1532" width="2" height="2" fill="#444"/><rect x="77" y="1538" width="2" height="2" fill="#444"/><rect x="83" y="1538" width="2" height="2" fill="#444"/><rect x="77" y="1544" width="2" height="2" fill="#444"/><rect x="83" y="1544" width="2" height="2" fill="#444"/><rect x="77" y="1550" width="2" height="2" fill="#444"/><rect x="83" y="1550" width="2" height="2" fill="#444"/><rect x="77" y="1556" width="2" height="2" fill="#444"/><rect x="83" y="1556" width="2" height="2" fill="#444"/><rect x="77" y="1562" width="2" height="2" fill="#444"/><rect x="83" y="1562" width="2" height="2" fill="#444"/><rect x="77" y="1568" width="2" height="2" fill="#444"/><rect x="83" y="1568" width="2" height="2" fill="#444"/><rect x="77" y="1574" width="2" height="2" fill="#444"/><rect x="83" y="1574" width="2" height="2" fill="#444"/><rect x="77" y="1580" width="2" height="2" fill="#444"/><rect x="83" y="1580" width="2" height="2" fill="#444"/><rect x="77" y="1586" width="2" height="2" fill="#444"/><rect x="83" y="1586" width="2" height="2" fill="#444"/><rect x="77" y="1592" width="2" height="2" fill="#444"/><rect x="83" y="1592" width="2" height="2" fill="#444"/></svg>
<div style="position:absolute;left:90px;top:1454px;width:56px;height:55px;background:#3a3a3a;border-radius:8px;"></div>
<svg style="position:absolute;left:98px;top:1462px;overflow:visible;" width="40" height="40" viewBox="0 0 40 40"><polygon points="20,5 35,20 20,35 5,20" fill="none" stroke="#bdbdbd" stroke-width="3"/></svg>
<div style="position:absolute;left:272px;top:1454px;width:392px;height:55px;background:#3a3a3a;border-radius:8px;"></div>
<div style="position:absolute;left:327px;top:1456px;width:2px;height:51px;background:#2e2e2e;"></div>
<div style="position:absolute;left:383px;top:1456px;width:2px;height:51px;background:#2e2e2e;"></div>
<div style="position:absolute;left:439px;top:1456px;width:2px;height:51px;background:#2e2e2e;"></div>
<div style="position:absolute;left:495px;top:1456px;width:2px;height:51px;background:#2e2e2e;"></div>
<div style="position:absolute;left:551px;top:1456px;width:2px;height:51px;background:#2e2e2e;"></div>
<div style="position:absolute;left:607px;top:1456px;width:2px;height:51px;background:#2e2e2e;"></div>
<svg style="position:absolute;left:284px;top:1463px;overflow:visible;" width="36" height="36" viewBox="0 0 36 36"><path d="M7 4V32" stroke="#bdbdbd" stroke-width="2.8" fill="none"/><polygon points="29,5 12,18 29,31" stroke="#bdbdbd" stroke-width="2.8" fill="none"/></svg>
<svg style="position:absolute;left:339px;top:1463px;overflow:visible;" width="36" height="36" viewBox="0 0 36 36"><polygon points="2,18 9,11 16,18 9,25" fill="#bdbdbd"/><polygon points="33,5 17,18 33,31" stroke="#bdbdbd" stroke-width="2.8" fill="none"/></svg>
<svg style="position:absolute;left:395px;top:1463px;overflow:visible;" width="36" height="36" viewBox="0 0 36 36"><polygon points="24,5 7,18 24,31" stroke="#bdbdbd" stroke-width="2.8" fill="none"/><path d="M30 4V32" stroke="#bdbdbd" stroke-width="2.8" fill="none"/></svg>
<svg style="position:absolute;left:451px;top:1463px;overflow:visible;" width="36" height="36" viewBox="0 0 36 36"><polygon points="9,3 31,18 9,33" stroke="#bdbdbd" stroke-width="2.8" fill="none"/></svg>
<svg style="position:absolute;left:507px;top:1463px;overflow:visible;" width="36" height="36" viewBox="0 0 36 36"><path d="M6 4V32" stroke="#bdbdbd" stroke-width="2.8" fill="none"/><polygon points="12,5 29,18 12,31" stroke="#bdbdbd" stroke-width="2.8" fill="none"/></svg>
<svg style="position:absolute;left:563px;top:1463px;overflow:visible;" width="36" height="36" viewBox="0 0 36 36"><polygon points="3,5 19,18 3,31" stroke="#bdbdbd" stroke-width="2.8" fill="none"/><polygon points="20,18 27,11 34,18 27,25" fill="#bdbdbd"/></svg>
<svg style="position:absolute;left:619px;top:1463px;overflow:visible;" width="36" height="36" viewBox="0 0 36 36"><polygon points="7,5 24,18 7,31" stroke="#bdbdbd" stroke-width="2.8" fill="none"/><path d="M29 4V32" stroke="#bdbdbd" stroke-width="2.8" fill="none"/></svg>
<div style="position:absolute;left:685px;top:1454px;width:167px;height:55px;background:#3a3a3a;border-radius:8px;"></div>
<div style="position:absolute;left:740px;top:1456px;width:2px;height:51px;background:#2e2e2e;"></div>
<div style="position:absolute;left:796px;top:1456px;width:2px;height:51px;background:#2e2e2e;"></div>
<div style="position:absolute;left:686px;top:1456px;width:54px;height:51px;background:#525a96;"></div>
<svg style="position:absolute;left:728px;top:1495px;overflow:visible;" width="12" height="12" viewBox="0 0 12 12"><polygon points="12,1 12,12 1,12" fill="#a8a8a8"/></svg>
<div style="position:absolute;left:741px;top:1456px;width:55px;height:51px;background:#525a96;"></div>
<svg style="position:absolute;left:784px;top:1495px;overflow:visible;" width="12" height="12" viewBox="0 0 12 12"><polygon points="12,1 12,12 1,12" fill="#a8a8a8"/></svg>
<svg style="position:absolute;left:695px;top:1463px;overflow:visible;" width="36" height="36" viewBox="0 0 36 36"><path d="M5 17V13C5 10 7 8 10 8H29M31 19V23C31 26 29 28 26 28H7" fill="none" stroke="#c8c8c8" stroke-width="3"/><path d="M24 2L30 8L24 14M12 22L6 28L12 34" fill="none" stroke="#c8c8c8" stroke-width="3"/></svg>
<svg style="position:absolute;left:751px;top:1462px;overflow:visible;" width="36" height="38" viewBox="0 0 36 38"><path d="M4 12H10V6H20V12H32V34H4Z" fill="none" stroke="#c8c8c8" stroke-width="3"/><path d="M11 18H13M17 18H19M23 18H25M11 26H13M17 26H19M23 26H25" stroke="#c8c8c8" stroke-width="2.5"/></svg>
<svg style="position:absolute;left:806px;top:1462px;overflow:visible;" width="36" height="38" viewBox="0 0 36 38"><polygon points="3,13 10,13 18,5 18,33 10,25 3,25" fill="none" stroke="#bdbdbd" stroke-width="2.8"/><path d="M23 12C26 16 26 22 23 26M27 8C32 14 32 24 27 30" fill="none" stroke="#bdbdbd" stroke-width="2.8"/></svg>
<div style="position:absolute;left:874px;top:1465px;width:165px;height:35px;background:#1b1b1b;border-radius:6px;"></div>
<div class="t" style="left:918.00px;top:1458.03px;height:46px;line-height:46px;font-size:23px;color:#e0e0e0;font-weight:normal;transform:scaleX(0.9615);transform-origin:0 0;">87.50 F</div>
<div style="position:absolute;left:1062px;top:1454px;width:168px;height:55px;background:#3a3a3a;border-radius:8px;"></div>
<div style="position:absolute;left:1117px;top:1456px;width:2px;height:51px;background:#2e2e2e;"></div>
<div style="position:absolute;left:1173px;top:1456px;width:2px;height:51px;background:#2e2e2e;"></div>
<svg style="position:absolute;left:1070px;top:1462px;overflow:visible;" width="40" height="40" viewBox="0 0 40 40"><circle cx="20" cy="20" r="16" fill="none" stroke="#5a3a34" stroke-width="2.6"/><polygon points="20,13 27,20 20,27 13,20" fill="#555"/></svg>
<svg style="position:absolute;left:1105px;top:1496px;overflow:visible;" width="12" height="12" viewBox="0 0 12 12"><polygon points="11,0 11,11 0,11" fill="#9a9a9a"/></svg>
<svg style="position:absolute;left:1125px;top:1462px;overflow:visible;" width="40" height="40" viewBox="0 0 40 40"><circle cx="20" cy="20" r="16.5" fill="none" stroke="#e0634e" stroke-width="3"/><path d="M12.5 29L20 10L27.5 29M15 23H25" fill="none" stroke="#c8c8c8" stroke-width="2.6"/></svg>
<svg style="position:absolute;left:1181px;top:1462px;overflow:visible;" width="40" height="40" viewBox="0 0 40 40"><circle cx="20" cy="20" r="16.5" fill="none" stroke="#bdbdbd" stroke-width="3"/><polygon points="27.58,17.43 30.76,17.71 30.76,22.29 27.58,22.57 26.01,25.27 27.36,28.17 23.40,30.46 21.56,27.85 18.44,27.85 16.60,30.46 12.64,28.17 13.99,25.27 12.42,22.57 9.24,22.29 9.24,17.71 12.42,17.43 13.99,14.73 12.64,11.83 16.60,9.54 18.44,12.15 21.56,12.15 23.40,9.54 27.36,11.83 26.01,14.73" fill="#bdbdbd"/><circle cx="20" cy="20" r="4" fill="#3a3a3a"/></svg>
<div style="position:absolute;left:1250px;top:1454px;width:279px;height:55px;background:#3a3a3a;border-radius:8px;"></div>
<div style="position:absolute;left:1305px;top:1456px;width:2px;height:51px;background:#2e2e2e;"></div>
<div style="position:absolute;left:1361px;top:1456px;width:2px;height:51px;background:#2e2e2e;"></div>
<div style="position:absolute;left:1417px;top:1456px;width:2px;height:51px;background:#2e2e2e;"></div>
<div style="position:absolute;left:1473px;top:1456px;width:2px;height:51px;background:#2e2e2e;"></div>
<div style="position:absolute;left:1474px;top:1456px;width:55px;height:51px;background:#525a96;"></div>
<svg style="position:absolute;left:1259px;top:1462px;overflow:visible;" width="40" height="40" viewBox="0 0 40 40"><polygon points="20,12 28,20 20,28 12,20" fill="#bdbdbd"/><path d="M14 8L20 2L26 8M14 32L20 38L26 32M8 14L2 20L8 26M32 14L38 20L32 26" fill="none" stroke="#bdbdbd" stroke-width="2.6"/></svg>
<svg style="position:absolute;left:1315px;top:1462px;overflow:visible;" width="40" height="40" viewBox="0 0 40 40"><polygon points="20,12 28,20 20,28 12,20" fill="#bdbdbd"/><path d="M9 28C4 20 7 9 16 5M31 12C36 20 33 31 24 35" fill="none" stroke="#bdbdbd" stroke-width="2.8"/><path d="M22 1L27 6L21 9M18 39L13 34L19 31" fill="none" stroke="#bdbdbd" stroke-width="2.6"/></svg>
<svg style="position:absolute;left:1371px;top:1462px;overflow:visible;" width="40" height="40" viewBox="0 0 40 40"><path d="M10 4H34V30H25" fill="none" stroke="#bdbdbd" stroke-width="3"/><polygon points="14,18 22,26 14,34 6,26" fill="#bdbdbd"/></svg>
<svg style="position:absolute;left:1427px;top:1462px;overflow:visible;" width="40" height="40" viewBox="0 0 40 40"><rect x="3" y="6" width="34" height="12" rx="6" fill="#bdbdbd"/><rect x="3" y="22" width="34" height="12" rx="6" fill="#bdbdbd"/><circle cx="30" cy="12" r="4" fill="#3a3a3a"/><circle cx="10" cy="28" r="4" fill="#3a3a3a"/></svg>
<svg style="position:absolute;left:1482px;top:1462px;overflow:visible;" width="40" height="40" viewBox="0 0 40 40"><circle cx="11" cy="27" r="6" fill="#c8c8c8"/><circle cx="26" cy="15" r="5" fill="#c8c8c8"/><path d="M5 5L35 35" stroke="#c8c8c8" stroke-width="3"/></svg>
<div style="position:absolute;left:1570px;top:1454px;width:112px;height:55px;background:#3a3a3a;border-radius:8px;"></div>
<div style="position:absolute;left:1625px;top:1456px;width:2px;height:51px;background:#2e2e2e;"></div>
<svg style="position:absolute;left:1580px;top:1462px;overflow:visible;" width="40" height="40" viewBox="0 0 40 40"><circle cx="20" cy="20" r="16.5" fill="none" stroke="#bdbdbd" stroke-width="3"/><rect x="13" y="9" width="14" height="22" rx="7" fill="none" stroke="#bdbdbd" stroke-width="2.8"/><path d="M20 9V18" stroke="#bdbdbd" stroke-width="2.8"/></svg>
<svg style="position:absolute;left:1636px;top:1462px;overflow:visible;" width="40" height="40" viewBox="0 0 40 40"><path d="M8 30C2 22 4 10 14 5M32 10C37 18 35 30 26 35" fill="none" stroke="#bdbdbd" stroke-width="3"/><polygon points="20,14 27,21 20,28 13,21" fill="#bdbdbd"/><path d="M17 24L32 7" stroke="#bdbdbd" stroke-width="2.6"/></svg>
<div style="position:absolute;left:1808px;top:1454px;width:55px;height:55px;background:#3a3a3a;border-radius:8px;"></div>
<svg style="position:absolute;left:1815px;top:1461px;overflow:visible;" width="42" height="42" viewBox="0 0 42 42"><path d="M7 5V36H37" fill="none" stroke="#bdbdbd" stroke-width="3"/><path d="M2 10L7 4L12 10M32 31L38 36L32 41" fill="none" stroke="#bdbdbd" stroke-width="3"/><path d="M9 34L36 7M25 7H36V18" fill="none" stroke="#bdbdbd" stroke-width="3"/></svg>
<svg style="position:absolute;left:0px;top:0px;overflow:visible;" width="10" height="10" viewBox="0 0 10 10"><rect x="95" y="1544" width="1770" height="2" fill="#333"/><rect x="94.0" y="1549" width="2.2" height="9" fill="#c0c0c0"/><rect x="114.0" y="1550" width="2.2" height="6" fill="#c0c0c0"/><rect x="133.9" y="1550" width="2.2" height="6" fill="#c0c0c0"/><rect x="153.9" y="1550" width="2.2" height="6" fill="#c0c0c0"/><rect x="173.9" y="1550" width="2.2" height="6" fill="#c0c0c0"/><rect x="193.8" y="1549" width="2.2" height="9" fill="#c0c0c0"/><rect x="213.8" y="1550" width="2.2" height="6" fill="#c0c0c0"/><rect x="233.8" y="1550" width="2.2" height="6" fill="#c0c0c0"/><rect x="253.8" y="1550" width="2.2" height="6" fill="#c0c0c0"/><rect x="273.7" y="1550" width="2.2" height="6" fill="#c0c0c0"/><rect x="293.7" y="1549" width="2.2" height="9" fill="#c0c0c0"/><rect x="313.7" y="1550" width="2.2" height="6" fill="#c0c0c0"/><rect x="333.6" y="1550" width="2.2" height="6" fill="#c0c0c0"/><rect x="353.6" y="1550" width="2.2" height="6" fill="#c0c0c0"/><rect x="373.6" y="1550" width="2.2" height="6" fill="#c0c0c0"/><rect x="393.5" y="1549" width="2.2" height="9" fill="#c0c0c0"/><rect x="413.5" y="1550" width="2.2" height="6" fill="#c0c0c0"/><rect x="433.5" y="1550" width="2.2" height="6" fill="#c0c0c0"/><rect x="453.5" y="1550" width="2.2" height="6" fill="#c0c0c0"/><rect x="473.4" y="1550" width="2.2" height="6" fill="#c0c0c0"/><rect x="493.4" y="1549" width="2.2" height="9" fill="#c0c0c0"/><rect x="513.4" y="1550" width="2.2" height="6" fill="#c0c0c0"/><rect x="533.3" y="1550" width="2.2" height="6" fill="#c0c0c0"/><rect x="553.3" y="1550" width="2.2" height="6" fill="#c0c0c0"/><rect x="573.3" y="1550" width="2.2" height="6" fill="#c0c0c0"/><rect x="593.2" y="1549" width="2.2" height="9" fill="#c0c0c0"/><rect x="613.2" y="1550" width="2.2" height="6" fill="#c0c0c0"/><rect x="633.2" y="1550" width="2.2" height="6" fill="#c0c0c0"/><rect x="653.2" y="1550" width="2.2" height="6" fill="#c0c0c0"/><rect x="673.1" y="1550" width="2.2" height="6" fill="#c0c0c0"/><rect x="693.1" y="1549" width="2.2" height="9" fill="#c0c0c0"/><rect x="713.1" y="1550" width="2.2" height="6" fill="#c0c0c0"/><rect x="733.0" y="1550" width="2.2" height="6" fill="#c0c0c0"/><rect x="753.0" y="1550" width="2.2" height="6" fill="#c0c0c0"/><rect x="773.0" y="1550" width="2.2" height="6" fill="#c0c0c0"/><rect x="792.9" y="1549" width="2.2" height="9" fill="#c0c0c0"/><rect x="812.9" y="1550" width="2.2" height="6" fill="#c0c0c0"/><rect x="832.9" y="1550" width="2.2" height="6" fill="#c0c0c0"/><rect x="852.9" y="1550" width="2.2" height="6" fill="#c0c0c0"/><rect x="872.8" y="1550" width="2.2" height="6" fill="#c0c0c0"/><rect x="892.8" y="1549" width="2.2" height="9" fill="#c0c0c0"/><rect x="912.8" y="1550" width="2.2" height="6" fill="#c0c0c0"/><rect x="932.7" y="1550" width="2.2" height="6" fill="#c0c0c0"/><rect x="952.7" y="1550" width="2.2" height="6" fill="#c0c0c0"/><rect x="972.7" y="1550" width="2.2" height="6" fill="#c0c0c0"/><rect x="992.6" y="1549" width="2.2" height="9" fill="#c0c0c0"/><rect x="1012.6" y="1550" width="2.2" height="6" fill="#c0c0c0"/><rect x="1032.6" y="1550" width="2.2" height="6" fill="#c0c0c0"/><rect x="1052.6" y="1550" width="2.2" height="6" fill="#c0c0c0"/><rect x="1072.5" y="1550" width="2.2" height="6" fill="#c0c0c0"/><rect x="1092.5" y="1549" width="2.2" height="9" fill="#c0c0c0"/><rect x="1112.5" y="1550" width="2.2" height="6" fill="#c0c0c0"/><rect x="1132.4" y="1550" width="2.2" height="6" fill="#c0c0c0"/><rect x="1152.4" y="1550" width="2.2" height="6" fill="#c0c0c0"/><rect x="1172.4" y="1550" width="2.2" height="6" fill="#c0c0c0"/><rect x="1192.3" y="1549" width="2.2" height="9" fill="#c0c0c0"/><rect x="1212.3" y="1550" width="2.2" height="6" fill="#c0c0c0"/><rect x="1232.3" y="1550" width="2.2" height="6" fill="#c0c0c0"/><rect x="1252.3" y="1550" width="2.2" height="6" fill="#c0c0c0"/><rect x="1272.2" y="1550" width="2.2" height="6" fill="#c0c0c0"/><rect x="1292.2" y="1549" width="2.2" height="9" fill="#c0c0c0"/><rect x="1312.2" y="1550" width="2.2" height="6" fill="#c0c0c0"/><rect x="1332.1" y="1550" width="2.2" height="6" fill="#c0c0c0"/><rect x="1352.1" y="1550" width="2.2" height="6" fill="#c0c0c0"/><rect x="1372.1" y="1550" width="2.2" height="6" fill="#c0c0c0"/><rect x="1392.0" y="1549" width="2.2" height="9" fill="#c0c0c0"/><rect x="1412.0" y="1550" width="2.2" height="6" fill="#c0c0c0"/><rect x="1432.0" y="1550" width="2.2" height="6" fill="#c0c0c0"/><rect x="1452.0" y="1550" width="2.2" height="6" fill="#c0c0c0"/><rect x="1471.9" y="1550" width="2.2" height="6" fill="#c0c0c0"/><rect x="1491.9" y="1549" width="2.2" height="9" fill="#c0c0c0"/><rect x="1511.9" y="1550" width="2.2" height="6" fill="#c0c0c0"/><rect x="1531.8" y="1550" width="2.2" height="6" fill="#c0c0c0"/><rect x="1551.8" y="1550" width="2.2" height="6" fill="#c0c0c0"/><rect x="1571.8" y="1550" width="2.2" height="6" fill="#c0c0c0"/><rect x="1591.8" y="1549" width="2.2" height="9" fill="#c0c0c0"/><rect x="1611.7" y="1550" width="2.2" height="6" fill="#c0c0c0"/><rect x="1631.7" y="1550" width="2.2" height="6" fill="#c0c0c0"/><rect x="1651.7" y="1550" width="2.2" height="6" fill="#c0c0c0"/><rect x="1671.6" y="1550" width="2.2" height="6" fill="#c0c0c0"/><rect x="1691.6" y="1549" width="2.2" height="9" fill="#c0c0c0"/><rect x="1711.6" y="1550" width="2.2" height="6" fill="#c0c0c0"/><rect x="1731.5" y="1550" width="2.2" height="6" fill="#c0c0c0"/><rect x="1751.5" y="1550" width="2.2" height="6" fill="#c0c0c0"/><rect x="1771.5" y="1550" width="2.2" height="6" fill="#c0c0c0"/><rect x="1791.4" y="1549" width="2.2" height="9" fill="#c0c0c0"/><rect x="1811.4" y="1550" width="2.2" height="6" fill="#c0c0c0"/><rect x="1831.4" y="1550" width="2.2" height="6" fill="#c0c0c0"/><rect x="1851.4" y="1550" width="2.2" height="6" fill="#c0c0c0"/><rect x="94.0" y="1516" width="2.2" height="42" fill="#9a9a9a"/><rect x="693.1" y="1516" width="2.2" height="42" fill="#9a9a9a"/><rect x="1292.2" y="1516" width="2.2" height="42" fill="#9a9a9a"/></svg>
<div class="t" style="left:187.04px;top:1504.72px;height:42px;line-height:42px;font-size:21px;color:#c4c4c4;font-weight:normal;">5</div>
<div class="t" style="left:281.01px;top:1504.72px;height:42px;line-height:42px;font-size:21px;color:#c4c4c4;font-weight:normal;">10</div>
<div class="t" style="left:380.86px;top:1504.72px;height:42px;line-height:42px;font-size:21px;color:#c4c4c4;font-weight:normal;">15</div>
<div class="t" style="left:480.71px;top:1504.72px;height:42px;line-height:42px;font-size:21px;color:#c4c4c4;font-weight:normal;">20</div>
<div class="t" style="left:580.56px;top:1504.72px;height:42px;line-height:42px;font-size:21px;color:#c4c4c4;font-weight:normal;">25</div>
<div class="t" style="left:680.41px;top:1504.72px;height:42px;line-height:42px;font-size:21px;color:#c4c4c4;font-weight:normal;">30</div>
<div class="t" style="left:780.26px;top:1504.72px;height:42px;line-height:42px;font-size:21px;color:#c4c4c4;font-weight:normal;">35</div>
<div class="t" style="left:880.11px;top:1504.72px;height:42px;line-height:42px;font-size:21px;color:#c4c4c4;font-weight:normal;">40</div>
<div class="t" style="left:979.96px;top:1504.72px;height:42px;line-height:42px;font-size:21px;color:#c4c4c4;font-weight:normal;">45</div>
<div class="t" style="left:1079.81px;top:1504.72px;height:42px;line-height:42px;font-size:21px;color:#c4c4c4;font-weight:normal;">50</div>
<div class="t" style="left:1179.66px;top:1504.72px;height:42px;line-height:42px;font-size:21px;color:#c4c4c4;font-weight:normal;">55</div>
<div class="t" style="left:1279.51px;top:1504.72px;height:42px;line-height:42px;font-size:21px;color:#c4c4c4;font-weight:normal;">60</div>
<div class="t" style="left:1379.36px;top:1504.72px;height:42px;line-height:42px;font-size:21px;color:#c4c4c4;font-weight:normal;">65</div>
<div class="t" style="left:1479.21px;top:1504.72px;height:42px;line-height:42px;font-size:21px;color:#c4c4c4;font-weight:normal;">70</div>
<div class="t" style="left:1579.06px;top:1504.72px;height:42px;line-height:42px;font-size:21px;color:#c4c4c4;font-weight:normal;">75</div>
<div class="t" style="left:1678.91px;top:1504.72px;height:42px;line-height:42px;font-size:21px;color:#c4c4c4;font-weight:normal;">80</div>
<div class="t" style="left:1778.76px;top:1504.72px;height:42px;line-height:42px;font-size:21px;color:#c4c4c4;font-weight:normal;">85</div>
<div style="position:absolute;left:95px;top:1500px;width:12px;height:40px;overflow:hidden;">
<div class="t" style="left:-6px;top:4.7px;font-size:21px;line-height:42px;color:#c4c4c4;">0</div></div>
<div style="position:absolute;left:1824px;top:1514px;width:17px;height:30px;background:#5a62a8;"></div>
<div style="position:absolute;left:1831px;top:1544px;width:2.2px;height:14px;background:#7a80c0;"></div>
<div class="t" style="left:1843.00px;top:1504.72px;height:42px;line-height:42px;font-size:21px;color:#8a90e0;font-weight:normal;transform:scaleX(1.0267);transform-origin:0 0;">87</div>
<div style="position:absolute;left:92px;top:1564px;width:166px;height:34px;background:#1b1b1b;border-radius:6px;"></div>
<div class="t" style="left:143.00px;top:1556.03px;height:46px;line-height:46px;font-size:23px;color:#e0e0e0;font-weight:normal;transform:scaleX(0.9195);transform-origin:0 0;">1.25 F</div>
<div style="position:absolute;left:274px;top:1564px;width:1415px;height:34px;background:#3b3b3b;border-radius:6px;"></div>
<div style="position:absolute;left:285px;top:1569px;width:1.5px;height:24px;background:#5a5a5a;"></div>
<div style="position:absolute;left:289px;top:1569px;width:1.5px;height:24px;background:#5a5a5a;"></div>
<div style="position:absolute;left:293px;top:1569px;width:1.5px;height:24px;background:#5a5a5a;"></div>
<div style="position:absolute;left:1672px;top:1569px;width:1.5px;height:24px;background:#5a5a5a;"></div>
<div style="position:absolute;left:1676px;top:1569px;width:1.5px;height:24px;background:#5a5a5a;"></div>
<div style="position:absolute;left:1680px;top:1569px;width:1.5px;height:24px;background:#5a5a5a;"></div>
<div class="t" style="left:305.00px;top:1556.03px;height:46px;line-height:46px;font-size:23px;color:#e0e0e0;font-weight:normal;transform:scaleX(0.9195);transform-origin:0 0;">1.25 F</div>
<div class="t" style="left:1579.00px;top:1556.03px;height:46px;line-height:46px;font-size:23px;color:#e0e0e0;font-weight:normal;transform:scaleX(0.9615);transform-origin:0 0;">87.50 F</div>
<div style="position:absolute;left:1704px;top:1564px;width:165px;height:34px;background:#1b1b1b;border-radius:6px;"></div>
<div class="t" style="left:1749.00px;top:1556.03px;height:46px;line-height:46px;font-size:23px;color:#e0e0e0;font-weight:normal;transform:scaleX(0.9615);transform-origin:0 0;">87.50 F</div>
<div style="position:absolute;left:0px;top:1604px;width:2880px;height:47px;background:#1c1c1c;border-radius:0 0 20px 20px;"></div>
<div style="position:absolute;left:10px;top:1618px;width:28px;height:4px;background:#8f8f8f;"></div>
<div style="position:absolute;left:10px;top:1626px;width:28px;height:4px;background:#8f8f8f;"></div>
<div style="position:absolute;left:10px;top:1634px;width:28px;height:4px;background:#8f8f8f;"></div>
<svg style="position:absolute;left:56px;top:1613px;overflow:visible;" width="32" height="32" viewBox="0 0 32 32"><circle cx="15" cy="15" r="12.5" fill="none" stroke="#9a9a9a" stroke-width="2.6"/><path d="M9 15L14 20L26 5" fill="none" stroke="#9a9a9a" stroke-width="2.6"/></svg>
<div class="t" style="left:106.00px;top:1605.38px;height:44px;line-height:44px;font-size:22px;color:#c4c4c4;font-weight:normal;transform:scaleX(1.0734);transform-origin:0 0;">Rotate: Click and drag to rotate elements. Hold down SHIFT to add to quantize rotation / add to the selection in point mode, CTRL to remove.</div>
<div style="position:absolute;left:90px;top:1660px;width:2698px;height:129px;background:linear-gradient(180deg,#6f737c 0%,#676a73 50%,#5f626a 100%);border-radius:30px;box-shadow:inset 0 0 0 1.5px rgba(255,255,255,0.18);"></div>
<div style="position:absolute;left:92px;top:1662px;width:2694px;height:126px;background:linear-gradient(90deg,rgba(0,0,0,0) 0%,rgba(0,0,0,0) 62%,rgba(110,100,190,0.22) 70%,rgba(120,95,170,0.2) 75%,rgba(180,100,120,0.2) 80%,rgba(20,25,60,0.12) 86%,rgba(0,0,0,0) 92%);border-radius:28px;"></div>
<svg style="position:absolute;left:0px;top:0px;overflow:visible;" width="1" height="1" viewBox="0 0 1 1"><defs><linearGradient id="finderL" x1="0" y1="0" x2="0" y2="1"><stop offset="0" stop-color="#5ec2f7"/><stop offset="1" stop-color="#1f7ae6"/></linearGradient><linearGradient id="safari" x1="0" y1="0" x2="0" y2="1"><stop offset="0" stop-color="#3fb0f5"/><stop offset="1" stop-color="#1a6fdc"/></linearGradient><linearGradient id="green" x1="0" y1="0" x2="0" y2="1"><stop offset="0" stop-color="#86ee7a"/><stop offset="1" stop-color="#38b93a"/></linearGradient><linearGradient id="mail" x1="0" y1="0" x2="0" y2="1"><stop offset="0" stop-color="#2b7de9"/><stop offset="1" stop-color="#5ac8fb"/></linearGradient><linearGradient id="notes" x1="0" y1="0" x2="0" y2="1"><stop offset="0" stop-color="#f9f6ee"/><stop offset="1" stop-color="#e9e6dc"/></linearGradient><linearGradient id="music" x1="0" y1="0" x2="0" y2="1"><stop offset="0" stop-color="#fb5c74"/><stop offset="1" stop-color="#e8344a"/></linearGradient><linearGradient id="appstore" x1="0" y1="0" x2="0" y2="1"><stop offset="0" stop-color="#1ca7f8"/><stop offset="1" stop-color="#1f6de0"/></linearGradient><linearGradient id="settings" x1="0" y1="0" x2="0" y2="1"><stop offset="0" stop-color="#dfe3e5"/><stop offset="1" stop-color="#9a9896"/></linearGradient><radialGradient id="c4d" cx="0.45" cy="0.45" r="0.6"><stop offset="0" stop-color="#6a8ad8"/><stop offset="0.6" stop-color="#1a2a7a"/><stop offset="1" stop-color="#0a1040"/></radialGradient></defs></svg>
<svg style="position:absolute;left:110px;top:1680px;overflow:visible;" width="80" height="80" viewBox="0 0 80 80"><clipPath id="cf"><rect x="0" y="0" width="80" height="80" rx="18"/></clipPath><g clip-path="url(#cf)"><rect width="80" height="80" fill="#e6e9f0"/><path d="M0 0H48C42 12 38 26 40 42H34C35 56 38 68 44 80H0Z" fill="url(#finderL)"/></g><rect x="20" y="24" width="3.5" height="9" rx="1.7" fill="#1a1a1a"/><rect x="56" y="24" width="3.5" height="9" rx="1.7" fill="#1a1a1a"/><path d="M14 52C28 64 52 64 66 52" fill="none" stroke="#1a1a1a" stroke-width="3"/></svg>
<svg style="position:absolute;left:218px;top:1680px;overflow:visible;" width="80" height="80" viewBox="0 0 80 80"><rect x="0" y="0" width="80" height="80" rx="18" fill="#d6d6da" /><rect x="13" y="13" width="15" height="15" rx="4" fill="#5ad05a"/><rect x="33" y="13" width="15" height="15" rx="4" fill="#f5c242"/><rect x="53" y="13" width="15" height="15" rx="4" fill="#f08a2a"/><rect x="13" y="33" width="15" height="15" rx="4" fill="#e0402e"/><rect x="33" y="33" width="15" height="15" rx="4" fill="#b0b8c0"/><rect x="53" y="33" width="15" height="15" rx="4" fill="#f05060"/><rect x="13" y="53" width="15" height="15" rx="4" fill="#9a5ae0"/><rect x="33" y="53" width="15" height="15" rx="4" fill="#2a8af5"/><rect x="53" y="53" width="15" height="15" rx="4" fill="#5ad0a8"/></svg>
<svg style="position:absolute;left:326px;top:1680px;overflow:visible;" width="80" height="80" viewBox="0 0 80 80"><rect x="0" y="0" width="80" height="80" rx="18" fill="#f4f4f4" /><circle cx="40" cy="40" r="31" fill="url(#safari)"/><line x1="67.0" y1="40.0" x2="70.0" y2="40.0" stroke="#fff" stroke-width="0.9"/><line x1="68.3" y1="43.7" x2="69.7" y2="43.9" stroke="#fff" stroke-width="0.9"/><line x1="67.5" y1="47.4" x2="69.0" y2="47.8" stroke="#fff" stroke-width="0.9"/><line x1="66.3" y1="50.9" x2="67.7" y2="51.5" stroke="#fff" stroke-width="0.9"/><line x1="63.4" y1="53.5" x2="66.0" y2="55.0" stroke="#fff" stroke-width="0.9"/><line x1="62.6" y1="57.3" x2="63.8" y2="58.3" stroke="#fff" stroke-width="0.9"/><line x1="60.2" y1="60.2" x2="61.2" y2="61.2" stroke="#fff" stroke-width="0.9"/><line x1="57.3" y1="62.6" x2="58.3" y2="63.8" stroke="#fff" stroke-width="0.9"/><line x1="53.5" y1="63.4" x2="55.0" y2="66.0" stroke="#fff" stroke-width="0.9"/><line x1="50.9" y1="66.3" x2="51.5" y2="67.7" stroke="#fff" stroke-width="0.9"/><line x1="47.4" y1="67.5" x2="47.8" y2="69.0" stroke="#fff" stroke-width="0.9"/><line x1="43.7" y1="68.3" x2="43.9" y2="69.7" stroke="#fff" stroke-width="0.9"/><line x1="40.0" y1="67.0" x2="40.0" y2="70.0" stroke="#fff" stroke-width="0.9"/><line x1="36.3" y1="68.3" x2="36.1" y2="69.7" stroke="#fff" stroke-width="0.9"/><line x1="32.6" y1="67.5" x2="32.2" y2="69.0" stroke="#fff" stroke-width="0.9"/><line x1="29.1" y1="66.3" x2="28.5" y2="67.7" stroke="#fff" stroke-width="0.9"/><line x1="26.5" y1="63.4" x2="25.0" y2="66.0" stroke="#fff" stroke-width="0.9"/><line x1="22.7" y1="62.6" x2="21.7" y2="63.8" stroke="#fff" stroke-width="0.9"/><line x1="19.8" y1="60.2" x2="18.8" y2="61.2" stroke="#fff" stroke-width="0.9"/><line x1="17.4" y1="57.3" x2="16.2" y2="58.3" stroke="#fff" stroke-width="0.9"/><line x1="16.6" y1="53.5" x2="14.0" y2="55.0" stroke="#fff" stroke-width="0.9"/><line x1="13.7" y1="50.9" x2="12.3" y2="51.5" stroke="#fff" stroke-width="0.9"/><line x1="12.5" y1="47.4" x2="11.0" y2="47.8" stroke="#fff" stroke-width="0.9"/><line x1="11.7" y1="43.7" x2="10.3" y2="43.9" stroke="#fff" stroke-width="0.9"/><line x1="13.0" y1="40.0" x2="10.0" y2="40.0" stroke="#fff" stroke-width="0.9"/><line x1="11.7" y1="36.3" x2="10.3" y2="36.1" stroke="#fff" stroke-width="0.9"/><line x1="12.5" y1="32.6" x2="11.0" y2="32.2" stroke="#fff" stroke-width="0.9"/><line x1="13.7" y1="29.1" x2="12.3" y2="28.5" stroke="#fff" stroke-width="0.9"/><line x1="16.6" y1="26.5" x2="14.0" y2="25.0" stroke="#fff" stroke-width="0.9"/><line x1="17.4" y1="22.7" x2="16.2" y2="21.7" stroke="#fff" stroke-width="0.9"/><line x1="19.8" y1="19.8" x2="18.8" y2="18.8" stroke="#fff" stroke-width="0.9"/><line x1="22.7" y1="17.4" x2="21.7" y2="16.2" stroke="#fff" stroke-width="0.9"/><line x1="26.5" y1="16.6" x2="25.0" y2="14.0" stroke="#fff" stroke-width="0.9"/><line x1="29.1" y1="13.7" x2="28.5" y2="12.3" stroke="#fff" stroke-width="0.9"/><line x1="32.6" y1="12.5" x2="32.2" y2="11.0" stroke="#fff" stroke-width="0.9"/><line x1="36.3" y1="11.7" x2="36.1" y2="10.3" stroke="#fff" stroke-width="0.9"/><line x1="40.0" y1="13.0" x2="40.0" y2="10.0" stroke="#fff" stroke-width="0.9"/><line x1="43.7" y1="11.7" x2="43.9" y2="10.3" stroke="#fff" stroke-width="0.9"/><line x1="47.4" y1="12.5" x2="47.8" y2="11.0" stroke="#fff" stroke-width="0.9"/><line x1="50.9" y1="13.7" x2="51.5" y2="12.3" stroke="#fff" stroke-width="0.9"/><line x1="53.5" y1="16.6" x2="55.0" y2="14.0" stroke="#fff" stroke-width="0.9"/><line x1="57.3" y1="17.4" x2="58.3" y2="16.2" stroke="#fff" stroke-width="0.9"/><line x1="60.2" y1="19.8" x2="61.2" y2="18.8" stroke="#fff" stroke-width="0.9"/><line x1="62.6" y1="22.7" x2="63.8" y2="21.7" stroke="#fff" stroke-width="0.9"/><line x1="63.4" y1="26.5" x2="66.0" y2="25.0" stroke="#fff" stroke-width="0.9"/><line x1="66.3" y1="29.1" x2="67.7" y2="28.5" stroke="#fff" stroke-width="0.9"/><line x1="67.5" y1="32.6" x2="69.0" y2="32.2" stroke="#fff" stroke-width="0.9"/><line x1="68.3" y1="36.3" x2="69.7" y2="36.1" stroke="#fff" stroke-width="0.9"/><polygon points="62,18 44,44 36,36" fill="#f2433a"/><polygon points="18,62 36,36 44,44" fill="#f4f4f4"/></svg>
<svg style="position:absolute;left:434px;top:1680px;overflow:visible;" width="80" height="80" viewBox="0 0 80 80"><rect x="0" y="0" width="80" height="80" rx="18" fill="#ffffff" /><path d="M14 44C14 26 28 14 44 14C60 14 68 26 68 36C68 46 58 50 50 46C56 40 54 30 44 30C32 30 24 40 26 52C28 62 38 66 48 66C36 70 14 64 14 44Z" fill="#1a73c8"/><path d="M14 44C16 30 30 20 44 22C56 24 64 30 68 36C64 26 54 14 38 16C24 18 14 30 14 44Z" fill="#3fc0e0"/><path d="M44 30C54 30 56 40 50 46C58 50 68 46 68 36C70 50 62 60 50 60C40 60 34 52 36 44C38 36 42 30 44 30Z" fill="#52c472"/></svg>
<svg style="position:absolute;left:542px;top:1680px;overflow:visible;" width="80" height="80" viewBox="0 0 80 80"><rect x="0" y="0" width="80" height="80" rx="18" fill="url(#green)" /><ellipse cx="40" cy="38" rx="26" ry="21" fill="#f4f8f2"/><path d="M22 52L18 62L32 56Z" fill="#f4f8f2"/></svg>
<svg style="position:absolute;left:650px;top:1680px;overflow:visible;" width="80" height="80" viewBox="0 0 80 80"><clipPath id="cm"><rect x="0" y="0" width="80" height="80" rx="18"/></clipPath><g clip-path="url(#cm)"><rect width="80" height="80" fill="#e8e8e4"/><polygon points="52,0 80,0 80,60 56,30" fill="#6fd06a"/><polygon points="0,40 10,50 10,80 0,80" fill="#e48ad0"/><polygon points="48,58 70,80 38,80 40,62" fill="#f5d04a"/><rect x="24" y="0" width="14" height="50" fill="#3a8af0"/><circle cx="66" cy="10" r="16" fill="none" stroke="#bcbcbc" stroke-width="5"/></g><circle cx="30" cy="48" r="15" fill="#fff"/><circle cx="30" cy="48" r="12" fill="#3a8af0"/><polygon points="30,38 37,55 30,51 23,55" fill="#fff"/></svg>
<svg style="position:absolute;left:758px;top:1680px;overflow:visible;" width="80" height="80" viewBox="0 0 80 80"><rect x="0" y="0" width="80" height="80" rx="18" fill="url(#mail)" /><rect x="12" y="22" width="56" height="36" rx="3" fill="#f2f2f2"/><path d="M12 24L40 44L68 24" fill="none" stroke="#c8c8c8" stroke-width="2"/><path d="M12 58L32 40M68 58L48 40" stroke="#d8d8d8" stroke-width="1.5"/></svg>
<svg style="position:absolute;left:866px;top:1680px;overflow:visible;" width="80" height="80" viewBox="0 0 80 80"><rect x="0" y="0" width="80" height="80" rx="18" fill="#f6f6f6" /><ellipse cx="40" cy="23" rx="10" ry="17" fill="#f5a23a" opacity="0.88" transform="rotate(22 40 40)"/><ellipse cx="40" cy="23" rx="10" ry="17" fill="#f5d33a" opacity="0.88" transform="rotate(67 40 40)"/><ellipse cx="40" cy="23" rx="10" ry="17" fill="#8fd04a" opacity="0.88" transform="rotate(112 40 40)"/><ellipse cx="40" cy="23" rx="10" ry="17" fill="#4ac08a" opacity="0.88" transform="rotate(157 40 40)"/><ellipse cx="40" cy="23" rx="10" ry="17" fill="#3a9ad8" opacity="0.88" transform="rotate(202 40 40)"/><ellipse cx="40" cy="23" rx="10" ry="17" fill="#6a7ae0" opacity="0.88" transform="rotate(247 40 40)"/><ellipse cx="40" cy="23" rx="10" ry="17" fill="#b86ad0" opacity="0.88" transform="rotate(292 40 40)"/><ellipse cx="40" cy="23" rx="10" ry="17" fill="#e8506a" opacity="0.88" transform="rotate(337 40 40)"/></svg>
<svg style="position:absolute;left:974px;top:1680px;overflow:visible;" width="80" height="80" viewBox="0 0 80 80"><rect x="0" y="0" width="80" height="80" rx="18" fill="url(#green)" /><rect x="12" y="24" width="38" height="32" rx="8" fill="#f2f6f0"/><polygon points="54,36 68,26 68,54 54,44" fill="#f2f6f0"/></svg>
<svg style="position:absolute;left:1082px;top:1680px;overflow:visible;" width="80" height="80" viewBox="0 0 80 80"><clipPath id="cc"><rect x="0" y="0" width="80" height="80" rx="18"/></clipPath><g clip-path="url(#cc)"><rect width="80" height="80" fill="#f8f8f8"/><rect width="80" height="24" fill="#e95a4a"/></g><text x="40" y="70" text-anchor="middle" font-family="Liberation Sans" font-size="42" fill="#222">15</text><text x="30" y="19" text-anchor="middle" font-family="Liberation Sans" font-weight="bold" font-size="16" fill="#fff">9</text><path d="M40 6H50V21M40 6V14C40 18 39 20 37 21M40 11H50M40 16H50" fill="none" stroke="#fff" stroke-width="2"/></svg>
<svg style="position:absolute;left:1190px;top:1680px;overflow:visible;" width="80" height="80" viewBox="0 0 80 80"><rect x="66" y="8" width="12" height="64" rx="4" fill="#c8c8c8"/><rect x="70" y="22" width="8" height="14" fill="#4ab0f0"/><rect x="70" y="38" width="8" height="14" fill="#f5a03a"/><rect x="70" y="54" width="8" height="12" fill="#6ad06a"/><rect x="0" y="0" width="72" height="80" rx="16" fill="#a88248"/><circle cx="36" cy="38" r="24" fill="none" stroke="#8a6a38" stroke-width="2.5"/><circle cx="36" cy="32" r="8" fill="#8a6a38"/><path d="M20 54C24 44 48 44 52 54" fill="#8a6a38"/></svg>
<svg style="position:absolute;left:1298px;top:1680px;overflow:visible;" width="80" height="80" viewBox="0 0 80 80"><rect x="0" y="0" width="80" height="80" rx="18" fill="#fbfbfb" /><circle cx="16" cy="20" r="6" fill="none" stroke="#2a7af5" stroke-width="2"/><circle cx="16" cy="20" r="4" fill="#2a7af5"/><rect x="30" y="19" width="40" height="2" fill="#d0d0d0"/><circle cx="16" cy="40" r="6" fill="none" stroke="#e8403a" stroke-width="2"/><circle cx="16" cy="40" r="4" fill="#e8403a"/><rect x="30" y="39" width="40" height="2" fill="#d0d0d0"/><circle cx="16" cy="60" r="6" fill="none" stroke="#f5a02a" stroke-width="2"/><circle cx="16" cy="60" r="4" fill="#f5a02a"/><rect x="30" y="59" width="40" height="2" fill="#d0d0d0"/></svg>
<svg style="position:absolute;left:1406px;top:1680px;overflow:visible;" width="80" height="80" viewBox="0 0 80 80"><clipPath id="cn"><rect x="0" y="0" width="80" height="80" rx="18"/></clipPath><g clip-path="url(#cn)"><rect width="80" height="80" fill="url(#notes)"/><rect width="80" height="20" fill="#f7cd3f"/><rect y="20" width="80" height="2" fill="#ddd"/><rect y="39" width="80" height="1.5" fill="#d8d6d0"/><rect y="60" width="80" height="1.5" fill="#d8d6d0"/></g></svg>
<svg style="position:absolute;left:1514px;top:1680px;overflow:visible;" width="80" height="80" viewBox="0 0 80 80"><rect x="0" y="0" width="80" height="80" rx="18" fill="#fbfbfb" /><circle cx="34" cy="50" r="20" fill="#f5804a"/><rect x="30" y="14" width="38" height="34" rx="4" fill="#5ad0f5"/><path d="M18 48C24 30 30 30 30 42C30 52 38 30 44 36C48 40 48 44 54 38C58 34 62 40 66 36" fill="none" stroke="#1a3a8a" stroke-width="3.5"/></svg>
<svg style="position:absolute;left:1622px;top:1680px;overflow:visible;" width="80" height="80" viewBox="0 0 80 80"><rect x="0" y="0" width="80" height="80" rx="18" fill="#1c1c1c" /><text x="50" y="52" text-anchor="middle" font-family="Liberation Sans" font-weight="bold" font-size="30" fill="#fff">tv</text><path d="M24 30C27 30 29 28 29 25C26 25 24 27 24 30ZM26 32C22 32 19 35 19 40C19 46 23 52 26 52C28 52 28 51 30 51C32 51 32 52 34 52C36 52 38 48 39 45C36 44 35 41 35 39C35 36 37 35 38 34C36 32 34 32 33 32C31 32 30 33 29 33C28 33 27 32 26 32Z" fill="#fff"/></svg>
<svg style="position:absolute;left:1730px;top:1680px;overflow:visible;" width="80" height="80" viewBox="0 0 80 80"><rect x="0" y="0" width="80" height="80" rx="18" fill="url(#music)" /><path d="M32 54V22L58 16V48" fill="none" stroke="#fff" stroke-width="5"/><ellipse cx="26" cy="56" rx="8" ry="6.5" fill="#fff"/><ellipse cx="52" cy="50" rx="8" ry="6.5" fill="#fff"/></svg>
<svg style="position:absolute;left:1838px;top:1680px;overflow:visible;" width="80" height="80" viewBox="0 0 80 80"><rect x="0" y="0" width="80" height="80" rx="18" fill="url(#appstore)" /><path d="M44 18L24 54M36 18L56 54M16 46H64" stroke="#fff" stroke-width="5.5" stroke-linecap="round"/></svg>
<svg style="position:absolute;left:1946px;top:1680px;overflow:visible;" width="80" height="80" viewBox="0 0 80 80"><rect x="0" y="0" width="80" height="80" rx="18" fill="url(#settings)" /><circle cx="40" cy="40" r="35" fill="#3a3c3c"/><circle cx="40" cy="40" r="30" fill="#8a8c8c"/><line x1="70.0" y1="40.0" x2="74.5" y2="40.0" stroke="#a8aaaa" stroke-width="1.3"/><line x1="69.8" y1="43.1" x2="74.3" y2="43.6" stroke="#a8aaaa" stroke-width="1.3"/><line x1="69.3" y1="46.2" x2="73.7" y2="47.2" stroke="#a8aaaa" stroke-width="1.3"/><line x1="68.5" y1="49.3" x2="72.8" y2="50.7" stroke="#a8aaaa" stroke-width="1.3"/><line x1="67.4" y1="52.2" x2="71.5" y2="54.0" stroke="#a8aaaa" stroke-width="1.3"/><line x1="66.0" y1="55.0" x2="69.9" y2="57.2" stroke="#a8aaaa" stroke-width="1.3"/><line x1="64.3" y1="57.6" x2="67.9" y2="60.3" stroke="#a8aaaa" stroke-width="1.3"/><line x1="62.3" y1="60.1" x2="65.6" y2="63.1" stroke="#a8aaaa" stroke-width="1.3"/><line x1="60.1" y1="62.3" x2="63.1" y2="65.6" stroke="#a8aaaa" stroke-width="1.3"/><line x1="57.6" y1="64.3" x2="60.3" y2="67.9" stroke="#a8aaaa" stroke-width="1.3"/><line x1="55.0" y1="66.0" x2="57.2" y2="69.9" stroke="#a8aaaa" stroke-width="1.3"/><line x1="52.2" y1="67.4" x2="54.0" y2="71.5" stroke="#a8aaaa" stroke-width="1.3"/><line x1="49.3" y1="68.5" x2="50.7" y2="72.8" stroke="#a8aaaa" stroke-width="1.3"/><line x1="46.2" y1="69.3" x2="47.2" y2="73.7" stroke="#a8aaaa" stroke-width="1.3"/><line x1="43.1" y1="69.8" x2="43.6" y2="74.3" stroke="#a8aaaa" stroke-width="1.3"/><line x1="40.0" y1="70.0" x2="40.0" y2="74.5" stroke="#a8aaaa" stroke-width="1.3"/><line x1="36.9" y1="69.8" x2="36.4" y2="74.3" stroke="#a8aaaa" stroke-width="1.3"/><line x1="33.8" y1="69.3" x2="32.8" y2="73.7" stroke="#a8aaaa" stroke-width="1.3"/><line x1="30.7" y1="68.5" x2="29.3" y2="72.8" stroke="#a8aaaa" stroke-width="1.3"/><line x1="27.8" y1="67.4" x2="26.0" y2="71.5" stroke="#a8aaaa" stroke-width="1.3"/><line x1="25.0" y1="66.0" x2="22.8" y2="69.9" stroke="#a8aaaa" stroke-width="1.3"/><line x1="22.4" y1="64.3" x2="19.7" y2="67.9" stroke="#a8aaaa" stroke-width="1.3"/><line x1="19.9" y1="62.3" x2="16.9" y2="65.6" stroke="#a8aaaa" stroke-width="1.3"/><line x1="17.7" y1="60.1" x2="14.4" y2="63.1" stroke="#a8aaaa" stroke-width="1.3"/><line x1="15.7" y1="57.6" x2="12.1" y2="60.3" stroke="#a8aaaa" stroke-width="1.3"/><line x1="14.0" y1="55.0" x2="10.1" y2="57.2" stroke="#a8aaaa" stroke-width="1.3"/><line x1="12.6" y1="52.2" x2="8.5" y2="54.0" stroke="#a8aaaa" stroke-width="1.3"/><line x1="11.5" y1="49.3" x2="7.2" y2="50.7" stroke="#a8aaaa" stroke-width="1.3"/><line x1="10.7" y1="46.2" x2="6.3" y2="47.2" stroke="#a8aaaa" stroke-width="1.3"/><line x1="10.2" y1="43.1" x2="5.7" y2="43.6" stroke="#a8aaaa" stroke-width="1.3"/><line x1="10.0" y1="40.0" x2="5.5" y2="40.0" stroke="#a8aaaa" stroke-width="1.3"/><line x1="10.2" y1="36.9" x2="5.7" y2="36.4" stroke="#a8aaaa" stroke-width="1.3"/><line x1="10.7" y1="33.8" x2="6.3" y2="32.8" stroke="#a8aaaa" stroke-width="1.3"/><line x1="11.5" y1="30.7" x2="7.2" y2="29.3" stroke="#a8aaaa" stroke-width="1.3"/><line x1="12.6" y1="27.8" x2="8.5" y2="26.0" stroke="#a8aaaa" stroke-width="1.3"/><line x1="14.0" y1="25.0" x2="10.1" y2="22.7" stroke="#a8aaaa" stroke-width="1.3"/><line x1="15.7" y1="22.4" x2="12.1" y2="19.7" stroke="#a8aaaa" stroke-width="1.3"/><line x1="17.7" y1="19.9" x2="14.4" y2="16.9" stroke="#a8aaaa" stroke-width="1.3"/><line x1="19.9" y1="17.7" x2="16.9" y2="14.4" stroke="#a8aaaa" stroke-width="1.3"/><line x1="22.4" y1="15.7" x2="19.7" y2="12.1" stroke="#a8aaaa" stroke-width="1.3"/><line x1="25.0" y1="14.0" x2="22.7" y2="10.1" stroke="#a8aaaa" stroke-width="1.3"/><line x1="27.8" y1="12.6" x2="26.0" y2="8.5" stroke="#a8aaaa" stroke-width="1.3"/><line x1="30.7" y1="11.5" x2="29.3" y2="7.2" stroke="#a8aaaa" stroke-width="1.3"/><line x1="33.8" y1="10.7" x2="32.8" y2="6.3" stroke="#a8aaaa" stroke-width="1.3"/><line x1="36.9" y1="10.2" x2="36.4" y2="5.7" stroke="#a8aaaa" stroke-width="1.3"/><line x1="40.0" y1="10.0" x2="40.0" y2="5.5" stroke="#a8aaaa" stroke-width="1.3"/><line x1="43.1" y1="10.2" x2="43.6" y2="5.7" stroke="#a8aaaa" stroke-width="1.3"/><line x1="46.2" y1="10.7" x2="47.2" y2="6.3" stroke="#a8aaaa" stroke-width="1.3"/><line x1="49.3" y1="11.5" x2="50.7" y2="7.2" stroke="#a8aaaa" stroke-width="1.3"/><line x1="52.2" y1="12.6" x2="54.0" y2="8.5" stroke="#a8aaaa" stroke-width="1.3"/><line x1="55.0" y1="14.0" x2="57.2" y2="10.1" stroke="#a8aaaa" stroke-width="1.3"/><line x1="57.6" y1="15.7" x2="60.3" y2="12.1" stroke="#a8aaaa" stroke-width="1.3"/><line x1="60.1" y1="17.7" x2="63.1" y2="14.4" stroke="#a8aaaa" stroke-width="1.3"/><line x1="62.3" y1="19.9" x2="65.6" y2="16.9" stroke="#a8aaaa" stroke-width="1.3"/><line x1="64.3" y1="22.4" x2="67.9" y2="19.7" stroke="#a8aaaa" stroke-width="1.3"/><line x1="66.0" y1="25.0" x2="69.9" y2="22.7" stroke="#a8aaaa" stroke-width="1.3"/><line x1="67.4" y1="27.8" x2="71.5" y2="26.0" stroke="#a8aaaa" stroke-width="1.3"/><line x1="68.5" y1="30.7" x2="72.8" y2="29.3" stroke="#a8aaaa" stroke-width="1.3"/><line x1="69.3" y1="33.8" x2="73.7" y2="32.8" stroke="#a8aaaa" stroke-width="1.3"/><line x1="69.8" y1="36.9" x2="74.3" y2="36.4" stroke="#a8aaaa" stroke-width="1.3"/><circle cx="40" cy="40" r="25" fill="#5a5c5c"/><circle cx="40" cy="40" r="21" fill="#8a8c8c"/><circle cx="40" cy="40" r="17" fill="#6a6c6c"/><path d="M40 40V20M40 40L57 50M40 40L23 50" stroke="#b8baba" stroke-width="3"/><circle cx="40" cy="40" r="2.5" fill="#333"/></svg>
<div style="position:absolute;left:2001px;top:1670px;width:38px;height:38px;border-radius:50%;background:#e5503e;"></div>
<div class="t" style="left:2012.00px;top:1667.03px;height:46px;line-height:46px;font-size:23px;color:#fff;font-weight:normal;transform:scaleX(1.1765);transform-origin:0 0;">2</div>
<div style="position:absolute;left:2064px;top:1678px;width:2px;height:94px;background:#2e304c;"></div>
<div style="position:absolute;left:2544px;top:1678px;width:2px;height:94px;background:#2e304c;"></div>
<svg style="position:absolute;left:2102px;top:1680px;overflow:visible;" width="80" height="80" viewBox="0 0 80 80"><rect x="0" y="0" width="80" height="80" rx="18" fill="#f8f8fb" /><circle cx="52" cy="24" r="9" fill="#7b83eb"/><circle cx="40" cy="20" r="10" fill="#5059c9"/><path d="M44 34H66V52C66 60 60 66 54 66C48 66 44 60 44 52Z" fill="#7b83eb"/><path d="M28 34H54V56C54 64 48 70 40 70C32 70 28 64 28 56Z" fill="#5059c9"/><rect x="14" y="30" width="28" height="28" rx="3" fill="#4b53bc"/><path d="M20 37H36M28 37V52" stroke="#fff" stroke-width="4"/></svg>
<svg style="position:absolute;left:2210px;top:1680px;overflow:visible;" width="80" height="80" viewBox="0 0 80 80"><rect x="0" y="0" width="80" height="80" rx="18" fill="#fbfbfb" /><path d="M16 20L46 64H64V20H48V40L34 20Z" fill="#f04a5a"/><path d="M16 24V64H34L16 38Z" fill="#f04a5a"/></svg>
<svg style="position:absolute;left:2318px;top:1680px;overflow:visible;" width="80" height="80" viewBox="0 0 80 80"><rect x="0" y="0" width="80" height="80" rx="18" fill="#c8302a" /><polygon points="40,14 64,28 64,54 40,68 16,54 16,28" fill="none" stroke="#fff" stroke-width="6"/><path d="M16 28L40 42L64 28M40 42V68" stroke="#fff" stroke-width="5" fill="none"/></svg>
<svg style="position:absolute;left:2420px;top:1674px;overflow:visible;" width="92" height="92" viewBox="0 0 92 92"><defs><radialGradient id="c4ring" cx="0.35" cy="0.3" r="0.8"><stop offset="0" stop-color="#ffffff"/><stop offset="0.7" stop-color="#d8d8e4"/><stop offset="1" stop-color="#9a9aae"/></radialGradient><radialGradient id="c4blue" cx="0.45" cy="0.55" r="0.6"><stop offset="0" stop-color="#8aa8f0"/><stop offset="0.35" stop-color="#3a58c8"/><stop offset="0.8" stop-color="#15206a"/><stop offset="1" stop-color="#0a1040"/></radialGradient></defs><circle cx="46" cy="46" r="46" fill="url(#c4ring)"/><ellipse cx="50" cy="44" rx="35" ry="36" fill="url(#c4blue)"/><path d="M6 44C10 20 34 4 62 8C70 10 68 22 58 24C40 24 26 32 20 52C16 60 8 58 6 44Z" fill="#fafafc"/><path d="M76 34C86 48 84 70 66 84C80 76 90 56 76 34Z" fill="#e8e8f0"/></svg>
<svg style="position:absolute;left:2574px;top:1685px;overflow:visible;" width="96" height="84" viewBox="0 0 96 84"><rect x="0" y="0" width="95" height="70" fill="#1c1c20"/><rect x="0" y="0" width="95" height="2.5" fill="#eee"/><rect x="4" y="18" width="87" height="3" fill="#333"/><rect x="4" y="24" width="87" height="19" fill="#5a4a6a"/><rect x="30" y="26" width="20" height="15" fill="#b08050"/><rect x="60" y="27" width="25" height="14" fill="#c8b8e8"/><rect x="4" y="46" width="26" height="16" fill="#8a8a8a"/><rect x="33" y="46" width="26" height="16" fill="#7a8050"/><rect x="4" y="64" width="56" height="6" fill="#bbb"/><rect x="46" y="4" width="8" height="3" fill="#8a90ff"/><circle cx="77" cy="64" r="17" fill="#e8e8f0"/><circle cx="79" cy="63" r="12" fill="url(#c4d)"/></svg>
<svg style="position:absolute;left:2694px;top:1672px;overflow:visible;" width="72" height="94" viewBox="0 0 72 94"><defs><linearGradient id="trash" x1="0" y1="0" x2="1" y2="0"><stop offset="0" stop-color="#c8cacd"/><stop offset="0.5" stop-color="#e6e8ea"/><stop offset="1" stop-color="#c4c6c8"/></linearGradient></defs><path d="M1 12L12 90C20 94 52 94 60 90L71 12Z" fill="url(#trash)"/><ellipse cx="36" cy="12" rx="35" ry="8" fill="#d4d6d8"/><path d="M6 12L14 2L26 8L34 0L46 6L54 1L66 10L56 18L40 14L24 18Z" fill="#b8bcc0"/><path d="M22 8L30 4L34 14Z" fill="#4a90c8"/><path d="M42 6L52 4L50 14Z" fill="#c86a3a"/></svg>
<div style="position:absolute;left:146px;top:1778px;width:8px;height:8px;border-radius:50%;background:#111;"></div>
<div style="position:absolute;left:362px;top:1778px;width:8px;height:8px;border-radius:50%;background:#111;"></div>
<div style="position:absolute;left:2138px;top:1778px;width:8px;height:8px;border-radius:50%;background:#111;"></div>
<div style="position:absolute;left:2354px;top:1778px;width:8px;height:8px;border-radius:50%;background:#111;"></div>
<div style="position:absolute;left:2462px;top:1778px;width:8px;height:8px;border-radius:50%;background:#111;"></div>
<div style="position:absolute;left:2878px;top:106px;width:2px;height:1520px;background:#333;"></div>
</body></html>
